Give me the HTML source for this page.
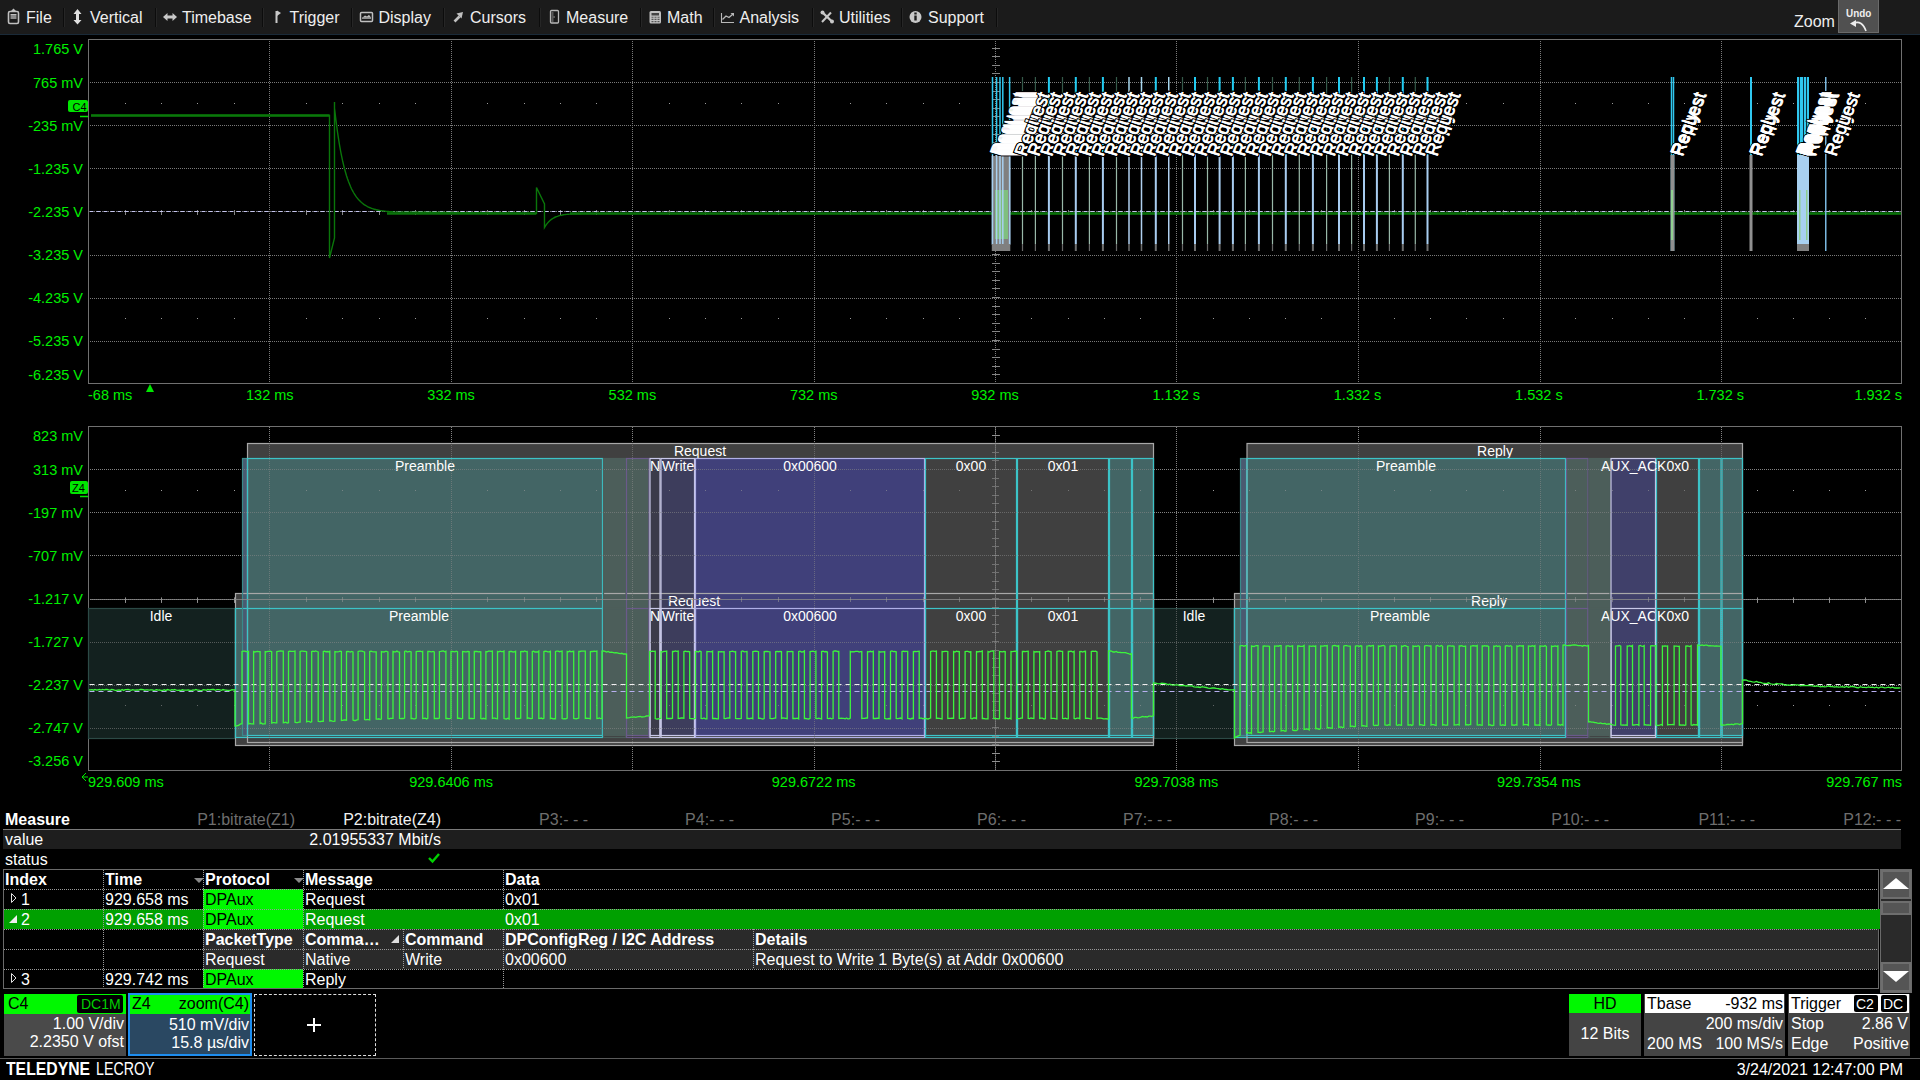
<!DOCTYPE html>
<html><head><meta charset="utf-8"><style>
*{margin:0;padding:0;box-sizing:border-box}
html,body{width:1920px;height:1080px;overflow:hidden;background:#000;font-family:"Liberation Sans", sans-serif;color:#fff}
.abs{position:absolute}
#menu{position:absolute;left:0;top:0;width:1920px;height:35px;background:#1b1b1b;border-bottom:1px solid #1a2a38}
.mi{position:absolute;top:8px;font-size:16px;line-height:19px;color:#eee;white-space:nowrap}
.sep{position:absolute;top:8px;width:2px;height:19px;background:#0c0c0c;border-right:1px solid #262626}
svg text{font-family:"Liberation Sans", sans-serif}
.t{position:absolute;white-space:nowrap;font-size:16px;line-height:20px}
</style></head><body>
<div id="menu"><div class="mi" style="left:26px">File</div><div class="mi" style="left:90px">Vertical</div><div class="mi" style="left:182px">Timebase</div><div class="mi" style="left:289.5px">Trigger</div><div class="mi" style="left:378.5px">Display</div><div class="mi" style="left:470px">Cursors</div><div class="mi" style="left:566px">Measure</div><div class="mi" style="left:667px">Math</div><div class="mi" style="left:739.5px">Analysis</div><div class="mi" style="left:839px">Utilities</div><div class="mi" style="left:928px">Support</div><div class="sep" style="left:63px"></div><div class="sep" style="left:155px"></div><div class="sep" style="left:262px"></div><div class="sep" style="left:351px"></div><div class="sep" style="left:443px"></div><div class="sep" style="left:539px"></div><div class="sep" style="left:640px"></div><div class="sep" style="left:713px"></div><div class="sep" style="left:812px"></div><div class="sep" style="left:901px"></div><div class="sep" style="left:996px"></div>
<svg style="position:absolute;left:0;top:0" width="1000" height="34">
 <rect x="8.5" y="11.5" width="10" height="12" rx="1.5" fill="none" stroke="#c0c0c0" stroke-width="1.6"/>
 <path d="M11,11 L13.5,8.5 L16,11 Z" fill="#c0c0c0"/><rect x="10.5" y="15" width="6" height="4" fill="#8a8a8a"/><rect x="10.5" y="14" width="6" height="1" fill="#c0c0c0"/>
 <path d="M77.5,9 L73.5,14 L76,14 L76,20 L73.5,20 L77.5,24.5 L81.5,20 L79,20 L79,14 L81.5,14 Z" fill="#e0e0e0"/>
 <path d="M163,17 L167.5,13 L167.5,15.5 L172.5,15.5 L172.5,13 L177,17 L172.5,21 L172.5,18.5 L167.5,18.5 L167.5,21 Z" fill="#c8c8c8"/>
 <path d="M276.5,11 L276.5,23" stroke="#c8c8c8" stroke-width="2"/><path d="M277,10.5 L281,13 L277,16 Z" fill="#c8c8c8"/>
 <rect x="360.5" y="12.5" width="12" height="9" rx="1" fill="none" stroke="#c0c0c0" stroke-width="1.5"/><path d="M362.5,17.5 L365,15.5 L367,16.5 L369,14.8 L371,17.5 Z" fill="#c0c0c0"/><rect x="362" y="17.5" width="9" height="1.2" fill="#c0c0c0"/>
 <path d="M454.5,21.5 L459.5,16.5" stroke="#c0c0c0" stroke-width="2.6"/><path d="M456.5,13.5 L463,12 L461.5,18.5 Z" fill="#c0c0c0"/>
 <rect x="550.5" y="10.5" width="8" height="12.5" rx="1" fill="none" stroke="#b8b8b8" stroke-width="1.3"/><path d="M551.5,13h2 M551.5,15h2 M551.5,17h3.5 M551.5,19h2 M551.5,21h2" stroke="#b8b8b8" stroke-width="0.8"/>
 <rect x="649.5" y="11" width="11.5" height="12.5" rx="1.5" fill="#c0c0c0"/><rect x="651.5" y="13" width="7.5" height="2.5" fill="#444"/>
 <path d="M651.5,17.2h2 M654.5,17.2h2 M657.5,17.2h2 M651.5,19.4h2 M654.5,19.4h2 M657.5,19.4h2 M651.5,21.6h2 M654.5,21.6h2 M657.5,21.6h2" stroke="#555" stroke-width="1.1"/>
 <path d="M721.5,13 L721.5,22.5 L734,22.5" fill="none" stroke="#b8b8b8" stroke-width="1.1"/><path d="M722.5,19.5 L726,16 L729,17.5 L733,14" fill="none" stroke="#b8b8b8" stroke-width="1.3"/><path d="M730.5,13 L734,13 L734,16.5 Z" fill="#b8b8b8"/>
 <path d="M822,22 L831,12.5" stroke="#c8c8c8" stroke-width="2"/><path d="M823,13 L832,21.5" stroke="#c8c8c8" stroke-width="2.4"/><circle cx="822.5" cy="12.5" r="2" fill="#c8c8c8"/><circle cx="832" cy="21.5" r="2" fill="#c8c8c8"/>
 <circle cx="915.5" cy="17" r="6" fill="#c8c8c8"/><rect x="914.3" y="15.5" width="2.4" height="5" fill="#1b1b1b"/><rect x="914.3" y="12.5" width="2.4" height="2" fill="#1b1b1b"/>
</svg>
<div class="t" style="left:1794px;top:12px;font-size:16px;color:#eee">Zoom</div>
<div class="abs" style="left:1838px;top:0;width:41px;height:33px;background:#505050;border:1px solid #6a6a6a;border-top:0"></div>
<div class="t" style="left:1846px;top:7px;font-size:11px;line-height:12px;font-weight:bold;color:#eee;transform:scaleX(0.9);transform-origin:0 0">Undo</div>
<svg class="abs" style="left:1849px;top:18px" width="20" height="14"><path d="M5,5 Q13,2 17,13" fill="none" stroke="#eee" stroke-width="1.6"/><path d="M1,5.5 L7,2 L7,9 Z" fill="#eee"/></svg>
</div>
<svg class="abs" style="left:0;top:0" width="1920" height="1080">
<line x1="269.5" y1="41" x2="269.5" y2="382.5" stroke="#7a7a7a" stroke-width="1" stroke-dasharray="1 1" shape-rendering="crispEdges"/>
<line x1="451.5" y1="41" x2="451.5" y2="382.5" stroke="#7a7a7a" stroke-width="1" stroke-dasharray="1 1" shape-rendering="crispEdges"/>
<line x1="632.5" y1="41" x2="632.5" y2="382.5" stroke="#7a7a7a" stroke-width="1" stroke-dasharray="1 1" shape-rendering="crispEdges"/>
<line x1="814.5" y1="41" x2="814.5" y2="382.5" stroke="#7a7a7a" stroke-width="1" stroke-dasharray="1 1" shape-rendering="crispEdges"/>
<line x1="995.5" y1="41" x2="995.5" y2="382.5" stroke="#7a7a7a" stroke-width="1" stroke-dasharray="1 1" shape-rendering="crispEdges"/>
<line x1="1176.5" y1="41" x2="1176.5" y2="382.5" stroke="#7a7a7a" stroke-width="1" stroke-dasharray="1 1" shape-rendering="crispEdges"/>
<line x1="1358.5" y1="41" x2="1358.5" y2="382.5" stroke="#7a7a7a" stroke-width="1" stroke-dasharray="1 1" shape-rendering="crispEdges"/>
<line x1="1540.5" y1="41" x2="1540.5" y2="382.5" stroke="#7a7a7a" stroke-width="1" stroke-dasharray="1 1" shape-rendering="crispEdges"/>
<line x1="1721.5" y1="41" x2="1721.5" y2="382.5" stroke="#7a7a7a" stroke-width="1" stroke-dasharray="1 1" shape-rendering="crispEdges"/>
<line x1="90" y1="82.5" x2="1901" y2="82.5" stroke="#7a7a7a" stroke-width="1" stroke-dasharray="1 1" shape-rendering="crispEdges"/>
<line x1="90" y1="125.5" x2="1901" y2="125.5" stroke="#7a7a7a" stroke-width="1" stroke-dasharray="1 1" shape-rendering="crispEdges"/>
<line x1="90" y1="168.5" x2="1901" y2="168.5" stroke="#7a7a7a" stroke-width="1" stroke-dasharray="1 1" shape-rendering="crispEdges"/>
<line x1="90" y1="211.5" x2="1901" y2="211.5" stroke="#7a7a7a" stroke-width="1" stroke-dasharray="1 1" shape-rendering="crispEdges"/>
<line x1="90" y1="255.5" x2="1901" y2="255.5" stroke="#7a7a7a" stroke-width="1" stroke-dasharray="1 1" shape-rendering="crispEdges"/>
<line x1="90" y1="298.5" x2="1901" y2="298.5" stroke="#7a7a7a" stroke-width="1" stroke-dasharray="1 1" shape-rendering="crispEdges"/>
<line x1="90" y1="341.5" x2="1901" y2="341.5" stroke="#7a7a7a" stroke-width="1" stroke-dasharray="1 1" shape-rendering="crispEdges"/>
<rect x="125" y="103" width="1" height="1" fill="#9a9a9a" stroke="none" stroke-width="1" />
<rect x="161" y="103" width="1" height="1" fill="#9a9a9a" stroke="none" stroke-width="1" />
<rect x="197" y="103" width="1" height="1" fill="#9a9a9a" stroke="none" stroke-width="1" />
<rect x="234" y="103" width="1" height="1" fill="#9a9a9a" stroke="none" stroke-width="1" />
<rect x="306" y="103" width="1" height="1" fill="#9a9a9a" stroke="none" stroke-width="1" />
<rect x="342" y="103" width="1" height="1" fill="#9a9a9a" stroke="none" stroke-width="1" />
<rect x="379" y="103" width="1" height="1" fill="#9a9a9a" stroke="none" stroke-width="1" />
<rect x="415" y="103" width="1" height="1" fill="#9a9a9a" stroke="none" stroke-width="1" />
<rect x="487" y="103" width="1" height="1" fill="#9a9a9a" stroke="none" stroke-width="1" />
<rect x="524" y="103" width="1" height="1" fill="#9a9a9a" stroke="none" stroke-width="1" />
<rect x="560" y="103" width="1" height="1" fill="#9a9a9a" stroke="none" stroke-width="1" />
<rect x="596" y="103" width="1" height="1" fill="#9a9a9a" stroke="none" stroke-width="1" />
<rect x="669" y="103" width="1" height="1" fill="#9a9a9a" stroke="none" stroke-width="1" />
<rect x="705" y="103" width="1" height="1" fill="#9a9a9a" stroke="none" stroke-width="1" />
<rect x="741" y="103" width="1" height="1" fill="#9a9a9a" stroke="none" stroke-width="1" />
<rect x="778" y="103" width="1" height="1" fill="#9a9a9a" stroke="none" stroke-width="1" />
<rect x="850" y="103" width="1" height="1" fill="#9a9a9a" stroke="none" stroke-width="1" />
<rect x="886" y="103" width="1" height="1" fill="#9a9a9a" stroke="none" stroke-width="1" />
<rect x="923" y="103" width="1" height="1" fill="#9a9a9a" stroke="none" stroke-width="1" />
<rect x="959" y="103" width="1" height="1" fill="#9a9a9a" stroke="none" stroke-width="1" />
<rect x="1031" y="103" width="1" height="1" fill="#9a9a9a" stroke="none" stroke-width="1" />
<rect x="1068" y="103" width="1" height="1" fill="#9a9a9a" stroke="none" stroke-width="1" />
<rect x="1104" y="103" width="1" height="1" fill="#9a9a9a" stroke="none" stroke-width="1" />
<rect x="1140" y="103" width="1" height="1" fill="#9a9a9a" stroke="none" stroke-width="1" />
<rect x="1213" y="103" width="1" height="1" fill="#9a9a9a" stroke="none" stroke-width="1" />
<rect x="1249" y="103" width="1" height="1" fill="#9a9a9a" stroke="none" stroke-width="1" />
<rect x="1285" y="103" width="1" height="1" fill="#9a9a9a" stroke="none" stroke-width="1" />
<rect x="1321" y="103" width="1" height="1" fill="#9a9a9a" stroke="none" stroke-width="1" />
<rect x="1394" y="103" width="1" height="1" fill="#9a9a9a" stroke="none" stroke-width="1" />
<rect x="1430" y="103" width="1" height="1" fill="#9a9a9a" stroke="none" stroke-width="1" />
<rect x="1466" y="103" width="1" height="1" fill="#9a9a9a" stroke="none" stroke-width="1" />
<rect x="1503" y="103" width="1" height="1" fill="#9a9a9a" stroke="none" stroke-width="1" />
<rect x="1575" y="103" width="1" height="1" fill="#9a9a9a" stroke="none" stroke-width="1" />
<rect x="1612" y="103" width="1" height="1" fill="#9a9a9a" stroke="none" stroke-width="1" />
<rect x="1648" y="103" width="1" height="1" fill="#9a9a9a" stroke="none" stroke-width="1" />
<rect x="1684" y="103" width="1" height="1" fill="#9a9a9a" stroke="none" stroke-width="1" />
<rect x="1757" y="103" width="1" height="1" fill="#9a9a9a" stroke="none" stroke-width="1" />
<rect x="1793" y="103" width="1" height="1" fill="#9a9a9a" stroke="none" stroke-width="1" />
<rect x="1829" y="103" width="1" height="1" fill="#9a9a9a" stroke="none" stroke-width="1" />
<rect x="1865" y="103" width="1" height="1" fill="#9a9a9a" stroke="none" stroke-width="1" />
<rect x="125" y="318" width="1" height="1" fill="#9a9a9a" stroke="none" stroke-width="1" />
<rect x="161" y="318" width="1" height="1" fill="#9a9a9a" stroke="none" stroke-width="1" />
<rect x="197" y="318" width="1" height="1" fill="#9a9a9a" stroke="none" stroke-width="1" />
<rect x="234" y="318" width="1" height="1" fill="#9a9a9a" stroke="none" stroke-width="1" />
<rect x="306" y="318" width="1" height="1" fill="#9a9a9a" stroke="none" stroke-width="1" />
<rect x="342" y="318" width="1" height="1" fill="#9a9a9a" stroke="none" stroke-width="1" />
<rect x="379" y="318" width="1" height="1" fill="#9a9a9a" stroke="none" stroke-width="1" />
<rect x="415" y="318" width="1" height="1" fill="#9a9a9a" stroke="none" stroke-width="1" />
<rect x="487" y="318" width="1" height="1" fill="#9a9a9a" stroke="none" stroke-width="1" />
<rect x="524" y="318" width="1" height="1" fill="#9a9a9a" stroke="none" stroke-width="1" />
<rect x="560" y="318" width="1" height="1" fill="#9a9a9a" stroke="none" stroke-width="1" />
<rect x="596" y="318" width="1" height="1" fill="#9a9a9a" stroke="none" stroke-width="1" />
<rect x="669" y="318" width="1" height="1" fill="#9a9a9a" stroke="none" stroke-width="1" />
<rect x="705" y="318" width="1" height="1" fill="#9a9a9a" stroke="none" stroke-width="1" />
<rect x="741" y="318" width="1" height="1" fill="#9a9a9a" stroke="none" stroke-width="1" />
<rect x="778" y="318" width="1" height="1" fill="#9a9a9a" stroke="none" stroke-width="1" />
<rect x="850" y="318" width="1" height="1" fill="#9a9a9a" stroke="none" stroke-width="1" />
<rect x="886" y="318" width="1" height="1" fill="#9a9a9a" stroke="none" stroke-width="1" />
<rect x="923" y="318" width="1" height="1" fill="#9a9a9a" stroke="none" stroke-width="1" />
<rect x="959" y="318" width="1" height="1" fill="#9a9a9a" stroke="none" stroke-width="1" />
<rect x="1031" y="318" width="1" height="1" fill="#9a9a9a" stroke="none" stroke-width="1" />
<rect x="1068" y="318" width="1" height="1" fill="#9a9a9a" stroke="none" stroke-width="1" />
<rect x="1104" y="318" width="1" height="1" fill="#9a9a9a" stroke="none" stroke-width="1" />
<rect x="1140" y="318" width="1" height="1" fill="#9a9a9a" stroke="none" stroke-width="1" />
<rect x="1213" y="318" width="1" height="1" fill="#9a9a9a" stroke="none" stroke-width="1" />
<rect x="1249" y="318" width="1" height="1" fill="#9a9a9a" stroke="none" stroke-width="1" />
<rect x="1285" y="318" width="1" height="1" fill="#9a9a9a" stroke="none" stroke-width="1" />
<rect x="1321" y="318" width="1" height="1" fill="#9a9a9a" stroke="none" stroke-width="1" />
<rect x="1394" y="318" width="1" height="1" fill="#9a9a9a" stroke="none" stroke-width="1" />
<rect x="1430" y="318" width="1" height="1" fill="#9a9a9a" stroke="none" stroke-width="1" />
<rect x="1466" y="318" width="1" height="1" fill="#9a9a9a" stroke="none" stroke-width="1" />
<rect x="1503" y="318" width="1" height="1" fill="#9a9a9a" stroke="none" stroke-width="1" />
<rect x="1575" y="318" width="1" height="1" fill="#9a9a9a" stroke="none" stroke-width="1" />
<rect x="1612" y="318" width="1" height="1" fill="#9a9a9a" stroke="none" stroke-width="1" />
<rect x="1648" y="318" width="1" height="1" fill="#9a9a9a" stroke="none" stroke-width="1" />
<rect x="1684" y="318" width="1" height="1" fill="#9a9a9a" stroke="none" stroke-width="1" />
<rect x="1757" y="318" width="1" height="1" fill="#9a9a9a" stroke="none" stroke-width="1" />
<rect x="1793" y="318" width="1" height="1" fill="#9a9a9a" stroke="none" stroke-width="1" />
<rect x="1829" y="318" width="1" height="1" fill="#9a9a9a" stroke="none" stroke-width="1" />
<rect x="1865" y="318" width="1" height="1" fill="#9a9a9a" stroke="none" stroke-width="1" />
<line x1="125.5" y1="209.5" x2="125.5" y2="214.5" stroke="#858585" stroke-width="1" shape-rendering="crispEdges"/>
<line x1="161.5" y1="209.5" x2="161.5" y2="214.5" stroke="#858585" stroke-width="1" shape-rendering="crispEdges"/>
<line x1="197.5" y1="209.5" x2="197.5" y2="214.5" stroke="#858585" stroke-width="1" shape-rendering="crispEdges"/>
<line x1="234.5" y1="209.5" x2="234.5" y2="214.5" stroke="#858585" stroke-width="1" shape-rendering="crispEdges"/>
<line x1="306.5" y1="209.5" x2="306.5" y2="214.5" stroke="#858585" stroke-width="1" shape-rendering="crispEdges"/>
<line x1="342.5" y1="209.5" x2="342.5" y2="214.5" stroke="#858585" stroke-width="1" shape-rendering="crispEdges"/>
<line x1="379.5" y1="209.5" x2="379.5" y2="214.5" stroke="#858585" stroke-width="1" shape-rendering="crispEdges"/>
<line x1="415.5" y1="209.5" x2="415.5" y2="214.5" stroke="#858585" stroke-width="1" shape-rendering="crispEdges"/>
<line x1="487.5" y1="209.5" x2="487.5" y2="214.5" stroke="#858585" stroke-width="1" shape-rendering="crispEdges"/>
<line x1="524.5" y1="209.5" x2="524.5" y2="214.5" stroke="#858585" stroke-width="1" shape-rendering="crispEdges"/>
<line x1="560.5" y1="209.5" x2="560.5" y2="214.5" stroke="#858585" stroke-width="1" shape-rendering="crispEdges"/>
<line x1="596.5" y1="209.5" x2="596.5" y2="214.5" stroke="#858585" stroke-width="1" shape-rendering="crispEdges"/>
<line x1="669.5" y1="209.5" x2="669.5" y2="214.5" stroke="#858585" stroke-width="1" shape-rendering="crispEdges"/>
<line x1="705.5" y1="209.5" x2="705.5" y2="214.5" stroke="#858585" stroke-width="1" shape-rendering="crispEdges"/>
<line x1="741.5" y1="209.5" x2="741.5" y2="214.5" stroke="#858585" stroke-width="1" shape-rendering="crispEdges"/>
<line x1="778.5" y1="209.5" x2="778.5" y2="214.5" stroke="#858585" stroke-width="1" shape-rendering="crispEdges"/>
<line x1="850.5" y1="209.5" x2="850.5" y2="214.5" stroke="#858585" stroke-width="1" shape-rendering="crispEdges"/>
<line x1="886.5" y1="209.5" x2="886.5" y2="214.5" stroke="#858585" stroke-width="1" shape-rendering="crispEdges"/>
<line x1="923.5" y1="209.5" x2="923.5" y2="214.5" stroke="#858585" stroke-width="1" shape-rendering="crispEdges"/>
<line x1="959.5" y1="209.5" x2="959.5" y2="214.5" stroke="#858585" stroke-width="1" shape-rendering="crispEdges"/>
<line x1="1031.5" y1="209.5" x2="1031.5" y2="214.5" stroke="#858585" stroke-width="1" shape-rendering="crispEdges"/>
<line x1="1068.5" y1="209.5" x2="1068.5" y2="214.5" stroke="#858585" stroke-width="1" shape-rendering="crispEdges"/>
<line x1="1104.5" y1="209.5" x2="1104.5" y2="214.5" stroke="#858585" stroke-width="1" shape-rendering="crispEdges"/>
<line x1="1140.5" y1="209.5" x2="1140.5" y2="214.5" stroke="#858585" stroke-width="1" shape-rendering="crispEdges"/>
<line x1="1213.5" y1="209.5" x2="1213.5" y2="214.5" stroke="#858585" stroke-width="1" shape-rendering="crispEdges"/>
<line x1="1249.5" y1="209.5" x2="1249.5" y2="214.5" stroke="#858585" stroke-width="1" shape-rendering="crispEdges"/>
<line x1="1285.5" y1="209.5" x2="1285.5" y2="214.5" stroke="#858585" stroke-width="1" shape-rendering="crispEdges"/>
<line x1="1321.5" y1="209.5" x2="1321.5" y2="214.5" stroke="#858585" stroke-width="1" shape-rendering="crispEdges"/>
<line x1="1394.5" y1="209.5" x2="1394.5" y2="214.5" stroke="#858585" stroke-width="1" shape-rendering="crispEdges"/>
<line x1="1430.5" y1="209.5" x2="1430.5" y2="214.5" stroke="#858585" stroke-width="1" shape-rendering="crispEdges"/>
<line x1="1466.5" y1="209.5" x2="1466.5" y2="214.5" stroke="#858585" stroke-width="1" shape-rendering="crispEdges"/>
<line x1="1503.5" y1="209.5" x2="1503.5" y2="214.5" stroke="#858585" stroke-width="1" shape-rendering="crispEdges"/>
<line x1="1575.5" y1="209.5" x2="1575.5" y2="214.5" stroke="#858585" stroke-width="1" shape-rendering="crispEdges"/>
<line x1="1612.5" y1="209.5" x2="1612.5" y2="214.5" stroke="#858585" stroke-width="1" shape-rendering="crispEdges"/>
<line x1="1648.5" y1="209.5" x2="1648.5" y2="214.5" stroke="#858585" stroke-width="1" shape-rendering="crispEdges"/>
<line x1="1684.5" y1="209.5" x2="1684.5" y2="214.5" stroke="#858585" stroke-width="1" shape-rendering="crispEdges"/>
<line x1="1757.5" y1="209.5" x2="1757.5" y2="214.5" stroke="#858585" stroke-width="1" shape-rendering="crispEdges"/>
<line x1="1793.5" y1="209.5" x2="1793.5" y2="214.5" stroke="#858585" stroke-width="1" shape-rendering="crispEdges"/>
<line x1="1829.5" y1="209.5" x2="1829.5" y2="214.5" stroke="#858585" stroke-width="1" shape-rendering="crispEdges"/>
<line x1="1865.5" y1="209.5" x2="1865.5" y2="214.5" stroke="#858585" stroke-width="1" shape-rendering="crispEdges"/>
<line x1="991.5" y1="48.5" x2="999.5" y2="48.5" stroke="#858585" stroke-width="1" shape-rendering="crispEdges"/>
<line x1="991.5" y1="56.5" x2="999.5" y2="56.5" stroke="#858585" stroke-width="1" shape-rendering="crispEdges"/>
<line x1="991.5" y1="65.5" x2="999.5" y2="65.5" stroke="#858585" stroke-width="1" shape-rendering="crispEdges"/>
<line x1="991.5" y1="73.5" x2="999.5" y2="73.5" stroke="#858585" stroke-width="1" shape-rendering="crispEdges"/>
<line x1="991.5" y1="82.5" x2="999.5" y2="82.5" stroke="#858585" stroke-width="1" shape-rendering="crispEdges"/>
<line x1="991.5" y1="91.5" x2="999.5" y2="91.5" stroke="#858585" stroke-width="1" shape-rendering="crispEdges"/>
<line x1="991.5" y1="99.5" x2="999.5" y2="99.5" stroke="#858585" stroke-width="1" shape-rendering="crispEdges"/>
<line x1="991.5" y1="108.5" x2="999.5" y2="108.5" stroke="#858585" stroke-width="1" shape-rendering="crispEdges"/>
<line x1="991.5" y1="116.5" x2="999.5" y2="116.5" stroke="#858585" stroke-width="1" shape-rendering="crispEdges"/>
<line x1="991.5" y1="125.5" x2="999.5" y2="125.5" stroke="#858585" stroke-width="1" shape-rendering="crispEdges"/>
<line x1="991.5" y1="134.5" x2="999.5" y2="134.5" stroke="#858585" stroke-width="1" shape-rendering="crispEdges"/>
<line x1="991.5" y1="142.5" x2="999.5" y2="142.5" stroke="#858585" stroke-width="1" shape-rendering="crispEdges"/>
<line x1="991.5" y1="151.5" x2="999.5" y2="151.5" stroke="#858585" stroke-width="1" shape-rendering="crispEdges"/>
<line x1="991.5" y1="159.5" x2="999.5" y2="159.5" stroke="#858585" stroke-width="1" shape-rendering="crispEdges"/>
<line x1="991.5" y1="168.5" x2="999.5" y2="168.5" stroke="#858585" stroke-width="1" shape-rendering="crispEdges"/>
<line x1="991.5" y1="177.5" x2="999.5" y2="177.5" stroke="#858585" stroke-width="1" shape-rendering="crispEdges"/>
<line x1="991.5" y1="185.5" x2="999.5" y2="185.5" stroke="#858585" stroke-width="1" shape-rendering="crispEdges"/>
<line x1="991.5" y1="194.5" x2="999.5" y2="194.5" stroke="#858585" stroke-width="1" shape-rendering="crispEdges"/>
<line x1="991.5" y1="202.5" x2="999.5" y2="202.5" stroke="#858585" stroke-width="1" shape-rendering="crispEdges"/>
<line x1="991.5" y1="211.5" x2="999.5" y2="211.5" stroke="#858585" stroke-width="1" shape-rendering="crispEdges"/>
<line x1="991.5" y1="220.5" x2="999.5" y2="220.5" stroke="#858585" stroke-width="1" shape-rendering="crispEdges"/>
<line x1="991.5" y1="228.5" x2="999.5" y2="228.5" stroke="#858585" stroke-width="1" shape-rendering="crispEdges"/>
<line x1="991.5" y1="237.5" x2="999.5" y2="237.5" stroke="#858585" stroke-width="1" shape-rendering="crispEdges"/>
<line x1="991.5" y1="245.5" x2="999.5" y2="245.5" stroke="#858585" stroke-width="1" shape-rendering="crispEdges"/>
<line x1="991.5" y1="254.5" x2="999.5" y2="254.5" stroke="#858585" stroke-width="1" shape-rendering="crispEdges"/>
<line x1="991.5" y1="263.5" x2="999.5" y2="263.5" stroke="#858585" stroke-width="1" shape-rendering="crispEdges"/>
<line x1="991.5" y1="271.5" x2="999.5" y2="271.5" stroke="#858585" stroke-width="1" shape-rendering="crispEdges"/>
<line x1="991.5" y1="280.5" x2="999.5" y2="280.5" stroke="#858585" stroke-width="1" shape-rendering="crispEdges"/>
<line x1="991.5" y1="288.5" x2="999.5" y2="288.5" stroke="#858585" stroke-width="1" shape-rendering="crispEdges"/>
<line x1="991.5" y1="297.5" x2="999.5" y2="297.5" stroke="#858585" stroke-width="1" shape-rendering="crispEdges"/>
<line x1="991.5" y1="306.5" x2="999.5" y2="306.5" stroke="#858585" stroke-width="1" shape-rendering="crispEdges"/>
<line x1="991.5" y1="314.5" x2="999.5" y2="314.5" stroke="#858585" stroke-width="1" shape-rendering="crispEdges"/>
<line x1="991.5" y1="323.5" x2="999.5" y2="323.5" stroke="#858585" stroke-width="1" shape-rendering="crispEdges"/>
<line x1="991.5" y1="331.5" x2="999.5" y2="331.5" stroke="#858585" stroke-width="1" shape-rendering="crispEdges"/>
<line x1="991.5" y1="340.5" x2="999.5" y2="340.5" stroke="#858585" stroke-width="1" shape-rendering="crispEdges"/>
<line x1="991.5" y1="349.5" x2="999.5" y2="349.5" stroke="#858585" stroke-width="1" shape-rendering="crispEdges"/>
<line x1="991.5" y1="357.5" x2="999.5" y2="357.5" stroke="#858585" stroke-width="1" shape-rendering="crispEdges"/>
<line x1="991.5" y1="366.5" x2="999.5" y2="366.5" stroke="#858585" stroke-width="1" shape-rendering="crispEdges"/>
<line x1="991.5" y1="374.5" x2="999.5" y2="374.5" stroke="#858585" stroke-width="1" shape-rendering="crispEdges"/>
<rect x="88.5" y="39.5" width="1813" height="344.0" fill="none" stroke="#707070" stroke-width="1" shape-rendering="crispEdges"/>
<line x1="269.5" y1="427" x2="269.5" y2="769.5" stroke="#7a7a7a" stroke-width="1" stroke-dasharray="1 1" shape-rendering="crispEdges"/>
<line x1="451.5" y1="427" x2="451.5" y2="769.5" stroke="#7a7a7a" stroke-width="1" stroke-dasharray="1 1" shape-rendering="crispEdges"/>
<line x1="632.5" y1="427" x2="632.5" y2="769.5" stroke="#7a7a7a" stroke-width="1" stroke-dasharray="1 1" shape-rendering="crispEdges"/>
<line x1="814.5" y1="427" x2="814.5" y2="769.5" stroke="#7a7a7a" stroke-width="1" stroke-dasharray="1 1" shape-rendering="crispEdges"/>
<line x1="995.5" y1="427" x2="995.5" y2="769.5" stroke="#7a7a7a" stroke-width="1" stroke-dasharray="1 1" shape-rendering="crispEdges"/>
<line x1="1176.5" y1="427" x2="1176.5" y2="769.5" stroke="#7a7a7a" stroke-width="1" stroke-dasharray="1 1" shape-rendering="crispEdges"/>
<line x1="1358.5" y1="427" x2="1358.5" y2="769.5" stroke="#7a7a7a" stroke-width="1" stroke-dasharray="1 1" shape-rendering="crispEdges"/>
<line x1="1540.5" y1="427" x2="1540.5" y2="769.5" stroke="#7a7a7a" stroke-width="1" stroke-dasharray="1 1" shape-rendering="crispEdges"/>
<line x1="1721.5" y1="427" x2="1721.5" y2="769.5" stroke="#7a7a7a" stroke-width="1" stroke-dasharray="1 1" shape-rendering="crispEdges"/>
<line x1="90" y1="469.5" x2="1901" y2="469.5" stroke="#7a7a7a" stroke-width="1" stroke-dasharray="1 1" shape-rendering="crispEdges"/>
<line x1="90" y1="512.5" x2="1901" y2="512.5" stroke="#7a7a7a" stroke-width="1" stroke-dasharray="1 1" shape-rendering="crispEdges"/>
<line x1="90" y1="555.5" x2="1901" y2="555.5" stroke="#7a7a7a" stroke-width="1" stroke-dasharray="1 1" shape-rendering="crispEdges"/>
<line x1="90" y1="599.5" x2="1901" y2="599.5" stroke="#7a7a7a" stroke-width="1" stroke-dasharray="1 1" shape-rendering="crispEdges"/>
<line x1="90" y1="642.5" x2="1901" y2="642.5" stroke="#7a7a7a" stroke-width="1" stroke-dasharray="1 1" shape-rendering="crispEdges"/>
<line x1="90" y1="685.5" x2="1901" y2="685.5" stroke="#7a7a7a" stroke-width="1" stroke-dasharray="1 1" shape-rendering="crispEdges"/>
<line x1="90" y1="728.5" x2="1901" y2="728.5" stroke="#7a7a7a" stroke-width="1" stroke-dasharray="1 1" shape-rendering="crispEdges"/>
<rect x="125" y="490" width="1" height="1" fill="#9a9a9a" stroke="none" stroke-width="1" />
<rect x="161" y="490" width="1" height="1" fill="#9a9a9a" stroke="none" stroke-width="1" />
<rect x="197" y="490" width="1" height="1" fill="#9a9a9a" stroke="none" stroke-width="1" />
<rect x="234" y="490" width="1" height="1" fill="#9a9a9a" stroke="none" stroke-width="1" />
<rect x="306" y="490" width="1" height="1" fill="#9a9a9a" stroke="none" stroke-width="1" />
<rect x="342" y="490" width="1" height="1" fill="#9a9a9a" stroke="none" stroke-width="1" />
<rect x="379" y="490" width="1" height="1" fill="#9a9a9a" stroke="none" stroke-width="1" />
<rect x="415" y="490" width="1" height="1" fill="#9a9a9a" stroke="none" stroke-width="1" />
<rect x="487" y="490" width="1" height="1" fill="#9a9a9a" stroke="none" stroke-width="1" />
<rect x="524" y="490" width="1" height="1" fill="#9a9a9a" stroke="none" stroke-width="1" />
<rect x="560" y="490" width="1" height="1" fill="#9a9a9a" stroke="none" stroke-width="1" />
<rect x="596" y="490" width="1" height="1" fill="#9a9a9a" stroke="none" stroke-width="1" />
<rect x="669" y="490" width="1" height="1" fill="#9a9a9a" stroke="none" stroke-width="1" />
<rect x="705" y="490" width="1" height="1" fill="#9a9a9a" stroke="none" stroke-width="1" />
<rect x="741" y="490" width="1" height="1" fill="#9a9a9a" stroke="none" stroke-width="1" />
<rect x="778" y="490" width="1" height="1" fill="#9a9a9a" stroke="none" stroke-width="1" />
<rect x="850" y="490" width="1" height="1" fill="#9a9a9a" stroke="none" stroke-width="1" />
<rect x="886" y="490" width="1" height="1" fill="#9a9a9a" stroke="none" stroke-width="1" />
<rect x="923" y="490" width="1" height="1" fill="#9a9a9a" stroke="none" stroke-width="1" />
<rect x="959" y="490" width="1" height="1" fill="#9a9a9a" stroke="none" stroke-width="1" />
<rect x="1031" y="490" width="1" height="1" fill="#9a9a9a" stroke="none" stroke-width="1" />
<rect x="1068" y="490" width="1" height="1" fill="#9a9a9a" stroke="none" stroke-width="1" />
<rect x="1104" y="490" width="1" height="1" fill="#9a9a9a" stroke="none" stroke-width="1" />
<rect x="1140" y="490" width="1" height="1" fill="#9a9a9a" stroke="none" stroke-width="1" />
<rect x="1213" y="490" width="1" height="1" fill="#9a9a9a" stroke="none" stroke-width="1" />
<rect x="1249" y="490" width="1" height="1" fill="#9a9a9a" stroke="none" stroke-width="1" />
<rect x="1285" y="490" width="1" height="1" fill="#9a9a9a" stroke="none" stroke-width="1" />
<rect x="1321" y="490" width="1" height="1" fill="#9a9a9a" stroke="none" stroke-width="1" />
<rect x="1394" y="490" width="1" height="1" fill="#9a9a9a" stroke="none" stroke-width="1" />
<rect x="1430" y="490" width="1" height="1" fill="#9a9a9a" stroke="none" stroke-width="1" />
<rect x="1466" y="490" width="1" height="1" fill="#9a9a9a" stroke="none" stroke-width="1" />
<rect x="1503" y="490" width="1" height="1" fill="#9a9a9a" stroke="none" stroke-width="1" />
<rect x="1575" y="490" width="1" height="1" fill="#9a9a9a" stroke="none" stroke-width="1" />
<rect x="1612" y="490" width="1" height="1" fill="#9a9a9a" stroke="none" stroke-width="1" />
<rect x="1648" y="490" width="1" height="1" fill="#9a9a9a" stroke="none" stroke-width="1" />
<rect x="1684" y="490" width="1" height="1" fill="#9a9a9a" stroke="none" stroke-width="1" />
<rect x="1757" y="490" width="1" height="1" fill="#9a9a9a" stroke="none" stroke-width="1" />
<rect x="1793" y="490" width="1" height="1" fill="#9a9a9a" stroke="none" stroke-width="1" />
<rect x="1829" y="490" width="1" height="1" fill="#9a9a9a" stroke="none" stroke-width="1" />
<rect x="1865" y="490" width="1" height="1" fill="#9a9a9a" stroke="none" stroke-width="1" />
<rect x="125" y="705" width="1" height="1" fill="#9a9a9a" stroke="none" stroke-width="1" />
<rect x="161" y="705" width="1" height="1" fill="#9a9a9a" stroke="none" stroke-width="1" />
<rect x="197" y="705" width="1" height="1" fill="#9a9a9a" stroke="none" stroke-width="1" />
<rect x="234" y="705" width="1" height="1" fill="#9a9a9a" stroke="none" stroke-width="1" />
<rect x="306" y="705" width="1" height="1" fill="#9a9a9a" stroke="none" stroke-width="1" />
<rect x="342" y="705" width="1" height="1" fill="#9a9a9a" stroke="none" stroke-width="1" />
<rect x="379" y="705" width="1" height="1" fill="#9a9a9a" stroke="none" stroke-width="1" />
<rect x="415" y="705" width="1" height="1" fill="#9a9a9a" stroke="none" stroke-width="1" />
<rect x="487" y="705" width="1" height="1" fill="#9a9a9a" stroke="none" stroke-width="1" />
<rect x="524" y="705" width="1" height="1" fill="#9a9a9a" stroke="none" stroke-width="1" />
<rect x="560" y="705" width="1" height="1" fill="#9a9a9a" stroke="none" stroke-width="1" />
<rect x="596" y="705" width="1" height="1" fill="#9a9a9a" stroke="none" stroke-width="1" />
<rect x="669" y="705" width="1" height="1" fill="#9a9a9a" stroke="none" stroke-width="1" />
<rect x="705" y="705" width="1" height="1" fill="#9a9a9a" stroke="none" stroke-width="1" />
<rect x="741" y="705" width="1" height="1" fill="#9a9a9a" stroke="none" stroke-width="1" />
<rect x="778" y="705" width="1" height="1" fill="#9a9a9a" stroke="none" stroke-width="1" />
<rect x="850" y="705" width="1" height="1" fill="#9a9a9a" stroke="none" stroke-width="1" />
<rect x="886" y="705" width="1" height="1" fill="#9a9a9a" stroke="none" stroke-width="1" />
<rect x="923" y="705" width="1" height="1" fill="#9a9a9a" stroke="none" stroke-width="1" />
<rect x="959" y="705" width="1" height="1" fill="#9a9a9a" stroke="none" stroke-width="1" />
<rect x="1031" y="705" width="1" height="1" fill="#9a9a9a" stroke="none" stroke-width="1" />
<rect x="1068" y="705" width="1" height="1" fill="#9a9a9a" stroke="none" stroke-width="1" />
<rect x="1104" y="705" width="1" height="1" fill="#9a9a9a" stroke="none" stroke-width="1" />
<rect x="1140" y="705" width="1" height="1" fill="#9a9a9a" stroke="none" stroke-width="1" />
<rect x="1213" y="705" width="1" height="1" fill="#9a9a9a" stroke="none" stroke-width="1" />
<rect x="1249" y="705" width="1" height="1" fill="#9a9a9a" stroke="none" stroke-width="1" />
<rect x="1285" y="705" width="1" height="1" fill="#9a9a9a" stroke="none" stroke-width="1" />
<rect x="1321" y="705" width="1" height="1" fill="#9a9a9a" stroke="none" stroke-width="1" />
<rect x="1394" y="705" width="1" height="1" fill="#9a9a9a" stroke="none" stroke-width="1" />
<rect x="1430" y="705" width="1" height="1" fill="#9a9a9a" stroke="none" stroke-width="1" />
<rect x="1466" y="705" width="1" height="1" fill="#9a9a9a" stroke="none" stroke-width="1" />
<rect x="1503" y="705" width="1" height="1" fill="#9a9a9a" stroke="none" stroke-width="1" />
<rect x="1575" y="705" width="1" height="1" fill="#9a9a9a" stroke="none" stroke-width="1" />
<rect x="1612" y="705" width="1" height="1" fill="#9a9a9a" stroke="none" stroke-width="1" />
<rect x="1648" y="705" width="1" height="1" fill="#9a9a9a" stroke="none" stroke-width="1" />
<rect x="1684" y="705" width="1" height="1" fill="#9a9a9a" stroke="none" stroke-width="1" />
<rect x="1757" y="705" width="1" height="1" fill="#9a9a9a" stroke="none" stroke-width="1" />
<rect x="1793" y="705" width="1" height="1" fill="#9a9a9a" stroke="none" stroke-width="1" />
<rect x="1829" y="705" width="1" height="1" fill="#9a9a9a" stroke="none" stroke-width="1" />
<rect x="1865" y="705" width="1" height="1" fill="#9a9a9a" stroke="none" stroke-width="1" />
<line x1="125.5" y1="597.5" x2="125.5" y2="602.5" stroke="#858585" stroke-width="1" shape-rendering="crispEdges"/>
<line x1="161.5" y1="597.5" x2="161.5" y2="602.5" stroke="#858585" stroke-width="1" shape-rendering="crispEdges"/>
<line x1="197.5" y1="597.5" x2="197.5" y2="602.5" stroke="#858585" stroke-width="1" shape-rendering="crispEdges"/>
<line x1="234.5" y1="597.5" x2="234.5" y2="602.5" stroke="#858585" stroke-width="1" shape-rendering="crispEdges"/>
<line x1="306.5" y1="597.5" x2="306.5" y2="602.5" stroke="#858585" stroke-width="1" shape-rendering="crispEdges"/>
<line x1="342.5" y1="597.5" x2="342.5" y2="602.5" stroke="#858585" stroke-width="1" shape-rendering="crispEdges"/>
<line x1="379.5" y1="597.5" x2="379.5" y2="602.5" stroke="#858585" stroke-width="1" shape-rendering="crispEdges"/>
<line x1="415.5" y1="597.5" x2="415.5" y2="602.5" stroke="#858585" stroke-width="1" shape-rendering="crispEdges"/>
<line x1="487.5" y1="597.5" x2="487.5" y2="602.5" stroke="#858585" stroke-width="1" shape-rendering="crispEdges"/>
<line x1="524.5" y1="597.5" x2="524.5" y2="602.5" stroke="#858585" stroke-width="1" shape-rendering="crispEdges"/>
<line x1="560.5" y1="597.5" x2="560.5" y2="602.5" stroke="#858585" stroke-width="1" shape-rendering="crispEdges"/>
<line x1="596.5" y1="597.5" x2="596.5" y2="602.5" stroke="#858585" stroke-width="1" shape-rendering="crispEdges"/>
<line x1="669.5" y1="597.5" x2="669.5" y2="602.5" stroke="#858585" stroke-width="1" shape-rendering="crispEdges"/>
<line x1="705.5" y1="597.5" x2="705.5" y2="602.5" stroke="#858585" stroke-width="1" shape-rendering="crispEdges"/>
<line x1="741.5" y1="597.5" x2="741.5" y2="602.5" stroke="#858585" stroke-width="1" shape-rendering="crispEdges"/>
<line x1="778.5" y1="597.5" x2="778.5" y2="602.5" stroke="#858585" stroke-width="1" shape-rendering="crispEdges"/>
<line x1="850.5" y1="597.5" x2="850.5" y2="602.5" stroke="#858585" stroke-width="1" shape-rendering="crispEdges"/>
<line x1="886.5" y1="597.5" x2="886.5" y2="602.5" stroke="#858585" stroke-width="1" shape-rendering="crispEdges"/>
<line x1="923.5" y1="597.5" x2="923.5" y2="602.5" stroke="#858585" stroke-width="1" shape-rendering="crispEdges"/>
<line x1="959.5" y1="597.5" x2="959.5" y2="602.5" stroke="#858585" stroke-width="1" shape-rendering="crispEdges"/>
<line x1="1031.5" y1="597.5" x2="1031.5" y2="602.5" stroke="#858585" stroke-width="1" shape-rendering="crispEdges"/>
<line x1="1068.5" y1="597.5" x2="1068.5" y2="602.5" stroke="#858585" stroke-width="1" shape-rendering="crispEdges"/>
<line x1="1104.5" y1="597.5" x2="1104.5" y2="602.5" stroke="#858585" stroke-width="1" shape-rendering="crispEdges"/>
<line x1="1140.5" y1="597.5" x2="1140.5" y2="602.5" stroke="#858585" stroke-width="1" shape-rendering="crispEdges"/>
<line x1="1213.5" y1="597.5" x2="1213.5" y2="602.5" stroke="#858585" stroke-width="1" shape-rendering="crispEdges"/>
<line x1="1249.5" y1="597.5" x2="1249.5" y2="602.5" stroke="#858585" stroke-width="1" shape-rendering="crispEdges"/>
<line x1="1285.5" y1="597.5" x2="1285.5" y2="602.5" stroke="#858585" stroke-width="1" shape-rendering="crispEdges"/>
<line x1="1321.5" y1="597.5" x2="1321.5" y2="602.5" stroke="#858585" stroke-width="1" shape-rendering="crispEdges"/>
<line x1="1394.5" y1="597.5" x2="1394.5" y2="602.5" stroke="#858585" stroke-width="1" shape-rendering="crispEdges"/>
<line x1="1430.5" y1="597.5" x2="1430.5" y2="602.5" stroke="#858585" stroke-width="1" shape-rendering="crispEdges"/>
<line x1="1466.5" y1="597.5" x2="1466.5" y2="602.5" stroke="#858585" stroke-width="1" shape-rendering="crispEdges"/>
<line x1="1503.5" y1="597.5" x2="1503.5" y2="602.5" stroke="#858585" stroke-width="1" shape-rendering="crispEdges"/>
<line x1="1575.5" y1="597.5" x2="1575.5" y2="602.5" stroke="#858585" stroke-width="1" shape-rendering="crispEdges"/>
<line x1="1612.5" y1="597.5" x2="1612.5" y2="602.5" stroke="#858585" stroke-width="1" shape-rendering="crispEdges"/>
<line x1="1648.5" y1="597.5" x2="1648.5" y2="602.5" stroke="#858585" stroke-width="1" shape-rendering="crispEdges"/>
<line x1="1684.5" y1="597.5" x2="1684.5" y2="602.5" stroke="#858585" stroke-width="1" shape-rendering="crispEdges"/>
<line x1="1757.5" y1="597.5" x2="1757.5" y2="602.5" stroke="#858585" stroke-width="1" shape-rendering="crispEdges"/>
<line x1="1793.5" y1="597.5" x2="1793.5" y2="602.5" stroke="#858585" stroke-width="1" shape-rendering="crispEdges"/>
<line x1="1829.5" y1="597.5" x2="1829.5" y2="602.5" stroke="#858585" stroke-width="1" shape-rendering="crispEdges"/>
<line x1="1865.5" y1="597.5" x2="1865.5" y2="602.5" stroke="#858585" stroke-width="1" shape-rendering="crispEdges"/>
<line x1="991.5" y1="435.5" x2="999.5" y2="435.5" stroke="#858585" stroke-width="1" shape-rendering="crispEdges"/>
<line x1="991.5" y1="443.5" x2="999.5" y2="443.5" stroke="#858585" stroke-width="1" shape-rendering="crispEdges"/>
<line x1="991.5" y1="452.5" x2="999.5" y2="452.5" stroke="#858585" stroke-width="1" shape-rendering="crispEdges"/>
<line x1="991.5" y1="460.5" x2="999.5" y2="460.5" stroke="#858585" stroke-width="1" shape-rendering="crispEdges"/>
<line x1="991.5" y1="469.5" x2="999.5" y2="469.5" stroke="#858585" stroke-width="1" shape-rendering="crispEdges"/>
<line x1="991.5" y1="478.5" x2="999.5" y2="478.5" stroke="#858585" stroke-width="1" shape-rendering="crispEdges"/>
<line x1="991.5" y1="486.5" x2="999.5" y2="486.5" stroke="#858585" stroke-width="1" shape-rendering="crispEdges"/>
<line x1="991.5" y1="495.5" x2="999.5" y2="495.5" stroke="#858585" stroke-width="1" shape-rendering="crispEdges"/>
<line x1="991.5" y1="503.5" x2="999.5" y2="503.5" stroke="#858585" stroke-width="1" shape-rendering="crispEdges"/>
<line x1="991.5" y1="512.5" x2="999.5" y2="512.5" stroke="#858585" stroke-width="1" shape-rendering="crispEdges"/>
<line x1="991.5" y1="521.5" x2="999.5" y2="521.5" stroke="#858585" stroke-width="1" shape-rendering="crispEdges"/>
<line x1="991.5" y1="529.5" x2="999.5" y2="529.5" stroke="#858585" stroke-width="1" shape-rendering="crispEdges"/>
<line x1="991.5" y1="538.5" x2="999.5" y2="538.5" stroke="#858585" stroke-width="1" shape-rendering="crispEdges"/>
<line x1="991.5" y1="546.5" x2="999.5" y2="546.5" stroke="#858585" stroke-width="1" shape-rendering="crispEdges"/>
<line x1="991.5" y1="555.5" x2="999.5" y2="555.5" stroke="#858585" stroke-width="1" shape-rendering="crispEdges"/>
<line x1="991.5" y1="564.5" x2="999.5" y2="564.5" stroke="#858585" stroke-width="1" shape-rendering="crispEdges"/>
<line x1="991.5" y1="572.5" x2="999.5" y2="572.5" stroke="#858585" stroke-width="1" shape-rendering="crispEdges"/>
<line x1="991.5" y1="581.5" x2="999.5" y2="581.5" stroke="#858585" stroke-width="1" shape-rendering="crispEdges"/>
<line x1="991.5" y1="589.5" x2="999.5" y2="589.5" stroke="#858585" stroke-width="1" shape-rendering="crispEdges"/>
<line x1="991.5" y1="598.5" x2="999.5" y2="598.5" stroke="#858585" stroke-width="1" shape-rendering="crispEdges"/>
<line x1="991.5" y1="607.5" x2="999.5" y2="607.5" stroke="#858585" stroke-width="1" shape-rendering="crispEdges"/>
<line x1="991.5" y1="615.5" x2="999.5" y2="615.5" stroke="#858585" stroke-width="1" shape-rendering="crispEdges"/>
<line x1="991.5" y1="624.5" x2="999.5" y2="624.5" stroke="#858585" stroke-width="1" shape-rendering="crispEdges"/>
<line x1="991.5" y1="632.5" x2="999.5" y2="632.5" stroke="#858585" stroke-width="1" shape-rendering="crispEdges"/>
<line x1="991.5" y1="641.5" x2="999.5" y2="641.5" stroke="#858585" stroke-width="1" shape-rendering="crispEdges"/>
<line x1="991.5" y1="650.5" x2="999.5" y2="650.5" stroke="#858585" stroke-width="1" shape-rendering="crispEdges"/>
<line x1="991.5" y1="658.5" x2="999.5" y2="658.5" stroke="#858585" stroke-width="1" shape-rendering="crispEdges"/>
<line x1="991.5" y1="667.5" x2="999.5" y2="667.5" stroke="#858585" stroke-width="1" shape-rendering="crispEdges"/>
<line x1="991.5" y1="675.5" x2="999.5" y2="675.5" stroke="#858585" stroke-width="1" shape-rendering="crispEdges"/>
<line x1="991.5" y1="684.5" x2="999.5" y2="684.5" stroke="#858585" stroke-width="1" shape-rendering="crispEdges"/>
<line x1="991.5" y1="693.5" x2="999.5" y2="693.5" stroke="#858585" stroke-width="1" shape-rendering="crispEdges"/>
<line x1="991.5" y1="701.5" x2="999.5" y2="701.5" stroke="#858585" stroke-width="1" shape-rendering="crispEdges"/>
<line x1="991.5" y1="710.5" x2="999.5" y2="710.5" stroke="#858585" stroke-width="1" shape-rendering="crispEdges"/>
<line x1="991.5" y1="718.5" x2="999.5" y2="718.5" stroke="#858585" stroke-width="1" shape-rendering="crispEdges"/>
<line x1="991.5" y1="727.5" x2="999.5" y2="727.5" stroke="#858585" stroke-width="1" shape-rendering="crispEdges"/>
<line x1="991.5" y1="736.5" x2="999.5" y2="736.5" stroke="#858585" stroke-width="1" shape-rendering="crispEdges"/>
<line x1="991.5" y1="744.5" x2="999.5" y2="744.5" stroke="#858585" stroke-width="1" shape-rendering="crispEdges"/>
<line x1="991.5" y1="753.5" x2="999.5" y2="753.5" stroke="#858585" stroke-width="1" shape-rendering="crispEdges"/>
<line x1="991.5" y1="761.5" x2="999.5" y2="761.5" stroke="#858585" stroke-width="1" shape-rendering="crispEdges"/>
<rect x="88.5" y="426.5" width="1813" height="344.0" fill="none" stroke="#707070" stroke-width="1" shape-rendering="crispEdges"/>
<line x1="89.5" y1="211.5" x2="1900.5" y2="211.5" stroke="#c4c4ee" stroke-width="1.2" stroke-dasharray="4 3"/>
<path d="M91,115.5 L329.5,115.5 L329.5,258 L334.5,238 L334.5,102 L334.5,108.0 L335.5,116.7 L336.5,124.7 L337.5,132.0 L338.5,138.7 L339.5,144.8 L340.5,150.5 L341.5,155.6 L342.5,160.4 L343.5,164.7 L344.5,168.7 L345.5,172.3 L346.5,175.7 L347.5,178.8 L348.5,181.6 L349.5,184.1 L350.5,186.5 L351.5,188.7 L352.5,190.7 L353.5,192.5 L354.5,194.1 L355.5,195.7 L356.5,197.1 L357.5,198.4 L358.5,199.5 L359.5,200.6 L360.5,201.6 L361.5,202.5 L362.5,203.3 L363.5,204.1 L364.5,204.8 L365.5,205.4 L366.5,206.0 L367.5,206.6 L368.5,207.1 L369.5,207.5 L370.5,207.9 L371.5,208.3 L372.5,208.7 L373.5,209.0 L374.5,209.3 L375.5,209.5 L376.5,209.8 L377.5,210.0 L378.5,210.2 L379.5,210.4 L380.5,210.6 L381.5,210.7 L382.5,210.9 L383.5,211.0 L384.5,211.1 L385.5,211.3 L386.5,211.4 L387.5,211.5 L388.5,211.5 L389.5,211.6 L390.5,211.7 L391.5,211.8 L392.5,211.8 L393.5,211.9 L536.5,213.5 L536.5,187.5 L544.5,204 L544.5,227.5 L544.5,227.5 L545.5,225.9 L546.5,224.4 L547.5,223.1 L548.5,222.0 L549.5,221.0 L550.5,220.1 L551.5,219.3 L552.5,218.7 L553.5,218.0 L554.5,217.5 L555.5,217.0 L556.5,216.6 L557.5,216.3 L558.5,215.9 L559.5,215.6 L560.5,215.4 L561.5,215.2 L562.5,215.0 L563.5,214.8 L564.5,214.6 L565.5,214.5 L566.5,214.4 L567.5,214.3 L568.5,214.2 L569.5,214.1 L570.5,214.0 L571.5,214.0 L572.5,213.9 L573.5,213.9 L574.5,213.8 L575.5,213.8 L576.5,213.8 L577.5,213.7 L578.5,213.7 L579.5,213.7 L580.5,213.7 L581.5,213.6 L582.5,213.6 L583.5,213.6 L1901,213.5" fill="none" stroke="#0a760a" stroke-width="1.4"/>
<line x1="91" y1="115.5" x2="329.5" y2="115.5" stroke="#0a780a" stroke-width="2.6" />
<line x1="387" y1="213.5" x2="536" y2="213.5" stroke="#0a720a" stroke-width="2.4" />
<line x1="570" y1="213.5" x2="1901" y2="213.5" stroke="#0a720a" stroke-width="2.4" />
<rect x="991.75" y="77" width="1.5" height="78" fill="#30c8f0" stroke="none" stroke-width="1" />
<rect x="991.75" y="155" width="1.5" height="90" fill="#a8d0f0" stroke="none" stroke-width="1" />
<rect x="991.75" y="244" width="1.5" height="7" fill="#707070" stroke="none" stroke-width="1" />
<rect x="995.85" y="77" width="1.5" height="78" fill="#30c8f0" stroke="none" stroke-width="1" />
<rect x="995.85" y="155" width="1.5" height="90" fill="#a8d0f0" stroke="none" stroke-width="1" />
<rect x="995.85" y="244" width="1.5" height="7" fill="#707070" stroke="none" stroke-width="1" />
<rect x="999.25" y="77" width="1.5" height="78" fill="#30c8f0" stroke="none" stroke-width="1" />
<rect x="999.25" y="155" width="1.5" height="90" fill="#a8d0f0" stroke="none" stroke-width="1" />
<rect x="999.25" y="244" width="1.5" height="7" fill="#707070" stroke="none" stroke-width="1" />
<rect x="1002.05" y="77" width="1.5" height="78" fill="#30c8f0" stroke="none" stroke-width="1" />
<rect x="1002.05" y="155" width="1.5" height="90" fill="#a8d0f0" stroke="none" stroke-width="1" />
<rect x="1002.05" y="244" width="1.5" height="7" fill="#707070" stroke="none" stroke-width="1" />
<rect x="1008.85" y="77" width="1.5" height="78" fill="#30c8f0" stroke="none" stroke-width="1" />
<rect x="1008.85" y="155" width="1.5" height="90" fill="#a8d0f0" stroke="none" stroke-width="1" />
<rect x="1008.85" y="244" width="1.5" height="7" fill="#707070" stroke="none" stroke-width="1" />
<rect x="992" y="156" width="18" height="95" fill="#808080" stroke="none" stroke-width="1" />
<rect x="995" y="190" width="13" height="49" fill="#7fbf7f" stroke="none" stroke-width="1" />
<rect x="991.75" y="156" width="1.5" height="88" fill="#a8d0f0" stroke="none" stroke-width="1" />
<rect x="995.85" y="156" width="1.5" height="88" fill="#a8d0f0" stroke="none" stroke-width="1" />
<rect x="999.25" y="156" width="1.5" height="88" fill="#a8d0f0" stroke="none" stroke-width="1" />
<rect x="1002.05" y="156" width="1.5" height="88" fill="#a8d0f0" stroke="none" stroke-width="1" />
<rect x="1008.85" y="156" width="1.5" height="88" fill="#a8d0f0" stroke="none" stroke-width="1" />
<rect x="1021.9" y="77" width="1.2" height="78" fill="#355a4a" stroke="none" stroke-width="1" />
<rect x="1021.9" y="155" width="1.2" height="89" fill="#98b8a8" stroke="none" stroke-width="1" />
<rect x="1021.9" y="244" width="1.2" height="7" fill="#6a6a6a" stroke="none" stroke-width="1" />
<rect x="1034.8000000000002" y="77" width="1.2" height="78" fill="#355a4a" stroke="none" stroke-width="1" />
<rect x="1034.8000000000002" y="155" width="1.2" height="89" fill="#98b8a8" stroke="none" stroke-width="1" />
<rect x="1034.8000000000002" y="244" width="1.2" height="7" fill="#6a6a6a" stroke="none" stroke-width="1" />
<rect x="1047.9" y="77" width="2" height="78" fill="#22ccf2" stroke="none" stroke-width="1" />
<rect x="1047.9" y="155" width="2" height="89" fill="#a8cdf0" stroke="none" stroke-width="1" />
<rect x="1047.9" y="244" width="2" height="7" fill="#707070" stroke="none" stroke-width="1" />
<rect x="1061.9" y="77" width="1.2" height="78" fill="#355a4a" stroke="none" stroke-width="1" />
<rect x="1061.9" y="155" width="1.2" height="89" fill="#98b8a8" stroke="none" stroke-width="1" />
<rect x="1061.9" y="244" width="1.2" height="7" fill="#6a6a6a" stroke="none" stroke-width="1" />
<rect x="1074.8" y="77" width="2" height="78" fill="#22ccf2" stroke="none" stroke-width="1" />
<rect x="1074.8" y="155" width="2" height="89" fill="#a8cdf0" stroke="none" stroke-width="1" />
<rect x="1074.8" y="244" width="2" height="7" fill="#707070" stroke="none" stroke-width="1" />
<rect x="1088.8000000000002" y="77" width="1.2" height="78" fill="#355a4a" stroke="none" stroke-width="1" />
<rect x="1088.8000000000002" y="155" width="1.2" height="89" fill="#98b8a8" stroke="none" stroke-width="1" />
<rect x="1088.8000000000002" y="244" width="1.2" height="7" fill="#6a6a6a" stroke="none" stroke-width="1" />
<rect x="1101.9" y="77" width="2" height="78" fill="#22ccf2" stroke="none" stroke-width="1" />
<rect x="1101.9" y="155" width="2" height="89" fill="#a8cdf0" stroke="none" stroke-width="1" />
<rect x="1101.9" y="244" width="2" height="7" fill="#707070" stroke="none" stroke-width="1" />
<rect x="1115.9" y="77" width="1.2" height="78" fill="#355a4a" stroke="none" stroke-width="1" />
<rect x="1115.9" y="155" width="1.2" height="89" fill="#98b8a8" stroke="none" stroke-width="1" />
<rect x="1115.9" y="244" width="1.2" height="7" fill="#6a6a6a" stroke="none" stroke-width="1" />
<rect x="1128.25" y="77" width="1.5" height="78" fill="#a8d8f0" stroke="none" stroke-width="1" />
<rect x="1128.25" y="155" width="1.5" height="89" fill="#b0d0f0" stroke="none" stroke-width="1" />
<rect x="1128.25" y="244" width="1.5" height="7" fill="#707070" stroke="none" stroke-width="1" />
<rect x="1140.75" y="77" width="1.5" height="78" fill="#a8d8f0" stroke="none" stroke-width="1" />
<rect x="1140.75" y="155" width="1.5" height="89" fill="#b0d0f0" stroke="none" stroke-width="1" />
<rect x="1140.75" y="244" width="1.5" height="7" fill="#707070" stroke="none" stroke-width="1" />
<rect x="1154.8" y="77" width="2" height="78" fill="#22ccf2" stroke="none" stroke-width="1" />
<rect x="1154.8" y="155" width="2" height="89" fill="#a8cdf0" stroke="none" stroke-width="1" />
<rect x="1154.8" y="244" width="2" height="7" fill="#707070" stroke="none" stroke-width="1" />
<rect x="1168.0" y="77" width="1.5" height="78" fill="#a8d8f0" stroke="none" stroke-width="1" />
<rect x="1168.0" y="155" width="1.5" height="89" fill="#b0d0f0" stroke="none" stroke-width="1" />
<rect x="1168.0" y="244" width="1.5" height="7" fill="#707070" stroke="none" stroke-width="1" />
<rect x="1181.9" y="77" width="1.2" height="78" fill="#355a4a" stroke="none" stroke-width="1" />
<rect x="1181.9" y="155" width="1.2" height="89" fill="#98b8a8" stroke="none" stroke-width="1" />
<rect x="1181.9" y="244" width="1.2" height="7" fill="#6a6a6a" stroke="none" stroke-width="1" />
<rect x="1194" y="77" width="2" height="78" fill="#22ccf2" stroke="none" stroke-width="1" />
<rect x="1194" y="155" width="2" height="89" fill="#a8cdf0" stroke="none" stroke-width="1" />
<rect x="1194" y="244" width="2" height="7" fill="#707070" stroke="none" stroke-width="1" />
<rect x="1206.9" y="77" width="1.2" height="78" fill="#355a4a" stroke="none" stroke-width="1" />
<rect x="1206.9" y="155" width="1.2" height="89" fill="#98b8a8" stroke="none" stroke-width="1" />
<rect x="1206.9" y="244" width="1.2" height="7" fill="#6a6a6a" stroke="none" stroke-width="1" />
<rect x="1218.6" y="77" width="2" height="78" fill="#22ccf2" stroke="none" stroke-width="1" />
<rect x="1218.6" y="155" width="2" height="89" fill="#a8cdf0" stroke="none" stroke-width="1" />
<rect x="1218.6" y="244" width="2" height="7" fill="#707070" stroke="none" stroke-width="1" />
<rect x="1231.9" y="77" width="2" height="78" fill="#22ccf2" stroke="none" stroke-width="1" />
<rect x="1231.9" y="155" width="2" height="89" fill="#a8cdf0" stroke="none" stroke-width="1" />
<rect x="1231.9" y="244" width="2" height="7" fill="#707070" stroke="none" stroke-width="1" />
<rect x="1244.8000000000002" y="77" width="1.2" height="78" fill="#355a4a" stroke="none" stroke-width="1" />
<rect x="1244.8000000000002" y="155" width="1.2" height="89" fill="#98b8a8" stroke="none" stroke-width="1" />
<rect x="1244.8000000000002" y="244" width="1.2" height="7" fill="#6a6a6a" stroke="none" stroke-width="1" />
<rect x="1257.9" y="77" width="2" height="78" fill="#22ccf2" stroke="none" stroke-width="1" />
<rect x="1257.9" y="155" width="2" height="89" fill="#a8cdf0" stroke="none" stroke-width="1" />
<rect x="1257.9" y="244" width="2" height="7" fill="#707070" stroke="none" stroke-width="1" />
<rect x="1271.9" y="77" width="1.2" height="78" fill="#355a4a" stroke="none" stroke-width="1" />
<rect x="1271.9" y="155" width="1.2" height="89" fill="#98b8a8" stroke="none" stroke-width="1" />
<rect x="1271.9" y="244" width="1.2" height="7" fill="#6a6a6a" stroke="none" stroke-width="1" />
<rect x="1284.8" y="77" width="2" height="78" fill="#22ccf2" stroke="none" stroke-width="1" />
<rect x="1284.8" y="155" width="2" height="89" fill="#a8cdf0" stroke="none" stroke-width="1" />
<rect x="1284.8" y="244" width="2" height="7" fill="#707070" stroke="none" stroke-width="1" />
<rect x="1298.7" y="77" width="1.2" height="78" fill="#355a4a" stroke="none" stroke-width="1" />
<rect x="1298.7" y="155" width="1.2" height="89" fill="#98b8a8" stroke="none" stroke-width="1" />
<rect x="1298.7" y="244" width="1.2" height="7" fill="#6a6a6a" stroke="none" stroke-width="1" />
<rect x="1311.9" y="77" width="2" height="78" fill="#22ccf2" stroke="none" stroke-width="1" />
<rect x="1311.9" y="155" width="2" height="89" fill="#a8cdf0" stroke="none" stroke-width="1" />
<rect x="1311.9" y="244" width="2" height="7" fill="#707070" stroke="none" stroke-width="1" />
<rect x="1326.0" y="77" width="1.2" height="78" fill="#355a4a" stroke="none" stroke-width="1" />
<rect x="1326.0" y="155" width="1.2" height="89" fill="#98b8a8" stroke="none" stroke-width="1" />
<rect x="1326.0" y="244" width="1.2" height="7" fill="#6a6a6a" stroke="none" stroke-width="1" />
<rect x="1338" y="77" width="2" height="78" fill="#22ccf2" stroke="none" stroke-width="1" />
<rect x="1338" y="155" width="2" height="89" fill="#a8cdf0" stroke="none" stroke-width="1" />
<rect x="1338" y="244" width="2" height="7" fill="#707070" stroke="none" stroke-width="1" />
<rect x="1351.0" y="77" width="1.2" height="78" fill="#355a4a" stroke="none" stroke-width="1" />
<rect x="1351.0" y="155" width="1.2" height="89" fill="#98b8a8" stroke="none" stroke-width="1" />
<rect x="1351.0" y="244" width="1.2" height="7" fill="#6a6a6a" stroke="none" stroke-width="1" />
<rect x="1363" y="77" width="2" height="78" fill="#22ccf2" stroke="none" stroke-width="1" />
<rect x="1363" y="155" width="2" height="89" fill="#a8cdf0" stroke="none" stroke-width="1" />
<rect x="1363" y="244" width="2" height="7" fill="#707070" stroke="none" stroke-width="1" />
<rect x="1375.9" y="77" width="2" height="78" fill="#22ccf2" stroke="none" stroke-width="1" />
<rect x="1375.9" y="155" width="2" height="89" fill="#a8cdf0" stroke="none" stroke-width="1" />
<rect x="1375.9" y="244" width="2" height="7" fill="#707070" stroke="none" stroke-width="1" />
<rect x="1388.8000000000002" y="77" width="1.2" height="78" fill="#355a4a" stroke="none" stroke-width="1" />
<rect x="1388.8000000000002" y="155" width="1.2" height="89" fill="#98b8a8" stroke="none" stroke-width="1" />
<rect x="1388.8000000000002" y="244" width="1.2" height="7" fill="#6a6a6a" stroke="none" stroke-width="1" />
<rect x="1401.8" y="77" width="2" height="78" fill="#22ccf2" stroke="none" stroke-width="1" />
<rect x="1401.8" y="155" width="2" height="89" fill="#a8cdf0" stroke="none" stroke-width="1" />
<rect x="1401.8" y="244" width="2" height="7" fill="#707070" stroke="none" stroke-width="1" />
<rect x="1414.7" y="77" width="1.2" height="78" fill="#355a4a" stroke="none" stroke-width="1" />
<rect x="1414.7" y="155" width="1.2" height="89" fill="#98b8a8" stroke="none" stroke-width="1" />
<rect x="1414.7" y="244" width="1.2" height="7" fill="#6a6a6a" stroke="none" stroke-width="1" />
<rect x="1426.5" y="77" width="2" height="78" fill="#22ccf2" stroke="none" stroke-width="1" />
<rect x="1426.5" y="155" width="2" height="89" fill="#a8cdf0" stroke="none" stroke-width="1" />
<rect x="1426.5" y="244" width="2" height="7" fill="#707070" stroke="none" stroke-width="1" />
<rect x="1670.75" y="77" width="1.5" height="174" fill="#30c8f0" stroke="none" stroke-width="1" />
<rect x="1672.75" y="77" width="1.5" height="174" fill="#30c8f0" stroke="none" stroke-width="1" />
<rect x="1670.5" y="155" width="4" height="96" fill="#909090" stroke="none" stroke-width="1" />
<rect x="1671" y="190" width="2" height="50" fill="#8fcf8f" stroke="none" stroke-width="1" />
<rect x="1750" y="77" width="2" height="174" fill="#30c8f0" stroke="none" stroke-width="1" />
<rect x="1749.5" y="155" width="3" height="96" fill="#909090" stroke="none" stroke-width="1" />
<rect x="1797" y="155" width="12" height="96" fill="#a8d0f0" stroke="none" stroke-width="1" />
<rect x="1797" y="244" width="12" height="7" fill="#808080" stroke="none" stroke-width="1" />
<rect x="1797" y="77" width="12" height="78" fill="#30c8f0" stroke="none" stroke-width="1" />
<rect x="1799" y="77" width="1" height="78" fill="#0a3040" stroke="none" stroke-width="1" />
<rect x="1803" y="77" width="1" height="78" fill="#0a3040" stroke="none" stroke-width="1" />
<rect x="1806" y="77" width="1" height="78" fill="#0a3040" stroke="none" stroke-width="1" />
<rect x="1799" y="190" width="1.5" height="50" fill="#8fcf8f" stroke="none" stroke-width="1" />
<rect x="1806" y="190" width="1.5" height="50" fill="#8fcf8f" stroke="none" stroke-width="1" />
<rect x="1825" y="77" width="1.5" height="174" fill="#7ab8e0" stroke="none" stroke-width="1" />
<text transform="matrix(0.43,-1.12,1.15,0.36,1001,157)" font-size="15" fill="none" stroke="#000" stroke-width="1.3">Request</text>
<text transform="matrix(0.43,-1.12,1.15,0.36,1002,157)" font-size="15" fill="none" stroke="#000" stroke-width="1.3">Request</text>
<text transform="matrix(0.43,-1.12,1.15,0.36,1003,157)" font-size="15" fill="none" stroke="#000" stroke-width="1.3">Request</text>
<text transform="matrix(0.43,-1.12,1.15,0.36,1004,157)" font-size="15" fill="none" stroke="#000" stroke-width="1.3">Request</text>
<text transform="matrix(0.43,-1.12,1.15,0.36,1005,157)" font-size="15" fill="none" stroke="#000" stroke-width="1.3">Request</text>
<text transform="matrix(0.43,-1.12,1.15,0.36,1006,157)" font-size="15" fill="none" stroke="#000" stroke-width="1.3">Request</text>
<text transform="matrix(0.43,-1.12,1.15,0.36,1007,157)" font-size="15" fill="none" stroke="#000" stroke-width="1.3">Request</text>
<text transform="matrix(0.43,-1.12,1.15,0.36,1008,157)" font-size="15" fill="none" stroke="#000" stroke-width="1.3">Request</text>
<text transform="matrix(0.43,-1.12,1.15,0.36,1009,157)" font-size="15" fill="none" stroke="#000" stroke-width="1.3">Request</text>
<text transform="matrix(0.43,-1.12,1.15,0.36,1010,157)" font-size="15" fill="none" stroke="#000" stroke-width="1.3">Request</text>
<text transform="matrix(0.43,-1.12,1.15,0.36,1011,157)" font-size="15" fill="none" stroke="#000" stroke-width="1.3">Request</text>
<text transform="matrix(0.43,-1.12,1.15,0.36,1012,157)" font-size="15" fill="none" stroke="#000" stroke-width="1.3">Request</text>
<text transform="matrix(0.43,-1.12,1.15,0.36,1013,157)" font-size="15" fill="none" stroke="#000" stroke-width="1.3">Request</text>
<text transform="matrix(0.43,-1.12,1.15,0.36,1014,157)" font-size="15" fill="none" stroke="#000" stroke-width="1.3">Request</text>
<text transform="matrix(0.43,-1.12,1.15,0.36,1015,157)" font-size="15" fill="none" stroke="#000" stroke-width="1.3">Request</text>
<text transform="matrix(0.43,-1.12,1.15,0.36,1016,157)" font-size="15" fill="none" stroke="#000" stroke-width="1.3">Request</text>
<text transform="matrix(0.43,-1.12,1.15,0.36,1017,157)" font-size="15" fill="none" stroke="#000" stroke-width="1.3">Request</text>
<text transform="matrix(0.43,-1.12,1.15,0.36,1018,157)" font-size="15" fill="none" stroke="#000" stroke-width="1.3">Request</text>
<text transform="matrix(0.43,-1.12,1.15,0.36,1019,157)" font-size="15" fill="none" stroke="#000" stroke-width="1.3">Request</text>
<text transform="matrix(0.43,-1.12,1.15,0.36,1020,157)" font-size="15" fill="none" stroke="#000" stroke-width="1.3">Request</text>
<text transform="matrix(0.43,-1.12,1.15,0.36,1021,157)" font-size="15" fill="none" stroke="#000" stroke-width="1.3">Request</text>
<text transform="matrix(0.43,-1.12,1.15,0.36,1022,157)" font-size="15" fill="none" stroke="#000" stroke-width="1.3">Request</text>
<text transform="matrix(0.43,-1.12,1.15,0.36,1023,157)" font-size="15" fill="none" stroke="#000" stroke-width="1.3">Request</text>
<text transform="matrix(0.43,-1.12,1.15,0.36,1024,157)" font-size="15" fill="none" stroke="#000" stroke-width="1.3">Request</text>
<text transform="matrix(0.43,-1.12,1.15,0.36,1025,157)" font-size="15" fill="none" stroke="#000" stroke-width="1.3">Request</text>
<text transform="matrix(0.43,-1.12,1.15,0.36,1026,157)" font-size="15" fill="none" stroke="#000" stroke-width="1.3">Request</text>
<text transform="matrix(0.43,-1.12,1.15,0.36,1001,157)" font-size="15" fill="#fff">Request</text>
<text transform="matrix(0.43,-1.12,1.15,0.36,1002,157)" font-size="15" fill="#fff">Request</text>
<text transform="matrix(0.43,-1.12,1.15,0.36,1003,157)" font-size="15" fill="#fff">Request</text>
<text transform="matrix(0.43,-1.12,1.15,0.36,1004,157)" font-size="15" fill="#fff">Request</text>
<text transform="matrix(0.43,-1.12,1.15,0.36,1005,157)" font-size="15" fill="#fff">Request</text>
<text transform="matrix(0.43,-1.12,1.15,0.36,1006,157)" font-size="15" fill="#fff">Request</text>
<text transform="matrix(0.43,-1.12,1.15,0.36,1007,157)" font-size="15" fill="#fff">Request</text>
<text transform="matrix(0.43,-1.12,1.15,0.36,1008,157)" font-size="15" fill="#fff">Request</text>
<text transform="matrix(0.43,-1.12,1.15,0.36,1009,157)" font-size="15" fill="#fff">Request</text>
<text transform="matrix(0.43,-1.12,1.15,0.36,1010,157)" font-size="15" fill="#fff">Request</text>
<text transform="matrix(0.43,-1.12,1.15,0.36,1011,157)" font-size="15" fill="#fff">Request</text>
<text transform="matrix(0.43,-1.12,1.15,0.36,1012,157)" font-size="15" fill="#fff">Request</text>
<text transform="matrix(0.43,-1.12,1.15,0.36,1013,157)" font-size="15" fill="#fff">Request</text>
<text transform="matrix(0.43,-1.12,1.15,0.36,1014,157)" font-size="15" fill="#fff">Request</text>
<text transform="matrix(0.43,-1.12,1.15,0.36,1015,157)" font-size="15" fill="#fff">Request</text>
<text transform="matrix(0.43,-1.12,1.15,0.36,1016,157)" font-size="15" fill="#fff">Request</text>
<text transform="matrix(0.43,-1.12,1.15,0.36,1017,157)" font-size="15" fill="#fff">Request</text>
<text transform="matrix(0.43,-1.12,1.15,0.36,1018,157)" font-size="15" fill="#fff">Request</text>
<text transform="matrix(0.43,-1.12,1.15,0.36,1019,157)" font-size="15" fill="#fff">Request</text>
<text transform="matrix(0.43,-1.12,1.15,0.36,1020,157)" font-size="15" fill="#fff">Request</text>
<text transform="matrix(0.43,-1.12,1.15,0.36,1021,157)" font-size="15" fill="#fff">Request</text>
<text transform="matrix(0.43,-1.12,1.15,0.36,1022,157)" font-size="15" fill="#fff">Request</text>
<text transform="matrix(0.43,-1.12,1.15,0.36,1023,157)" font-size="15" fill="#fff">Request</text>
<text transform="matrix(0.43,-1.12,1.15,0.36,1024,157)" font-size="15" fill="#fff">Request</text>
<text transform="matrix(0.43,-1.12,1.15,0.36,1025,157)" font-size="15" fill="#fff">Request</text>
<text transform="matrix(0.43,-1.12,1.15,0.36,1026,157)" font-size="15" fill="#fff">Request</text>
<text transform="matrix(0.43,-1.12,1.15,0.36,1026.0,157)" font-size="15" fill="#fff" stroke="#000" stroke-width="2.2" paint-order="stroke">Reply</text>
<text transform="matrix(0.43,-1.12,1.15,0.36,1026.0,157)" font-size="15" fill="#fff" stroke="#fff" stroke-width="0.5">Reply</text>
<text transform="matrix(0.43,-1.12,1.15,0.36,1026.0,157)" font-size="15" fill="#fff" stroke="#000" stroke-width="2.2" paint-order="stroke">Request</text>
<text transform="matrix(0.43,-1.12,1.15,0.36,1026.0,157)" font-size="15" fill="#fff" stroke="#fff" stroke-width="0.5">Request</text>
<text transform="matrix(0.43,-1.12,1.15,0.36,1038.84,157)" font-size="15" fill="#fff" stroke="#000" stroke-width="2.2" paint-order="stroke">Reply</text>
<text transform="matrix(0.43,-1.12,1.15,0.36,1038.84,157)" font-size="15" fill="#fff" stroke="#fff" stroke-width="0.5">Reply</text>
<text transform="matrix(0.43,-1.12,1.15,0.36,1038.84,157)" font-size="15" fill="#fff" stroke="#000" stroke-width="2.2" paint-order="stroke">Request</text>
<text transform="matrix(0.43,-1.12,1.15,0.36,1038.84,157)" font-size="15" fill="#fff" stroke="#fff" stroke-width="0.5">Request</text>
<text transform="matrix(0.43,-1.12,1.15,0.36,1051.68,157)" font-size="15" fill="#fff" stroke="#000" stroke-width="2.2" paint-order="stroke">Reply</text>
<text transform="matrix(0.43,-1.12,1.15,0.36,1051.68,157)" font-size="15" fill="#fff" stroke="#fff" stroke-width="0.5">Reply</text>
<text transform="matrix(0.43,-1.12,1.15,0.36,1051.68,157)" font-size="15" fill="#fff" stroke="#000" stroke-width="2.2" paint-order="stroke">Request</text>
<text transform="matrix(0.43,-1.12,1.15,0.36,1051.68,157)" font-size="15" fill="#fff" stroke="#fff" stroke-width="0.5">Request</text>
<text transform="matrix(0.43,-1.12,1.15,0.36,1064.52,157)" font-size="15" fill="#fff" stroke="#000" stroke-width="2.2" paint-order="stroke">Reply</text>
<text transform="matrix(0.43,-1.12,1.15,0.36,1064.52,157)" font-size="15" fill="#fff" stroke="#fff" stroke-width="0.5">Reply</text>
<text transform="matrix(0.43,-1.12,1.15,0.36,1064.52,157)" font-size="15" fill="#fff" stroke="#000" stroke-width="2.2" paint-order="stroke">Request</text>
<text transform="matrix(0.43,-1.12,1.15,0.36,1064.52,157)" font-size="15" fill="#fff" stroke="#fff" stroke-width="0.5">Request</text>
<text transform="matrix(0.43,-1.12,1.15,0.36,1077.36,157)" font-size="15" fill="#fff" stroke="#000" stroke-width="2.2" paint-order="stroke">Reply</text>
<text transform="matrix(0.43,-1.12,1.15,0.36,1077.36,157)" font-size="15" fill="#fff" stroke="#fff" stroke-width="0.5">Reply</text>
<text transform="matrix(0.43,-1.12,1.15,0.36,1077.36,157)" font-size="15" fill="#fff" stroke="#000" stroke-width="2.2" paint-order="stroke">Request</text>
<text transform="matrix(0.43,-1.12,1.15,0.36,1077.36,157)" font-size="15" fill="#fff" stroke="#fff" stroke-width="0.5">Request</text>
<text transform="matrix(0.43,-1.12,1.15,0.36,1090.2,157)" font-size="15" fill="#fff" stroke="#000" stroke-width="2.2" paint-order="stroke">Reply</text>
<text transform="matrix(0.43,-1.12,1.15,0.36,1090.2,157)" font-size="15" fill="#fff" stroke="#fff" stroke-width="0.5">Reply</text>
<text transform="matrix(0.43,-1.12,1.15,0.36,1090.2,157)" font-size="15" fill="#fff" stroke="#000" stroke-width="2.2" paint-order="stroke">Request</text>
<text transform="matrix(0.43,-1.12,1.15,0.36,1090.2,157)" font-size="15" fill="#fff" stroke="#fff" stroke-width="0.5">Request</text>
<text transform="matrix(0.43,-1.12,1.15,0.36,1103.04,157)" font-size="15" fill="#fff" stroke="#000" stroke-width="2.2" paint-order="stroke">Reply</text>
<text transform="matrix(0.43,-1.12,1.15,0.36,1103.04,157)" font-size="15" fill="#fff" stroke="#fff" stroke-width="0.5">Reply</text>
<text transform="matrix(0.43,-1.12,1.15,0.36,1103.04,157)" font-size="15" fill="#fff" stroke="#000" stroke-width="2.2" paint-order="stroke">Request</text>
<text transform="matrix(0.43,-1.12,1.15,0.36,1103.04,157)" font-size="15" fill="#fff" stroke="#fff" stroke-width="0.5">Request</text>
<text transform="matrix(0.43,-1.12,1.15,0.36,1115.88,157)" font-size="15" fill="#fff" stroke="#000" stroke-width="2.2" paint-order="stroke">Reply</text>
<text transform="matrix(0.43,-1.12,1.15,0.36,1115.88,157)" font-size="15" fill="#fff" stroke="#fff" stroke-width="0.5">Reply</text>
<text transform="matrix(0.43,-1.12,1.15,0.36,1115.88,157)" font-size="15" fill="#fff" stroke="#000" stroke-width="2.2" paint-order="stroke">Request</text>
<text transform="matrix(0.43,-1.12,1.15,0.36,1115.88,157)" font-size="15" fill="#fff" stroke="#fff" stroke-width="0.5">Request</text>
<text transform="matrix(0.43,-1.12,1.15,0.36,1128.72,157)" font-size="15" fill="#fff" stroke="#000" stroke-width="2.2" paint-order="stroke">Reply</text>
<text transform="matrix(0.43,-1.12,1.15,0.36,1128.72,157)" font-size="15" fill="#fff" stroke="#fff" stroke-width="0.5">Reply</text>
<text transform="matrix(0.43,-1.12,1.15,0.36,1128.72,157)" font-size="15" fill="#fff" stroke="#000" stroke-width="2.2" paint-order="stroke">Request</text>
<text transform="matrix(0.43,-1.12,1.15,0.36,1128.72,157)" font-size="15" fill="#fff" stroke="#fff" stroke-width="0.5">Request</text>
<text transform="matrix(0.43,-1.12,1.15,0.36,1141.56,157)" font-size="15" fill="#fff" stroke="#000" stroke-width="2.2" paint-order="stroke">Reply</text>
<text transform="matrix(0.43,-1.12,1.15,0.36,1141.56,157)" font-size="15" fill="#fff" stroke="#fff" stroke-width="0.5">Reply</text>
<text transform="matrix(0.43,-1.12,1.15,0.36,1141.56,157)" font-size="15" fill="#fff" stroke="#000" stroke-width="2.2" paint-order="stroke">Request</text>
<text transform="matrix(0.43,-1.12,1.15,0.36,1141.56,157)" font-size="15" fill="#fff" stroke="#fff" stroke-width="0.5">Request</text>
<text transform="matrix(0.43,-1.12,1.15,0.36,1154.4,157)" font-size="15" fill="#fff" stroke="#000" stroke-width="2.2" paint-order="stroke">Reply</text>
<text transform="matrix(0.43,-1.12,1.15,0.36,1154.4,157)" font-size="15" fill="#fff" stroke="#fff" stroke-width="0.5">Reply</text>
<text transform="matrix(0.43,-1.12,1.15,0.36,1154.4,157)" font-size="15" fill="#fff" stroke="#000" stroke-width="2.2" paint-order="stroke">Request</text>
<text transform="matrix(0.43,-1.12,1.15,0.36,1154.4,157)" font-size="15" fill="#fff" stroke="#fff" stroke-width="0.5">Request</text>
<text transform="matrix(0.43,-1.12,1.15,0.36,1167.24,157)" font-size="15" fill="#fff" stroke="#000" stroke-width="2.2" paint-order="stroke">Reply</text>
<text transform="matrix(0.43,-1.12,1.15,0.36,1167.24,157)" font-size="15" fill="#fff" stroke="#fff" stroke-width="0.5">Reply</text>
<text transform="matrix(0.43,-1.12,1.15,0.36,1167.24,157)" font-size="15" fill="#fff" stroke="#000" stroke-width="2.2" paint-order="stroke">Request</text>
<text transform="matrix(0.43,-1.12,1.15,0.36,1167.24,157)" font-size="15" fill="#fff" stroke="#fff" stroke-width="0.5">Request</text>
<text transform="matrix(0.43,-1.12,1.15,0.36,1180.08,157)" font-size="15" fill="#fff" stroke="#000" stroke-width="2.2" paint-order="stroke">Reply</text>
<text transform="matrix(0.43,-1.12,1.15,0.36,1180.08,157)" font-size="15" fill="#fff" stroke="#fff" stroke-width="0.5">Reply</text>
<text transform="matrix(0.43,-1.12,1.15,0.36,1180.08,157)" font-size="15" fill="#fff" stroke="#000" stroke-width="2.2" paint-order="stroke">Request</text>
<text transform="matrix(0.43,-1.12,1.15,0.36,1180.08,157)" font-size="15" fill="#fff" stroke="#fff" stroke-width="0.5">Request</text>
<text transform="matrix(0.43,-1.12,1.15,0.36,1192.92,157)" font-size="15" fill="#fff" stroke="#000" stroke-width="2.2" paint-order="stroke">Reply</text>
<text transform="matrix(0.43,-1.12,1.15,0.36,1192.92,157)" font-size="15" fill="#fff" stroke="#fff" stroke-width="0.5">Reply</text>
<text transform="matrix(0.43,-1.12,1.15,0.36,1192.92,157)" font-size="15" fill="#fff" stroke="#000" stroke-width="2.2" paint-order="stroke">Request</text>
<text transform="matrix(0.43,-1.12,1.15,0.36,1192.92,157)" font-size="15" fill="#fff" stroke="#fff" stroke-width="0.5">Request</text>
<text transform="matrix(0.43,-1.12,1.15,0.36,1205.76,157)" font-size="15" fill="#fff" stroke="#000" stroke-width="2.2" paint-order="stroke">Reply</text>
<text transform="matrix(0.43,-1.12,1.15,0.36,1205.76,157)" font-size="15" fill="#fff" stroke="#fff" stroke-width="0.5">Reply</text>
<text transform="matrix(0.43,-1.12,1.15,0.36,1205.76,157)" font-size="15" fill="#fff" stroke="#000" stroke-width="2.2" paint-order="stroke">Request</text>
<text transform="matrix(0.43,-1.12,1.15,0.36,1205.76,157)" font-size="15" fill="#fff" stroke="#fff" stroke-width="0.5">Request</text>
<text transform="matrix(0.43,-1.12,1.15,0.36,1218.6,157)" font-size="15" fill="#fff" stroke="#000" stroke-width="2.2" paint-order="stroke">Reply</text>
<text transform="matrix(0.43,-1.12,1.15,0.36,1218.6,157)" font-size="15" fill="#fff" stroke="#fff" stroke-width="0.5">Reply</text>
<text transform="matrix(0.43,-1.12,1.15,0.36,1218.6,157)" font-size="15" fill="#fff" stroke="#000" stroke-width="2.2" paint-order="stroke">Request</text>
<text transform="matrix(0.43,-1.12,1.15,0.36,1218.6,157)" font-size="15" fill="#fff" stroke="#fff" stroke-width="0.5">Request</text>
<text transform="matrix(0.43,-1.12,1.15,0.36,1231.44,157)" font-size="15" fill="#fff" stroke="#000" stroke-width="2.2" paint-order="stroke">Reply</text>
<text transform="matrix(0.43,-1.12,1.15,0.36,1231.44,157)" font-size="15" fill="#fff" stroke="#fff" stroke-width="0.5">Reply</text>
<text transform="matrix(0.43,-1.12,1.15,0.36,1231.44,157)" font-size="15" fill="#fff" stroke="#000" stroke-width="2.2" paint-order="stroke">Request</text>
<text transform="matrix(0.43,-1.12,1.15,0.36,1231.44,157)" font-size="15" fill="#fff" stroke="#fff" stroke-width="0.5">Request</text>
<text transform="matrix(0.43,-1.12,1.15,0.36,1244.28,157)" font-size="15" fill="#fff" stroke="#000" stroke-width="2.2" paint-order="stroke">Reply</text>
<text transform="matrix(0.43,-1.12,1.15,0.36,1244.28,157)" font-size="15" fill="#fff" stroke="#fff" stroke-width="0.5">Reply</text>
<text transform="matrix(0.43,-1.12,1.15,0.36,1244.28,157)" font-size="15" fill="#fff" stroke="#000" stroke-width="2.2" paint-order="stroke">Request</text>
<text transform="matrix(0.43,-1.12,1.15,0.36,1244.28,157)" font-size="15" fill="#fff" stroke="#fff" stroke-width="0.5">Request</text>
<text transform="matrix(0.43,-1.12,1.15,0.36,1257.12,157)" font-size="15" fill="#fff" stroke="#000" stroke-width="2.2" paint-order="stroke">Reply</text>
<text transform="matrix(0.43,-1.12,1.15,0.36,1257.12,157)" font-size="15" fill="#fff" stroke="#fff" stroke-width="0.5">Reply</text>
<text transform="matrix(0.43,-1.12,1.15,0.36,1257.12,157)" font-size="15" fill="#fff" stroke="#000" stroke-width="2.2" paint-order="stroke">Request</text>
<text transform="matrix(0.43,-1.12,1.15,0.36,1257.12,157)" font-size="15" fill="#fff" stroke="#fff" stroke-width="0.5">Request</text>
<text transform="matrix(0.43,-1.12,1.15,0.36,1269.96,157)" font-size="15" fill="#fff" stroke="#000" stroke-width="2.2" paint-order="stroke">Reply</text>
<text transform="matrix(0.43,-1.12,1.15,0.36,1269.96,157)" font-size="15" fill="#fff" stroke="#fff" stroke-width="0.5">Reply</text>
<text transform="matrix(0.43,-1.12,1.15,0.36,1269.96,157)" font-size="15" fill="#fff" stroke="#000" stroke-width="2.2" paint-order="stroke">Request</text>
<text transform="matrix(0.43,-1.12,1.15,0.36,1269.96,157)" font-size="15" fill="#fff" stroke="#fff" stroke-width="0.5">Request</text>
<text transform="matrix(0.43,-1.12,1.15,0.36,1282.8,157)" font-size="15" fill="#fff" stroke="#000" stroke-width="2.2" paint-order="stroke">Reply</text>
<text transform="matrix(0.43,-1.12,1.15,0.36,1282.8,157)" font-size="15" fill="#fff" stroke="#fff" stroke-width="0.5">Reply</text>
<text transform="matrix(0.43,-1.12,1.15,0.36,1282.8,157)" font-size="15" fill="#fff" stroke="#000" stroke-width="2.2" paint-order="stroke">Request</text>
<text transform="matrix(0.43,-1.12,1.15,0.36,1282.8,157)" font-size="15" fill="#fff" stroke="#fff" stroke-width="0.5">Request</text>
<text transform="matrix(0.43,-1.12,1.15,0.36,1295.6399999999999,157)" font-size="15" fill="#fff" stroke="#000" stroke-width="2.2" paint-order="stroke">Reply</text>
<text transform="matrix(0.43,-1.12,1.15,0.36,1295.6399999999999,157)" font-size="15" fill="#fff" stroke="#fff" stroke-width="0.5">Reply</text>
<text transform="matrix(0.43,-1.12,1.15,0.36,1295.6399999999999,157)" font-size="15" fill="#fff" stroke="#000" stroke-width="2.2" paint-order="stroke">Request</text>
<text transform="matrix(0.43,-1.12,1.15,0.36,1295.6399999999999,157)" font-size="15" fill="#fff" stroke="#fff" stroke-width="0.5">Request</text>
<text transform="matrix(0.43,-1.12,1.15,0.36,1308.48,157)" font-size="15" fill="#fff" stroke="#000" stroke-width="2.2" paint-order="stroke">Reply</text>
<text transform="matrix(0.43,-1.12,1.15,0.36,1308.48,157)" font-size="15" fill="#fff" stroke="#fff" stroke-width="0.5">Reply</text>
<text transform="matrix(0.43,-1.12,1.15,0.36,1308.48,157)" font-size="15" fill="#fff" stroke="#000" stroke-width="2.2" paint-order="stroke">Request</text>
<text transform="matrix(0.43,-1.12,1.15,0.36,1308.48,157)" font-size="15" fill="#fff" stroke="#fff" stroke-width="0.5">Request</text>
<text transform="matrix(0.43,-1.12,1.15,0.36,1321.32,157)" font-size="15" fill="#fff" stroke="#000" stroke-width="2.2" paint-order="stroke">Reply</text>
<text transform="matrix(0.43,-1.12,1.15,0.36,1321.32,157)" font-size="15" fill="#fff" stroke="#fff" stroke-width="0.5">Reply</text>
<text transform="matrix(0.43,-1.12,1.15,0.36,1321.32,157)" font-size="15" fill="#fff" stroke="#000" stroke-width="2.2" paint-order="stroke">Request</text>
<text transform="matrix(0.43,-1.12,1.15,0.36,1321.32,157)" font-size="15" fill="#fff" stroke="#fff" stroke-width="0.5">Request</text>
<text transform="matrix(0.43,-1.12,1.15,0.36,1334.1599999999999,157)" font-size="15" fill="#fff" stroke="#000" stroke-width="2.2" paint-order="stroke">Reply</text>
<text transform="matrix(0.43,-1.12,1.15,0.36,1334.1599999999999,157)" font-size="15" fill="#fff" stroke="#fff" stroke-width="0.5">Reply</text>
<text transform="matrix(0.43,-1.12,1.15,0.36,1334.1599999999999,157)" font-size="15" fill="#fff" stroke="#000" stroke-width="2.2" paint-order="stroke">Request</text>
<text transform="matrix(0.43,-1.12,1.15,0.36,1334.1599999999999,157)" font-size="15" fill="#fff" stroke="#fff" stroke-width="0.5">Request</text>
<text transform="matrix(0.43,-1.12,1.15,0.36,1347.0,157)" font-size="15" fill="#fff" stroke="#000" stroke-width="2.2" paint-order="stroke">Reply</text>
<text transform="matrix(0.43,-1.12,1.15,0.36,1347.0,157)" font-size="15" fill="#fff" stroke="#fff" stroke-width="0.5">Reply</text>
<text transform="matrix(0.43,-1.12,1.15,0.36,1347.0,157)" font-size="15" fill="#fff" stroke="#000" stroke-width="2.2" paint-order="stroke">Request</text>
<text transform="matrix(0.43,-1.12,1.15,0.36,1347.0,157)" font-size="15" fill="#fff" stroke="#fff" stroke-width="0.5">Request</text>
<text transform="matrix(0.43,-1.12,1.15,0.36,1359.84,157)" font-size="15" fill="#fff" stroke="#000" stroke-width="2.2" paint-order="stroke">Reply</text>
<text transform="matrix(0.43,-1.12,1.15,0.36,1359.84,157)" font-size="15" fill="#fff" stroke="#fff" stroke-width="0.5">Reply</text>
<text transform="matrix(0.43,-1.12,1.15,0.36,1359.84,157)" font-size="15" fill="#fff" stroke="#000" stroke-width="2.2" paint-order="stroke">Request</text>
<text transform="matrix(0.43,-1.12,1.15,0.36,1359.84,157)" font-size="15" fill="#fff" stroke="#fff" stroke-width="0.5">Request</text>
<text transform="matrix(0.43,-1.12,1.15,0.36,1372.68,157)" font-size="15" fill="#fff" stroke="#000" stroke-width="2.2" paint-order="stroke">Reply</text>
<text transform="matrix(0.43,-1.12,1.15,0.36,1372.68,157)" font-size="15" fill="#fff" stroke="#fff" stroke-width="0.5">Reply</text>
<text transform="matrix(0.43,-1.12,1.15,0.36,1372.68,157)" font-size="15" fill="#fff" stroke="#000" stroke-width="2.2" paint-order="stroke">Request</text>
<text transform="matrix(0.43,-1.12,1.15,0.36,1372.68,157)" font-size="15" fill="#fff" stroke="#fff" stroke-width="0.5">Request</text>
<text transform="matrix(0.43,-1.12,1.15,0.36,1385.52,157)" font-size="15" fill="#fff" stroke="#000" stroke-width="2.2" paint-order="stroke">Reply</text>
<text transform="matrix(0.43,-1.12,1.15,0.36,1385.52,157)" font-size="15" fill="#fff" stroke="#fff" stroke-width="0.5">Reply</text>
<text transform="matrix(0.43,-1.12,1.15,0.36,1385.52,157)" font-size="15" fill="#fff" stroke="#000" stroke-width="2.2" paint-order="stroke">Request</text>
<text transform="matrix(0.43,-1.12,1.15,0.36,1385.52,157)" font-size="15" fill="#fff" stroke="#fff" stroke-width="0.5">Request</text>
<text transform="matrix(0.43,-1.12,1.15,0.36,1398.3600000000001,157)" font-size="15" fill="#fff" stroke="#000" stroke-width="2.2" paint-order="stroke">Reply</text>
<text transform="matrix(0.43,-1.12,1.15,0.36,1398.3600000000001,157)" font-size="15" fill="#fff" stroke="#fff" stroke-width="0.5">Reply</text>
<text transform="matrix(0.43,-1.12,1.15,0.36,1398.3600000000001,157)" font-size="15" fill="#fff" stroke="#000" stroke-width="2.2" paint-order="stroke">Request</text>
<text transform="matrix(0.43,-1.12,1.15,0.36,1398.3600000000001,157)" font-size="15" fill="#fff" stroke="#fff" stroke-width="0.5">Request</text>
<text transform="matrix(0.43,-1.12,1.15,0.36,1411.2,157)" font-size="15" fill="#fff" stroke="#000" stroke-width="2.2" paint-order="stroke">Reply</text>
<text transform="matrix(0.43,-1.12,1.15,0.36,1411.2,157)" font-size="15" fill="#fff" stroke="#fff" stroke-width="0.5">Reply</text>
<text transform="matrix(0.43,-1.12,1.15,0.36,1411.2,157)" font-size="15" fill="#fff" stroke="#000" stroke-width="2.2" paint-order="stroke">Request</text>
<text transform="matrix(0.43,-1.12,1.15,0.36,1411.2,157)" font-size="15" fill="#fff" stroke="#fff" stroke-width="0.5">Request</text>
<text transform="matrix(0.43,-1.12,1.15,0.36,1424.04,157)" font-size="15" fill="#fff" stroke="#000" stroke-width="2.2" paint-order="stroke">Reply</text>
<text transform="matrix(0.43,-1.12,1.15,0.36,1424.04,157)" font-size="15" fill="#fff" stroke="#fff" stroke-width="0.5">Reply</text>
<text transform="matrix(0.43,-1.12,1.15,0.36,1424.04,157)" font-size="15" fill="#fff" stroke="#000" stroke-width="2.2" paint-order="stroke">Request</text>
<text transform="matrix(0.43,-1.12,1.15,0.36,1424.04,157)" font-size="15" fill="#fff" stroke="#fff" stroke-width="0.5">Request</text>
<text transform="matrix(0.43,-1.12,1.15,0.36,1436.88,157)" font-size="15" fill="#fff" stroke="#000" stroke-width="2.2" paint-order="stroke">Reply</text>
<text transform="matrix(0.43,-1.12,1.15,0.36,1436.88,157)" font-size="15" fill="#fff" stroke="#fff" stroke-width="0.5">Reply</text>
<text transform="matrix(0.43,-1.12,1.15,0.36,1436.88,157)" font-size="15" fill="#fff" stroke="#000" stroke-width="2.2" paint-order="stroke">Request</text>
<text transform="matrix(0.43,-1.12,1.15,0.36,1436.88,157)" font-size="15" fill="#fff" stroke="#fff" stroke-width="0.5">Request</text>
<text transform="matrix(0.43,-1.12,1.15,0.36,1681.5,157)" font-size="15" fill="none" stroke="#000" stroke-width="1.3">Reply</text>
<text transform="matrix(0.43,-1.12,1.15,0.36,1681.5,157)" font-size="15" fill="none" stroke="#000" stroke-width="1.3">Request</text>
<text transform="matrix(0.43,-1.12,1.15,0.36,1682.3,157)" font-size="15" fill="none" stroke="#000" stroke-width="1.3">Reply</text>
<text transform="matrix(0.43,-1.12,1.15,0.36,1682.3,157)" font-size="15" fill="none" stroke="#000" stroke-width="1.3">Request</text>
<text transform="matrix(0.43,-1.12,1.15,0.36,1683.1,157)" font-size="15" fill="none" stroke="#000" stroke-width="1.3">Reply</text>
<text transform="matrix(0.43,-1.12,1.15,0.36,1683.1,157)" font-size="15" fill="none" stroke="#000" stroke-width="1.3">Request</text>
<text transform="matrix(0.43,-1.12,1.15,0.36,1681.5,157)" font-size="15" fill="#fff">Reply</text>
<text transform="matrix(0.43,-1.12,1.15,0.36,1681.5,157)" font-size="15" fill="#fff">Request</text>
<text transform="matrix(0.43,-1.12,1.15,0.36,1682.3,157)" font-size="15" fill="#fff">Reply</text>
<text transform="matrix(0.43,-1.12,1.15,0.36,1682.3,157)" font-size="15" fill="#fff">Request</text>
<text transform="matrix(0.43,-1.12,1.15,0.36,1683.1,157)" font-size="15" fill="#fff">Reply</text>
<text transform="matrix(0.43,-1.12,1.15,0.36,1683.1,157)" font-size="15" fill="#fff">Request</text>
<text transform="matrix(0.43,-1.12,1.15,0.36,1760.5,157)" font-size="15" fill="none" stroke="#000" stroke-width="1.3">Reply</text>
<text transform="matrix(0.43,-1.12,1.15,0.36,1760.5,157)" font-size="15" fill="none" stroke="#000" stroke-width="1.3">Request</text>
<text transform="matrix(0.43,-1.12,1.15,0.36,1761.3,157)" font-size="15" fill="none" stroke="#000" stroke-width="1.3">Reply</text>
<text transform="matrix(0.43,-1.12,1.15,0.36,1761.3,157)" font-size="15" fill="none" stroke="#000" stroke-width="1.3">Request</text>
<text transform="matrix(0.43,-1.12,1.15,0.36,1762.1,157)" font-size="15" fill="none" stroke="#000" stroke-width="1.3">Reply</text>
<text transform="matrix(0.43,-1.12,1.15,0.36,1762.1,157)" font-size="15" fill="none" stroke="#000" stroke-width="1.3">Request</text>
<text transform="matrix(0.43,-1.12,1.15,0.36,1760.5,157)" font-size="15" fill="#fff">Reply</text>
<text transform="matrix(0.43,-1.12,1.15,0.36,1760.5,157)" font-size="15" fill="#fff">Request</text>
<text transform="matrix(0.43,-1.12,1.15,0.36,1761.3,157)" font-size="15" fill="#fff">Reply</text>
<text transform="matrix(0.43,-1.12,1.15,0.36,1761.3,157)" font-size="15" fill="#fff">Request</text>
<text transform="matrix(0.43,-1.12,1.15,0.36,1762.1,157)" font-size="15" fill="#fff">Reply</text>
<text transform="matrix(0.43,-1.12,1.15,0.36,1762.1,157)" font-size="15" fill="#fff">Request</text>
<text transform="matrix(0.43,-1.12,1.15,0.36,1807.0,157)" font-size="15" fill="none" stroke="#000" stroke-width="1.3">Reply</text>
<text transform="matrix(0.43,-1.12,1.15,0.36,1807.0,157)" font-size="15" fill="none" stroke="#000" stroke-width="1.3">Request</text>
<text transform="matrix(0.43,-1.12,1.15,0.36,1807.8,157)" font-size="15" fill="none" stroke="#000" stroke-width="1.3">Reply</text>
<text transform="matrix(0.43,-1.12,1.15,0.36,1807.8,157)" font-size="15" fill="none" stroke="#000" stroke-width="1.3">Request</text>
<text transform="matrix(0.43,-1.12,1.15,0.36,1808.6,157)" font-size="15" fill="none" stroke="#000" stroke-width="1.3">Reply</text>
<text transform="matrix(0.43,-1.12,1.15,0.36,1808.6,157)" font-size="15" fill="none" stroke="#000" stroke-width="1.3">Request</text>
<text transform="matrix(0.43,-1.12,1.15,0.36,1809.4,157)" font-size="15" fill="none" stroke="#000" stroke-width="1.3">Reply</text>
<text transform="matrix(0.43,-1.12,1.15,0.36,1809.4,157)" font-size="15" fill="none" stroke="#000" stroke-width="1.3">Request</text>
<text transform="matrix(0.43,-1.12,1.15,0.36,1810.2,157)" font-size="15" fill="none" stroke="#000" stroke-width="1.3">Reply</text>
<text transform="matrix(0.43,-1.12,1.15,0.36,1810.2,157)" font-size="15" fill="none" stroke="#000" stroke-width="1.3">Request</text>
<text transform="matrix(0.43,-1.12,1.15,0.36,1811.0,157)" font-size="15" fill="none" stroke="#000" stroke-width="1.3">Reply</text>
<text transform="matrix(0.43,-1.12,1.15,0.36,1811.0,157)" font-size="15" fill="none" stroke="#000" stroke-width="1.3">Request</text>
<text transform="matrix(0.43,-1.12,1.15,0.36,1811.8,157)" font-size="15" fill="none" stroke="#000" stroke-width="1.3">Reply</text>
<text transform="matrix(0.43,-1.12,1.15,0.36,1811.8,157)" font-size="15" fill="none" stroke="#000" stroke-width="1.3">Request</text>
<text transform="matrix(0.43,-1.12,1.15,0.36,1812.6,157)" font-size="15" fill="none" stroke="#000" stroke-width="1.3">Reply</text>
<text transform="matrix(0.43,-1.12,1.15,0.36,1812.6,157)" font-size="15" fill="none" stroke="#000" stroke-width="1.3">Request</text>
<text transform="matrix(0.43,-1.12,1.15,0.36,1813.4,157)" font-size="15" fill="none" stroke="#000" stroke-width="1.3">Reply</text>
<text transform="matrix(0.43,-1.12,1.15,0.36,1813.4,157)" font-size="15" fill="none" stroke="#000" stroke-width="1.3">Request</text>
<text transform="matrix(0.43,-1.12,1.15,0.36,1814.2,157)" font-size="15" fill="none" stroke="#000" stroke-width="1.3">Reply</text>
<text transform="matrix(0.43,-1.12,1.15,0.36,1814.2,157)" font-size="15" fill="none" stroke="#000" stroke-width="1.3">Request</text>
<text transform="matrix(0.43,-1.12,1.15,0.36,1815.0,157)" font-size="15" fill="none" stroke="#000" stroke-width="1.3">Reply</text>
<text transform="matrix(0.43,-1.12,1.15,0.36,1815.0,157)" font-size="15" fill="none" stroke="#000" stroke-width="1.3">Request</text>
<text transform="matrix(0.43,-1.12,1.15,0.36,1815.8,157)" font-size="15" fill="none" stroke="#000" stroke-width="1.3">Reply</text>
<text transform="matrix(0.43,-1.12,1.15,0.36,1815.8,157)" font-size="15" fill="none" stroke="#000" stroke-width="1.3">Request</text>
<text transform="matrix(0.43,-1.12,1.15,0.36,1807.0,157)" font-size="15" fill="#fff">Reply</text>
<text transform="matrix(0.43,-1.12,1.15,0.36,1807.0,157)" font-size="15" fill="#fff">Request</text>
<text transform="matrix(0.43,-1.12,1.15,0.36,1807.8,157)" font-size="15" fill="#fff">Reply</text>
<text transform="matrix(0.43,-1.12,1.15,0.36,1807.8,157)" font-size="15" fill="#fff">Request</text>
<text transform="matrix(0.43,-1.12,1.15,0.36,1808.6,157)" font-size="15" fill="#fff">Reply</text>
<text transform="matrix(0.43,-1.12,1.15,0.36,1808.6,157)" font-size="15" fill="#fff">Request</text>
<text transform="matrix(0.43,-1.12,1.15,0.36,1809.4,157)" font-size="15" fill="#fff">Reply</text>
<text transform="matrix(0.43,-1.12,1.15,0.36,1809.4,157)" font-size="15" fill="#fff">Request</text>
<text transform="matrix(0.43,-1.12,1.15,0.36,1810.2,157)" font-size="15" fill="#fff">Reply</text>
<text transform="matrix(0.43,-1.12,1.15,0.36,1810.2,157)" font-size="15" fill="#fff">Request</text>
<text transform="matrix(0.43,-1.12,1.15,0.36,1811.0,157)" font-size="15" fill="#fff">Reply</text>
<text transform="matrix(0.43,-1.12,1.15,0.36,1811.0,157)" font-size="15" fill="#fff">Request</text>
<text transform="matrix(0.43,-1.12,1.15,0.36,1811.8,157)" font-size="15" fill="#fff">Reply</text>
<text transform="matrix(0.43,-1.12,1.15,0.36,1811.8,157)" font-size="15" fill="#fff">Request</text>
<text transform="matrix(0.43,-1.12,1.15,0.36,1812.6,157)" font-size="15" fill="#fff">Reply</text>
<text transform="matrix(0.43,-1.12,1.15,0.36,1812.6,157)" font-size="15" fill="#fff">Request</text>
<text transform="matrix(0.43,-1.12,1.15,0.36,1813.4,157)" font-size="15" fill="#fff">Reply</text>
<text transform="matrix(0.43,-1.12,1.15,0.36,1813.4,157)" font-size="15" fill="#fff">Request</text>
<text transform="matrix(0.43,-1.12,1.15,0.36,1814.2,157)" font-size="15" fill="#fff">Reply</text>
<text transform="matrix(0.43,-1.12,1.15,0.36,1814.2,157)" font-size="15" fill="#fff">Request</text>
<text transform="matrix(0.43,-1.12,1.15,0.36,1815.0,157)" font-size="15" fill="#fff">Reply</text>
<text transform="matrix(0.43,-1.12,1.15,0.36,1815.0,157)" font-size="15" fill="#fff">Request</text>
<text transform="matrix(0.43,-1.12,1.15,0.36,1815.8,157)" font-size="15" fill="#fff">Reply</text>
<text transform="matrix(0.43,-1.12,1.15,0.36,1815.8,157)" font-size="15" fill="#fff">Request</text>
<text transform="matrix(0.43,-1.12,1.15,0.36,1836,157)" font-size="15" fill="#fff" stroke="#000" stroke-width="2.2" paint-order="stroke">Reply</text>
<text transform="matrix(0.43,-1.12,1.15,0.36,1836,157)" font-size="15" fill="#fff" stroke="#fff" stroke-width="0.5">Reply</text>
<text transform="matrix(0.43,-1.12,1.15,0.36,1836,157)" font-size="15" fill="#fff" stroke="#000" stroke-width="2.2" paint-order="stroke">Request</text>
<text transform="matrix(0.43,-1.12,1.15,0.36,1836,157)" font-size="15" fill="#fff" stroke="#fff" stroke-width="0.5">Request</text>
<rect x="88.5" y="608.5" width="146.5" height="130" fill="#13211f" stroke="none" stroke-width="1.2" />
<rect x="1154.0" y="608.5" width="80.0" height="130" fill="#13211f" stroke="none" stroke-width="1.2" />
<rect x="235.5" y="593.5" width="918" height="152" fill="#404040" stroke="none" stroke-width="1.2" />
<rect x="235.5" y="608.5" width="367" height="129" fill="#436565" stroke="none" stroke-width="1.2" />
<rect x="603.5" y="608.5" width="22.5" height="129" fill="#4c5e5a" stroke="none" stroke-width="1.2" />
<rect x="626.5" y="608.5" width="22.5" height="129" fill="#4c5e5a" stroke="none" stroke-width="1.2" />
<rect x="650.0" y="608.5" width="10.0" height="129" fill="#3b3b4a" stroke="none" stroke-width="1.2" />
<rect x="661.0" y="608.5" width="33.5" height="129" fill="#3d3d5c" stroke="none" stroke-width="1.2" />
<rect x="695.5" y="608.5" width="229" height="129" fill="#40407a" stroke="none" stroke-width="1.2" />
<rect x="925.5" y="608.5" width="91" height="129" fill="#404040" stroke="none" stroke-width="1.2" />
<rect x="1017.5" y="608.5" width="91" height="129" fill="#404040" stroke="none" stroke-width="1.2" />
<rect x="1109.5" y="608.5" width="22" height="129" fill="#436565" stroke="none" stroke-width="1.2" />
<rect x="1132.5" y="608.5" width="21" height="129" fill="#436565" stroke="none" stroke-width="1.2" />
<rect x="1234.5" y="593.5" width="508" height="152" fill="#404040" stroke="none" stroke-width="1.2" />
<rect x="1234.5" y="608.5" width="331" height="129" fill="#436565" stroke="none" stroke-width="1.2" />
<rect x="1566.5" y="608.5" width="21.5" height="129" fill="#4c5e5a" stroke="none" stroke-width="1.2" />
<rect x="1589.0" y="608.5" width="21.0" height="129" fill="#4c5e5a" stroke="none" stroke-width="1.2" />
<rect x="1611.0" y="608.5" width="44.5" height="129" fill="#40406a" stroke="none" stroke-width="1.2" />
<rect x="1656.5" y="608.5" width="42" height="129" fill="#404040" stroke="none" stroke-width="1.2" />
<rect x="1699.5" y="608.5" width="21.5" height="129" fill="#436565" stroke="none" stroke-width="1.2" />
<rect x="1722.0" y="608.5" width="20.5" height="129" fill="#436565" stroke="none" stroke-width="1.2" />
<rect x="242.5" y="458.5" width="5" height="277" fill="#4a5a70" stroke="none" stroke-width="1.2" />
<rect x="1240.5" y="458.5" width="6" height="277" fill="#4a5a70" stroke="none" stroke-width="1.2" />
<rect x="247.5" y="443.5" width="906" height="299" fill="#404040" stroke="none" stroke-width="1.2" />
<rect x="247.5" y="458.5" width="355" height="277" fill="#436565" stroke="none" stroke-width="1.2" />
<rect x="603.5" y="458.5" width="22.5" height="277" fill="#4c5e5a" stroke="none" stroke-width="1.2" />
<rect x="626.5" y="458.5" width="22.5" height="277" fill="#4c5e5a" stroke="none" stroke-width="1.2" />
<rect x="650.0" y="458.5" width="10.0" height="277" fill="#3b3b4a" stroke="none" stroke-width="1.2" />
<rect x="661.0" y="458.5" width="33.5" height="277" fill="#3d3d5c" stroke="none" stroke-width="1.2" />
<rect x="695.5" y="458.5" width="229" height="277" fill="#40407a" stroke="none" stroke-width="1.2" />
<rect x="925.5" y="458.5" width="91" height="277" fill="#404040" stroke="none" stroke-width="1.2" />
<rect x="1017.5" y="458.5" width="91" height="277" fill="#404040" stroke="none" stroke-width="1.2" />
<rect x="1109.5" y="458.5" width="22" height="277" fill="#436565" stroke="none" stroke-width="1.2" />
<rect x="1132.5" y="458.5" width="21" height="277" fill="#436565" stroke="none" stroke-width="1.2" />
<rect x="1247.0" y="443.5" width="495.5" height="299" fill="#404040" stroke="none" stroke-width="1.2" />
<rect x="1247.0" y="458.5" width="318.5" height="277" fill="#436565" stroke="none" stroke-width="1.2" />
<rect x="1566.5" y="458.5" width="21.5" height="277" fill="#4c5e5a" stroke="none" stroke-width="1.2" />
<rect x="1589.0" y="458.5" width="21.0" height="277" fill="#4c5e5a" stroke="none" stroke-width="1.2" />
<rect x="1611.0" y="458.5" width="44.5" height="277" fill="#40406a" stroke="none" stroke-width="1.2" />
<rect x="1656.5" y="458.5" width="42" height="277" fill="#404040" stroke="none" stroke-width="1.2" />
<rect x="1699.5" y="458.5" width="21.5" height="277" fill="#436565" stroke="none" stroke-width="1.2" />
<rect x="1722.0" y="458.5" width="20.5" height="277" fill="#436565" stroke="none" stroke-width="1.2" />
<rect x="88.5" y="608.5" width="146.5" height="130" fill="none" stroke="#2c4a46" stroke-width="1.2" />
<text x="161" y="620.5" font-size="14" fill="#fff" text-anchor="middle" font-weight="normal" >Idle</text>
<rect x="1154.0" y="608.5" width="80.0" height="130" fill="none" stroke="#2c4a46" stroke-width="1.2" />
<text x="1194" y="620.5" font-size="14" fill="#fff" text-anchor="middle" font-weight="normal" >Idle</text>
<rect x="235.5" y="593.5" width="918" height="152" fill="none" stroke="#a8a8a8" stroke-width="1.2" />
<text x="694" y="606" font-size="14" fill="#fff" text-anchor="middle" font-weight="normal" >Request</text>
<rect x="235.5" y="608.5" width="367" height="129" fill="none" stroke="#3cc4c8" stroke-width="1.2" />
<text x="419" y="620.5" font-size="14" fill="#fff" text-anchor="middle" font-weight="normal" >Preamble</text>
<rect x="603.5" y="608.5" width="22.5" height="129" fill="none" stroke="#4c5e5a" stroke-width="1.2" />
<rect x="626.5" y="608.5" width="22.5" height="129" fill="none" stroke="#6a5a8a" stroke-width="1.2" />
<rect x="650.0" y="608.5" width="10.0" height="129" fill="none" stroke="#c8c8e8" stroke-width="1.2" />
<rect x="661.0" y="608.5" width="33.5" height="129" fill="none" stroke="#c8c8e8" stroke-width="1.2" />
<rect x="695.5" y="608.5" width="229" height="129" fill="none" stroke="#b0b0e8" stroke-width="1.2" />
<rect x="925.5" y="608.5" width="91" height="129" fill="none" stroke="#3cc4c8" stroke-width="1.2" />
<rect x="1017.5" y="608.5" width="91" height="129" fill="none" stroke="#3cc4c8" stroke-width="1.2" />
<rect x="1109.5" y="608.5" width="22" height="129" fill="none" stroke="#3cc4c8" stroke-width="1.2" />
<rect x="1132.5" y="608.5" width="21" height="129" fill="none" stroke="#3cc4c8" stroke-width="1.2" />
<text x="655" y="620.5" font-size="14" fill="#fff" text-anchor="middle" font-weight="normal" >N</text>
<text x="678" y="620.5" font-size="14" fill="#fff" text-anchor="middle" font-weight="normal" >Write</text>
<text x="810" y="620.5" font-size="14" fill="#fff" text-anchor="middle" font-weight="normal" >0x00600</text>
<text x="971" y="620.5" font-size="14" fill="#fff" text-anchor="middle" font-weight="normal" >0x00</text>
<text x="1063" y="620.5" font-size="14" fill="#fff" text-anchor="middle" font-weight="normal" >0x01</text>
<rect x="1234.5" y="593.5" width="508" height="152" fill="none" stroke="#a8a8a8" stroke-width="1.2" />
<text x="1489" y="606" font-size="14" fill="#fff" text-anchor="middle" font-weight="normal" >Reply</text>
<rect x="1234.5" y="608.5" width="331" height="129" fill="none" stroke="#3cc4c8" stroke-width="1.2" />
<text x="1400" y="620.5" font-size="14" fill="#fff" text-anchor="middle" font-weight="normal" >Preamble</text>
<rect x="1566.5" y="608.5" width="21.5" height="129" fill="none" stroke="#6a5a8a" stroke-width="1.2" />
<rect x="1589.0" y="608.5" width="21.0" height="129" fill="none" stroke="#4c5e5a" stroke-width="1.2" />
<rect x="1611.0" y="608.5" width="44.5" height="129" fill="none" stroke="#c8c8e8" stroke-width="1.2" />
<rect x="1656.5" y="608.5" width="42" height="129" fill="none" stroke="#3cc4c8" stroke-width="1.2" />
<rect x="1699.5" y="608.5" width="21.5" height="129" fill="none" stroke="#3cc4c8" stroke-width="1.2" />
<rect x="1722.0" y="608.5" width="20.5" height="129" fill="none" stroke="#3cc4c8" stroke-width="1.2" />
<text x="1645" y="620.5" font-size="14" fill="#fff" text-anchor="middle" font-weight="normal" >AUX_ACK0x0</text>
<rect x="242.5" y="458.5" width="5" height="277" fill="none" stroke="#3a8a8a" stroke-width="1.2" />
<rect x="1240.5" y="458.5" width="6" height="277" fill="none" stroke="#3a8a8a" stroke-width="1.2" />
<rect x="247.5" y="443.5" width="906" height="299" fill="none" stroke="#a8a8a8" stroke-width="1.2" />
<text x="700" y="456" font-size="14" fill="#fff" text-anchor="middle" font-weight="normal" >Request</text>
<rect x="247.5" y="458.5" width="355" height="277" fill="none" stroke="#3cc4c8" stroke-width="1.2" />
<text x="425" y="470.5" font-size="14" fill="#fff" text-anchor="middle" font-weight="normal" >Preamble</text>
<rect x="603.5" y="458.5" width="22.5" height="277" fill="none" stroke="#4c5e5a" stroke-width="1.2" />
<rect x="626.5" y="458.5" width="22.5" height="277" fill="none" stroke="#6a5a8a" stroke-width="1.2" />
<rect x="650.0" y="458.5" width="10.0" height="277" fill="none" stroke="#c8c8e8" stroke-width="1.2" />
<rect x="661.0" y="458.5" width="33.5" height="277" fill="none" stroke="#c8c8e8" stroke-width="1.2" />
<rect x="695.5" y="458.5" width="229" height="277" fill="none" stroke="#b0b0e8" stroke-width="1.2" />
<rect x="925.5" y="458.5" width="91" height="277" fill="none" stroke="#3cc4c8" stroke-width="1.2" />
<rect x="1017.5" y="458.5" width="91" height="277" fill="none" stroke="#3cc4c8" stroke-width="1.2" />
<rect x="1109.5" y="458.5" width="22" height="277" fill="none" stroke="#3cc4c8" stroke-width="1.2" />
<rect x="1132.5" y="458.5" width="21" height="277" fill="none" stroke="#3cc4c8" stroke-width="1.2" />
<text x="655" y="470.5" font-size="14" fill="#fff" text-anchor="middle" font-weight="normal" >N</text>
<text x="678" y="470.5" font-size="14" fill="#fff" text-anchor="middle" font-weight="normal" >Write</text>
<text x="810" y="470.5" font-size="14" fill="#fff" text-anchor="middle" font-weight="normal" >0x00600</text>
<text x="971" y="470.5" font-size="14" fill="#fff" text-anchor="middle" font-weight="normal" >0x00</text>
<text x="1063" y="470.5" font-size="14" fill="#fff" text-anchor="middle" font-weight="normal" >0x01</text>
<rect x="1247.0" y="443.5" width="495.5" height="299" fill="none" stroke="#a8a8a8" stroke-width="1.2" />
<text x="1495" y="456" font-size="14" fill="#fff" text-anchor="middle" font-weight="normal" >Reply</text>
<rect x="1247.0" y="458.5" width="318.5" height="277" fill="none" stroke="#3cc4c8" stroke-width="1.2" />
<text x="1406" y="470.5" font-size="14" fill="#fff" text-anchor="middle" font-weight="normal" >Preamble</text>
<rect x="1566.5" y="458.5" width="21.5" height="277" fill="none" stroke="#6a5a8a" stroke-width="1.2" />
<rect x="1589.0" y="458.5" width="21.0" height="277" fill="none" stroke="#4c5e5a" stroke-width="1.2" />
<rect x="1611.0" y="458.5" width="44.5" height="277" fill="none" stroke="#c8c8e8" stroke-width="1.2" />
<rect x="1656.5" y="458.5" width="42" height="277" fill="none" stroke="#3cc4c8" stroke-width="1.2" />
<rect x="1699.5" y="458.5" width="21.5" height="277" fill="none" stroke="#3cc4c8" stroke-width="1.2" />
<rect x="1722.0" y="458.5" width="20.5" height="277" fill="none" stroke="#3cc4c8" stroke-width="1.2" />
<text x="1645" y="470.5" font-size="14" fill="#fff" text-anchor="middle" font-weight="normal" >AUX_ACK0x0</text>
<g opacity="0.55">
<line x1="269.5" y1="427" x2="269.5" y2="769" stroke="#8a8a8a" stroke-width="1" stroke-dasharray="1 1" shape-rendering="crispEdges"/>
<line x1="451.5" y1="427" x2="451.5" y2="769" stroke="#8a8a8a" stroke-width="1" stroke-dasharray="1 1" shape-rendering="crispEdges"/>
<line x1="632.5" y1="427" x2="632.5" y2="769" stroke="#8a8a8a" stroke-width="1" stroke-dasharray="1 1" shape-rendering="crispEdges"/>
<line x1="814.5" y1="427" x2="814.5" y2="769" stroke="#8a8a8a" stroke-width="1" stroke-dasharray="1 1" shape-rendering="crispEdges"/>
<line x1="995.5" y1="427" x2="995.5" y2="769" stroke="#8a8a8a" stroke-width="1" stroke-dasharray="1 1" shape-rendering="crispEdges"/>
<line x1="1176.5" y1="427" x2="1176.5" y2="769" stroke="#8a8a8a" stroke-width="1" stroke-dasharray="1 1" shape-rendering="crispEdges"/>
<line x1="1358.5" y1="427" x2="1358.5" y2="769" stroke="#8a8a8a" stroke-width="1" stroke-dasharray="1 1" shape-rendering="crispEdges"/>
<line x1="1540.5" y1="427" x2="1540.5" y2="769" stroke="#8a8a8a" stroke-width="1" stroke-dasharray="1 1" shape-rendering="crispEdges"/>
<line x1="1721.5" y1="427" x2="1721.5" y2="769" stroke="#8a8a8a" stroke-width="1" stroke-dasharray="1 1" shape-rendering="crispEdges"/>
<line x1="90" y1="469.5" x2="1901" y2="469.5" stroke="#8a8a8a" stroke-width="1" stroke-dasharray="1 1" shape-rendering="crispEdges"/>
<line x1="90" y1="512.5" x2="1901" y2="512.5" stroke="#8a8a8a" stroke-width="1" stroke-dasharray="1 1" shape-rendering="crispEdges"/>
<line x1="90" y1="555.5" x2="1901" y2="555.5" stroke="#8a8a8a" stroke-width="1" stroke-dasharray="1 1" shape-rendering="crispEdges"/>
<line x1="90" y1="642.5" x2="1901" y2="642.5" stroke="#8a8a8a" stroke-width="1" stroke-dasharray="1 1" shape-rendering="crispEdges"/>
<line x1="90" y1="685.5" x2="1901" y2="685.5" stroke="#8a8a8a" stroke-width="1" stroke-dasharray="1 1" shape-rendering="crispEdges"/>
<line x1="90" y1="728.5" x2="1901" y2="728.5" stroke="#8a8a8a" stroke-width="1" stroke-dasharray="1 1" shape-rendering="crispEdges"/>
</g>
<line x1="89.5" y1="599.5" x2="1900.5" y2="599.5" stroke="#8a8a8a" stroke-width="1" opacity="0.8" shape-rendering="crispEdges"/>
<g opacity="0.55">
<line x1="995.5" y1="427" x2="995.5" y2="769" stroke="#8a8a8a" stroke-width="1" shape-rendering="crispEdges"/>
<line x1="125.5" y1="597" x2="125.5" y2="602" stroke="#9a9a9a" stroke-width="1" shape-rendering="crispEdges"/>
<line x1="161.5" y1="597" x2="161.5" y2="602" stroke="#9a9a9a" stroke-width="1" shape-rendering="crispEdges"/>
<line x1="197.5" y1="597" x2="197.5" y2="602" stroke="#9a9a9a" stroke-width="1" shape-rendering="crispEdges"/>
<line x1="234.5" y1="597" x2="234.5" y2="602" stroke="#9a9a9a" stroke-width="1" shape-rendering="crispEdges"/>
<line x1="306.5" y1="597" x2="306.5" y2="602" stroke="#9a9a9a" stroke-width="1" shape-rendering="crispEdges"/>
<line x1="342.5" y1="597" x2="342.5" y2="602" stroke="#9a9a9a" stroke-width="1" shape-rendering="crispEdges"/>
<line x1="379.5" y1="597" x2="379.5" y2="602" stroke="#9a9a9a" stroke-width="1" shape-rendering="crispEdges"/>
<line x1="415.5" y1="597" x2="415.5" y2="602" stroke="#9a9a9a" stroke-width="1" shape-rendering="crispEdges"/>
<line x1="487.5" y1="597" x2="487.5" y2="602" stroke="#9a9a9a" stroke-width="1" shape-rendering="crispEdges"/>
<line x1="524.5" y1="597" x2="524.5" y2="602" stroke="#9a9a9a" stroke-width="1" shape-rendering="crispEdges"/>
<line x1="560.5" y1="597" x2="560.5" y2="602" stroke="#9a9a9a" stroke-width="1" shape-rendering="crispEdges"/>
<line x1="596.5" y1="597" x2="596.5" y2="602" stroke="#9a9a9a" stroke-width="1" shape-rendering="crispEdges"/>
<line x1="669.5" y1="597" x2="669.5" y2="602" stroke="#9a9a9a" stroke-width="1" shape-rendering="crispEdges"/>
<line x1="705.5" y1="597" x2="705.5" y2="602" stroke="#9a9a9a" stroke-width="1" shape-rendering="crispEdges"/>
<line x1="741.5" y1="597" x2="741.5" y2="602" stroke="#9a9a9a" stroke-width="1" shape-rendering="crispEdges"/>
<line x1="778.5" y1="597" x2="778.5" y2="602" stroke="#9a9a9a" stroke-width="1" shape-rendering="crispEdges"/>
<line x1="850.5" y1="597" x2="850.5" y2="602" stroke="#9a9a9a" stroke-width="1" shape-rendering="crispEdges"/>
<line x1="886.5" y1="597" x2="886.5" y2="602" stroke="#9a9a9a" stroke-width="1" shape-rendering="crispEdges"/>
<line x1="923.5" y1="597" x2="923.5" y2="602" stroke="#9a9a9a" stroke-width="1" shape-rendering="crispEdges"/>
<line x1="959.5" y1="597" x2="959.5" y2="602" stroke="#9a9a9a" stroke-width="1" shape-rendering="crispEdges"/>
<line x1="1031.5" y1="597" x2="1031.5" y2="602" stroke="#9a9a9a" stroke-width="1" shape-rendering="crispEdges"/>
<line x1="1068.5" y1="597" x2="1068.5" y2="602" stroke="#9a9a9a" stroke-width="1" shape-rendering="crispEdges"/>
<line x1="1104.5" y1="597" x2="1104.5" y2="602" stroke="#9a9a9a" stroke-width="1" shape-rendering="crispEdges"/>
<line x1="1140.5" y1="597" x2="1140.5" y2="602" stroke="#9a9a9a" stroke-width="1" shape-rendering="crispEdges"/>
<line x1="1213.5" y1="597" x2="1213.5" y2="602" stroke="#9a9a9a" stroke-width="1" shape-rendering="crispEdges"/>
<line x1="1249.5" y1="597" x2="1249.5" y2="602" stroke="#9a9a9a" stroke-width="1" shape-rendering="crispEdges"/>
<line x1="1285.5" y1="597" x2="1285.5" y2="602" stroke="#9a9a9a" stroke-width="1" shape-rendering="crispEdges"/>
<line x1="1321.5" y1="597" x2="1321.5" y2="602" stroke="#9a9a9a" stroke-width="1" shape-rendering="crispEdges"/>
<line x1="1394.5" y1="597" x2="1394.5" y2="602" stroke="#9a9a9a" stroke-width="1" shape-rendering="crispEdges"/>
<line x1="1430.5" y1="597" x2="1430.5" y2="602" stroke="#9a9a9a" stroke-width="1" shape-rendering="crispEdges"/>
<line x1="1466.5" y1="597" x2="1466.5" y2="602" stroke="#9a9a9a" stroke-width="1" shape-rendering="crispEdges"/>
<line x1="1503.5" y1="597" x2="1503.5" y2="602" stroke="#9a9a9a" stroke-width="1" shape-rendering="crispEdges"/>
<line x1="1575.5" y1="597" x2="1575.5" y2="602" stroke="#9a9a9a" stroke-width="1" shape-rendering="crispEdges"/>
<line x1="1612.5" y1="597" x2="1612.5" y2="602" stroke="#9a9a9a" stroke-width="1" shape-rendering="crispEdges"/>
<line x1="1648.5" y1="597" x2="1648.5" y2="602" stroke="#9a9a9a" stroke-width="1" shape-rendering="crispEdges"/>
<line x1="1684.5" y1="597" x2="1684.5" y2="602" stroke="#9a9a9a" stroke-width="1" shape-rendering="crispEdges"/>
<line x1="1757.5" y1="597" x2="1757.5" y2="602" stroke="#9a9a9a" stroke-width="1" shape-rendering="crispEdges"/>
<line x1="1793.5" y1="597" x2="1793.5" y2="602" stroke="#9a9a9a" stroke-width="1" shape-rendering="crispEdges"/>
<line x1="1829.5" y1="597" x2="1829.5" y2="602" stroke="#9a9a9a" stroke-width="1" shape-rendering="crispEdges"/>
<line x1="1865.5" y1="597" x2="1865.5" y2="602" stroke="#9a9a9a" stroke-width="1" shape-rendering="crispEdges"/>
<line x1="992" y1="435.5" x2="999" y2="435.5" stroke="#9a9a9a" stroke-width="1" shape-rendering="crispEdges"/>
<line x1="992" y1="443.5" x2="999" y2="443.5" stroke="#9a9a9a" stroke-width="1" shape-rendering="crispEdges"/>
<line x1="992" y1="452.5" x2="999" y2="452.5" stroke="#9a9a9a" stroke-width="1" shape-rendering="crispEdges"/>
<line x1="992" y1="460.5" x2="999" y2="460.5" stroke="#9a9a9a" stroke-width="1" shape-rendering="crispEdges"/>
<line x1="992" y1="469.5" x2="999" y2="469.5" stroke="#9a9a9a" stroke-width="1" shape-rendering="crispEdges"/>
<line x1="992" y1="478.5" x2="999" y2="478.5" stroke="#9a9a9a" stroke-width="1" shape-rendering="crispEdges"/>
<line x1="992" y1="486.5" x2="999" y2="486.5" stroke="#9a9a9a" stroke-width="1" shape-rendering="crispEdges"/>
<line x1="992" y1="495.5" x2="999" y2="495.5" stroke="#9a9a9a" stroke-width="1" shape-rendering="crispEdges"/>
<line x1="992" y1="503.5" x2="999" y2="503.5" stroke="#9a9a9a" stroke-width="1" shape-rendering="crispEdges"/>
<line x1="992" y1="512.5" x2="999" y2="512.5" stroke="#9a9a9a" stroke-width="1" shape-rendering="crispEdges"/>
<line x1="992" y1="521.5" x2="999" y2="521.5" stroke="#9a9a9a" stroke-width="1" shape-rendering="crispEdges"/>
<line x1="992" y1="529.5" x2="999" y2="529.5" stroke="#9a9a9a" stroke-width="1" shape-rendering="crispEdges"/>
<line x1="992" y1="538.5" x2="999" y2="538.5" stroke="#9a9a9a" stroke-width="1" shape-rendering="crispEdges"/>
<line x1="992" y1="546.5" x2="999" y2="546.5" stroke="#9a9a9a" stroke-width="1" shape-rendering="crispEdges"/>
<line x1="992" y1="555.5" x2="999" y2="555.5" stroke="#9a9a9a" stroke-width="1" shape-rendering="crispEdges"/>
<line x1="992" y1="564.5" x2="999" y2="564.5" stroke="#9a9a9a" stroke-width="1" shape-rendering="crispEdges"/>
<line x1="992" y1="572.5" x2="999" y2="572.5" stroke="#9a9a9a" stroke-width="1" shape-rendering="crispEdges"/>
<line x1="992" y1="581.5" x2="999" y2="581.5" stroke="#9a9a9a" stroke-width="1" shape-rendering="crispEdges"/>
<line x1="992" y1="589.5" x2="999" y2="589.5" stroke="#9a9a9a" stroke-width="1" shape-rendering="crispEdges"/>
<line x1="992" y1="598.5" x2="999" y2="598.5" stroke="#9a9a9a" stroke-width="1" shape-rendering="crispEdges"/>
<line x1="992" y1="607.5" x2="999" y2="607.5" stroke="#9a9a9a" stroke-width="1" shape-rendering="crispEdges"/>
<line x1="992" y1="615.5" x2="999" y2="615.5" stroke="#9a9a9a" stroke-width="1" shape-rendering="crispEdges"/>
<line x1="992" y1="624.5" x2="999" y2="624.5" stroke="#9a9a9a" stroke-width="1" shape-rendering="crispEdges"/>
<line x1="992" y1="632.5" x2="999" y2="632.5" stroke="#9a9a9a" stroke-width="1" shape-rendering="crispEdges"/>
<line x1="992" y1="641.5" x2="999" y2="641.5" stroke="#9a9a9a" stroke-width="1" shape-rendering="crispEdges"/>
<line x1="992" y1="650.5" x2="999" y2="650.5" stroke="#9a9a9a" stroke-width="1" shape-rendering="crispEdges"/>
<line x1="992" y1="658.5" x2="999" y2="658.5" stroke="#9a9a9a" stroke-width="1" shape-rendering="crispEdges"/>
<line x1="992" y1="667.5" x2="999" y2="667.5" stroke="#9a9a9a" stroke-width="1" shape-rendering="crispEdges"/>
<line x1="992" y1="675.5" x2="999" y2="675.5" stroke="#9a9a9a" stroke-width="1" shape-rendering="crispEdges"/>
<line x1="992" y1="684.5" x2="999" y2="684.5" stroke="#9a9a9a" stroke-width="1" shape-rendering="crispEdges"/>
<line x1="992" y1="693.5" x2="999" y2="693.5" stroke="#9a9a9a" stroke-width="1" shape-rendering="crispEdges"/>
<line x1="992" y1="701.5" x2="999" y2="701.5" stroke="#9a9a9a" stroke-width="1" shape-rendering="crispEdges"/>
<line x1="992" y1="710.5" x2="999" y2="710.5" stroke="#9a9a9a" stroke-width="1" shape-rendering="crispEdges"/>
<line x1="992" y1="718.5" x2="999" y2="718.5" stroke="#9a9a9a" stroke-width="1" shape-rendering="crispEdges"/>
<line x1="992" y1="727.5" x2="999" y2="727.5" stroke="#9a9a9a" stroke-width="1" shape-rendering="crispEdges"/>
<line x1="992" y1="736.5" x2="999" y2="736.5" stroke="#9a9a9a" stroke-width="1" shape-rendering="crispEdges"/>
<line x1="992" y1="744.5" x2="999" y2="744.5" stroke="#9a9a9a" stroke-width="1" shape-rendering="crispEdges"/>
<line x1="992" y1="753.5" x2="999" y2="753.5" stroke="#9a9a9a" stroke-width="1" shape-rendering="crispEdges"/>
<line x1="992" y1="761.5" x2="999" y2="761.5" stroke="#9a9a9a" stroke-width="1" shape-rendering="crispEdges"/>
<rect x="125" y="490" width="1" height="1" fill="#a0a0a0" stroke="none" stroke-width="1" />
<rect x="161" y="490" width="1" height="1" fill="#a0a0a0" stroke="none" stroke-width="1" />
<rect x="197" y="490" width="1" height="1" fill="#a0a0a0" stroke="none" stroke-width="1" />
<rect x="234" y="490" width="1" height="1" fill="#a0a0a0" stroke="none" stroke-width="1" />
<rect x="306" y="490" width="1" height="1" fill="#a0a0a0" stroke="none" stroke-width="1" />
<rect x="342" y="490" width="1" height="1" fill="#a0a0a0" stroke="none" stroke-width="1" />
<rect x="379" y="490" width="1" height="1" fill="#a0a0a0" stroke="none" stroke-width="1" />
<rect x="415" y="490" width="1" height="1" fill="#a0a0a0" stroke="none" stroke-width="1" />
<rect x="487" y="490" width="1" height="1" fill="#a0a0a0" stroke="none" stroke-width="1" />
<rect x="524" y="490" width="1" height="1" fill="#a0a0a0" stroke="none" stroke-width="1" />
<rect x="560" y="490" width="1" height="1" fill="#a0a0a0" stroke="none" stroke-width="1" />
<rect x="596" y="490" width="1" height="1" fill="#a0a0a0" stroke="none" stroke-width="1" />
<rect x="669" y="490" width="1" height="1" fill="#a0a0a0" stroke="none" stroke-width="1" />
<rect x="705" y="490" width="1" height="1" fill="#a0a0a0" stroke="none" stroke-width="1" />
<rect x="741" y="490" width="1" height="1" fill="#a0a0a0" stroke="none" stroke-width="1" />
<rect x="778" y="490" width="1" height="1" fill="#a0a0a0" stroke="none" stroke-width="1" />
<rect x="850" y="490" width="1" height="1" fill="#a0a0a0" stroke="none" stroke-width="1" />
<rect x="886" y="490" width="1" height="1" fill="#a0a0a0" stroke="none" stroke-width="1" />
<rect x="923" y="490" width="1" height="1" fill="#a0a0a0" stroke="none" stroke-width="1" />
<rect x="959" y="490" width="1" height="1" fill="#a0a0a0" stroke="none" stroke-width="1" />
<rect x="1031" y="490" width="1" height="1" fill="#a0a0a0" stroke="none" stroke-width="1" />
<rect x="1068" y="490" width="1" height="1" fill="#a0a0a0" stroke="none" stroke-width="1" />
<rect x="1104" y="490" width="1" height="1" fill="#a0a0a0" stroke="none" stroke-width="1" />
<rect x="1140" y="490" width="1" height="1" fill="#a0a0a0" stroke="none" stroke-width="1" />
<rect x="1213" y="490" width="1" height="1" fill="#a0a0a0" stroke="none" stroke-width="1" />
<rect x="1249" y="490" width="1" height="1" fill="#a0a0a0" stroke="none" stroke-width="1" />
<rect x="1285" y="490" width="1" height="1" fill="#a0a0a0" stroke="none" stroke-width="1" />
<rect x="1321" y="490" width="1" height="1" fill="#a0a0a0" stroke="none" stroke-width="1" />
<rect x="1394" y="490" width="1" height="1" fill="#a0a0a0" stroke="none" stroke-width="1" />
<rect x="1430" y="490" width="1" height="1" fill="#a0a0a0" stroke="none" stroke-width="1" />
<rect x="1466" y="490" width="1" height="1" fill="#a0a0a0" stroke="none" stroke-width="1" />
<rect x="1503" y="490" width="1" height="1" fill="#a0a0a0" stroke="none" stroke-width="1" />
<rect x="1575" y="490" width="1" height="1" fill="#a0a0a0" stroke="none" stroke-width="1" />
<rect x="1612" y="490" width="1" height="1" fill="#a0a0a0" stroke="none" stroke-width="1" />
<rect x="1648" y="490" width="1" height="1" fill="#a0a0a0" stroke="none" stroke-width="1" />
<rect x="1684" y="490" width="1" height="1" fill="#a0a0a0" stroke="none" stroke-width="1" />
<rect x="1757" y="490" width="1" height="1" fill="#a0a0a0" stroke="none" stroke-width="1" />
<rect x="1793" y="490" width="1" height="1" fill="#a0a0a0" stroke="none" stroke-width="1" />
<rect x="1829" y="490" width="1" height="1" fill="#a0a0a0" stroke="none" stroke-width="1" />
<rect x="1865" y="490" width="1" height="1" fill="#a0a0a0" stroke="none" stroke-width="1" />
<rect x="125" y="705" width="1" height="1" fill="#a0a0a0" stroke="none" stroke-width="1" />
<rect x="161" y="705" width="1" height="1" fill="#a0a0a0" stroke="none" stroke-width="1" />
<rect x="197" y="705" width="1" height="1" fill="#a0a0a0" stroke="none" stroke-width="1" />
<rect x="234" y="705" width="1" height="1" fill="#a0a0a0" stroke="none" stroke-width="1" />
<rect x="306" y="705" width="1" height="1" fill="#a0a0a0" stroke="none" stroke-width="1" />
<rect x="342" y="705" width="1" height="1" fill="#a0a0a0" stroke="none" stroke-width="1" />
<rect x="379" y="705" width="1" height="1" fill="#a0a0a0" stroke="none" stroke-width="1" />
<rect x="415" y="705" width="1" height="1" fill="#a0a0a0" stroke="none" stroke-width="1" />
<rect x="487" y="705" width="1" height="1" fill="#a0a0a0" stroke="none" stroke-width="1" />
<rect x="524" y="705" width="1" height="1" fill="#a0a0a0" stroke="none" stroke-width="1" />
<rect x="560" y="705" width="1" height="1" fill="#a0a0a0" stroke="none" stroke-width="1" />
<rect x="596" y="705" width="1" height="1" fill="#a0a0a0" stroke="none" stroke-width="1" />
<rect x="669" y="705" width="1" height="1" fill="#a0a0a0" stroke="none" stroke-width="1" />
<rect x="705" y="705" width="1" height="1" fill="#a0a0a0" stroke="none" stroke-width="1" />
<rect x="741" y="705" width="1" height="1" fill="#a0a0a0" stroke="none" stroke-width="1" />
<rect x="778" y="705" width="1" height="1" fill="#a0a0a0" stroke="none" stroke-width="1" />
<rect x="850" y="705" width="1" height="1" fill="#a0a0a0" stroke="none" stroke-width="1" />
<rect x="886" y="705" width="1" height="1" fill="#a0a0a0" stroke="none" stroke-width="1" />
<rect x="923" y="705" width="1" height="1" fill="#a0a0a0" stroke="none" stroke-width="1" />
<rect x="959" y="705" width="1" height="1" fill="#a0a0a0" stroke="none" stroke-width="1" />
<rect x="1031" y="705" width="1" height="1" fill="#a0a0a0" stroke="none" stroke-width="1" />
<rect x="1068" y="705" width="1" height="1" fill="#a0a0a0" stroke="none" stroke-width="1" />
<rect x="1104" y="705" width="1" height="1" fill="#a0a0a0" stroke="none" stroke-width="1" />
<rect x="1140" y="705" width="1" height="1" fill="#a0a0a0" stroke="none" stroke-width="1" />
<rect x="1213" y="705" width="1" height="1" fill="#a0a0a0" stroke="none" stroke-width="1" />
<rect x="1249" y="705" width="1" height="1" fill="#a0a0a0" stroke="none" stroke-width="1" />
<rect x="1285" y="705" width="1" height="1" fill="#a0a0a0" stroke="none" stroke-width="1" />
<rect x="1321" y="705" width="1" height="1" fill="#a0a0a0" stroke="none" stroke-width="1" />
<rect x="1394" y="705" width="1" height="1" fill="#a0a0a0" stroke="none" stroke-width="1" />
<rect x="1430" y="705" width="1" height="1" fill="#a0a0a0" stroke="none" stroke-width="1" />
<rect x="1466" y="705" width="1" height="1" fill="#a0a0a0" stroke="none" stroke-width="1" />
<rect x="1503" y="705" width="1" height="1" fill="#a0a0a0" stroke="none" stroke-width="1" />
<rect x="1575" y="705" width="1" height="1" fill="#a0a0a0" stroke="none" stroke-width="1" />
<rect x="1612" y="705" width="1" height="1" fill="#a0a0a0" stroke="none" stroke-width="1" />
<rect x="1648" y="705" width="1" height="1" fill="#a0a0a0" stroke="none" stroke-width="1" />
<rect x="1684" y="705" width="1" height="1" fill="#a0a0a0" stroke="none" stroke-width="1" />
<rect x="1757" y="705" width="1" height="1" fill="#a0a0a0" stroke="none" stroke-width="1" />
<rect x="1793" y="705" width="1" height="1" fill="#a0a0a0" stroke="none" stroke-width="1" />
<rect x="1829" y="705" width="1" height="1" fill="#a0a0a0" stroke="none" stroke-width="1" />
<rect x="1865" y="705" width="1" height="1" fill="#a0a0a0" stroke="none" stroke-width="1" />
</g>
<line x1="89.5" y1="684.5" x2="1900.5" y2="684.5" stroke="#f0f0f0" stroke-width="1.2" stroke-dasharray="5 4"/>
<line x1="89.5" y1="691.5" x2="1900.5" y2="691.5" stroke="#b8b0f0" stroke-width="1.2" stroke-dasharray="5 4"/>
<path d="M89.0,690.0 L90.5,689.8 L92.0,689.6 L93.5,690.2 L95.0,689.5 L96.5,690.0 L98.0,689.8 L99.5,689.5 L101.0,690.0 L102.5,689.4 L104.1,689.9 L105.6,689.5 L107.1,689.5 L108.6,689.9 L110.1,690.4 L111.6,689.5 L113.1,689.7 L114.6,690.2 L116.1,690.5 L117.6,690.1 L119.1,689.9 L120.6,690.6 L122.1,689.5 L123.6,690.4 L125.1,689.7 L126.6,689.6 L128.1,689.5 L129.6,689.8 L131.1,690.4 L132.6,689.6 L134.2,690.1 L135.7,690.2 L137.2,689.8 L138.7,690.1 L140.2,689.5 L141.7,689.5 L143.2,689.6 L144.7,690.2 L146.2,689.9 L147.7,689.8 L149.2,690.1 L150.7,689.9 L152.2,689.8 L153.7,690.4 L155.2,690.2 L156.7,689.7 L158.2,690.1 L159.7,690.0 L161.2,690.5 L162.8,690.3 L164.3,689.7 L165.8,690.6 L167.3,689.5 L168.8,689.9 L170.3,690.3 L171.8,689.6 L173.3,690.0 L174.8,689.4 L176.3,690.2 L177.8,690.3 L179.3,690.1 L180.8,690.5 L182.3,689.8 L183.8,690.2 L185.3,690.1 L186.8,690.1 L188.3,689.9 L189.8,690.4 L191.4,690.5 L192.9,690.0 L194.4,690.2 L195.9,689.5 L197.4,690.2 L198.9,690.2 L200.4,690.6 L201.9,690.4 L203.4,689.7 L204.9,689.9 L206.4,690.2 L207.9,689.4 L209.4,690.0 L210.9,689.6 L212.4,689.5 L213.9,689.5 L215.4,690.3 L216.9,689.6 L218.4,689.7 L219.9,689.9 L221.5,690.4 L223.0,689.5 L224.5,689.9 L226.0,690.1 L227.5,690.5 L229.0,690.4 L230.5,690.4 L232.0,689.7 L233.5,689.9 L235.0,689.8 L235.0,726.0 L236.8,725.9 L238.5,725.5 L240.2,724.2 L242.0,723.7 L242.0,651.5 L243.3,651.2 L244.6,651.2 L245.9,651.5 L247.2,651.6 L248.5,651.3 L248.5,724.0 L249.8,723.5 L251.1,723.9 L252.3,723.9 L253.6,724.1 L253.6,651.5 L254.9,652.0 L256.2,651.7 L257.5,651.5 L258.8,651.6 L260.1,651.7 L260.1,723.6 L261.4,723.1 L262.7,724.0 L263.9,723.8 L265.2,723.9 L265.2,651.5 L266.5,651.8 L267.8,651.4 L269.1,651.4 L270.4,651.1 L271.7,651.6 L271.7,723.1 L273.0,722.7 L274.3,722.7 L275.6,722.8 L276.8,722.8 L276.8,651.5 L278.1,651.3 L279.4,651.1 L280.7,651.0 L282.0,651.2 L283.3,651.1 L283.3,722.7 L284.6,722.5 L285.9,722.2 L287.2,723.0 L288.5,722.8 L288.5,651.5 L289.8,651.1 L291.1,651.3 L292.4,651.3 L293.7,651.4 L295.0,651.1 L295.0,722.2 L296.2,722.6 L297.5,722.7 L298.8,722.2 L300.1,722.2 L300.1,651.5 L301.4,651.1 L302.7,651.1 L304.0,651.3 L305.3,651.3 L306.6,651.8 L306.6,721.8 L307.8,721.4 L309.1,721.3 L310.4,722.2 L311.7,721.8 L311.7,651.5 L313.0,651.1 L314.3,651.5 L315.6,651.0 L316.9,651.5 L318.2,652.0 L318.2,721.3 L319.5,721.7 L320.7,721.5 L322.0,721.1 L323.3,721.2 L323.3,651.5 L324.6,651.2 L325.9,651.8 L327.2,651.5 L328.5,651.8 L329.8,651.3 L329.8,720.9 L331.1,720.6 L332.3,721.2 L333.6,721.4 L334.9,721.2 L334.9,651.5 L336.2,651.8 L337.5,651.8 L338.8,651.7 L340.1,651.2 L341.4,651.5 L341.4,720.5 L342.7,720.3 L344.0,720.0 L345.2,720.0 L346.5,720.2 L346.5,651.5 L347.8,651.3 L349.1,651.7 L350.4,652.0 L351.7,651.4 L353.0,651.9 L353.0,720.0 L354.3,720.5 L355.6,720.5 L356.9,719.9 L358.1,719.7 L358.1,651.5 L359.4,651.2 L360.7,651.2 L362.0,651.2 L363.3,651.6 L364.6,651.9 L364.6,719.6 L365.9,719.9 L367.2,719.5 L368.5,719.7 L369.7,719.9 L369.7,651.5 L371.0,651.1 L372.3,651.7 L373.6,651.9 L374.9,651.8 L376.2,651.8 L376.2,719.1 L377.5,719.1 L378.8,718.8 L380.1,719.4 L381.4,719.0 L381.4,651.5 L382.7,651.8 L384.0,652.0 L385.3,651.4 L386.6,651.4 L387.9,651.9 L387.9,718.7 L389.1,718.9 L390.4,718.3 L391.7,718.3 L393.0,718.3 L393.0,651.5 L394.3,651.9 L395.6,651.8 L396.9,651.1 L398.2,651.8 L399.5,652.0 L399.5,718.5 L400.7,718.7 L402.0,718.4 L403.3,718.5 L404.6,718.1 L404.6,651.5 L405.9,651.0 L407.2,652.0 L408.5,651.6 L409.8,651.5 L411.1,651.9 L411.1,718.5 L412.4,718.4 L413.6,718.9 L414.9,718.8 L416.2,718.2 L416.2,651.5 L417.5,651.3 L418.8,651.3 L420.1,651.2 L421.4,651.6 L422.7,651.3 L422.7,718.5 L424.0,718.4 L425.3,718.1 L426.5,718.9 L427.8,718.4 L427.8,651.5 L429.1,651.5 L430.4,651.6 L431.7,651.9 L433.0,651.4 L434.3,651.9 L434.3,718.5 L435.6,718.5 L436.9,718.5 L438.1,718.5 L439.4,718.0 L439.4,651.5 L440.7,651.4 L442.0,651.2 L443.3,651.0 L444.6,651.8 L445.9,651.2 L445.9,718.5 L447.2,718.5 L448.5,718.7 L449.8,718.6 L451.0,718.3 L451.0,651.5 L452.3,651.5 L453.6,651.6 L454.9,651.8 L456.2,651.1 L457.5,651.6 L457.5,718.5 L458.8,718.2 L460.1,718.3 L461.4,718.8 L462.6,718.5 L462.6,651.5 L463.9,651.6 L465.2,651.8 L466.5,651.9 L467.8,651.4 L469.1,651.6 L469.1,718.5 L470.4,718.5 L471.7,718.5 L473.0,718.7 L474.3,718.5 L474.3,651.5 L475.6,651.5 L476.9,651.5 L478.2,651.9 L479.5,651.7 L480.8,651.9 L480.8,718.5 L482.0,718.9 L483.3,718.3 L484.6,718.6 L485.9,718.9 L485.9,651.5 L487.2,651.8 L488.5,651.1 L489.8,651.1 L491.1,651.4 L492.4,651.1 L492.4,718.5 L493.7,718.2 L494.9,718.1 L496.2,718.7 L497.5,718.8 L497.5,651.5 L498.8,651.9 L500.1,651.2 L501.4,651.7 L502.7,651.7 L504.0,651.1 L504.0,718.5 L505.3,718.9 L506.5,719.0 L507.8,718.2 L509.1,719.0 L509.1,651.5 L510.4,651.4 L511.7,651.5 L513.0,652.0 L514.3,651.8 L515.6,651.2 L515.6,718.5 L516.9,718.4 L518.2,718.5 L519.4,718.3 L520.7,718.2 L520.7,651.5 L522.0,651.3 L523.3,651.7 L524.6,651.0 L525.9,651.6 L527.2,651.4 L527.2,718.5 L528.5,718.0 L529.8,718.3 L531.0,718.6 L532.3,718.5 L532.3,651.5 L533.6,651.1 L534.9,652.0 L536.2,651.8 L537.5,652.0 L538.8,651.1 L538.8,718.5 L540.1,718.3 L541.4,718.0 L542.7,718.8 L543.9,718.3 L543.9,651.5 L545.2,651.1 L546.5,651.4 L547.8,651.9 L549.1,651.8 L550.4,651.3 L550.4,718.5 L551.7,718.1 L553.0,718.9 L554.3,718.6 L555.5,718.7 L555.5,651.5 L556.8,651.1 L558.1,651.1 L559.5,651.7 L560.8,651.4 L562.1,651.1 L562.1,718.5 L563.3,718.9 L564.6,718.6 L565.9,718.8 L567.2,718.1 L567.2,651.5 L568.5,651.9 L569.8,651.1 L571.1,651.9 L572.4,651.5 L573.7,651.3 L573.7,718.5 L574.9,718.6 L576.2,718.9 L577.5,718.3 L578.8,718.1 L578.8,651.5 L580.1,651.5 L581.4,651.2 L582.7,651.1 L584.0,651.2 L585.3,651.1 L585.3,718.5 L586.6,718.2 L587.8,718.3 L589.1,718.3 L590.4,718.8 L590.4,651.5 L591.7,651.3 L593.0,651.5 L594.3,651.2 L595.6,651.3 L596.9,651.0 L596.9,718.5 L598.2,718.3 L599.4,718.0 L600.7,718.7 L602.0,718.6 L602.0,651.0 L603.5,650.9 L605.1,651.3 L606.6,652.0 L608.1,651.4 L609.7,652.3 L611.2,652.1 L612.7,652.3 L614.2,652.8 L615.8,652.6 L617.3,652.9 L618.8,653.3 L620.4,653.7 L621.9,653.3 L623.4,654.0 L625.0,654.0 L626.5,654.1 L626.5,718.0 L628.0,717.8 L629.6,717.6 L631.1,717.2 L632.6,717.1 L634.2,716.9 L635.7,717.4 L637.2,716.8 L638.8,716.6 L640.3,716.4 L641.8,717.0 L643.4,716.9 L644.9,716.6 L646.4,716.0 L648.0,715.9 L649.5,715.8 L649.5,651.5 L650.9,651.5 L652.4,651.2 L653.8,651.4 L655.2,651.3 L655.2,718.5 L656.7,719.0 L658.1,719.0 L659.5,718.5 L661.0,718.2 L661.0,651.5 L662.4,652.0 L663.8,651.3 L665.3,651.4 L666.7,651.0 L666.7,718.5 L668.1,718.4 L669.6,718.5 L671.0,718.5 L672.5,718.2 L672.5,651.5 L673.9,651.5 L675.3,651.0 L676.8,651.3 L678.2,651.1 L678.2,718.5 L679.6,718.4 L681.1,718.0 L682.5,718.0 L683.9,718.3 L683.9,651.5 L685.4,651.2 L686.8,651.6 L688.2,651.5 L689.7,651.8 L689.7,718.5 L691.1,718.7 L692.5,718.7 L694.0,718.9 L695.4,718.4 L695.4,651.5 L696.8,651.3 L698.3,652.0 L699.7,651.1 L701.1,651.7 L701.1,718.5 L702.6,718.6 L704.0,718.0 L705.4,718.8 L706.9,718.9 L706.9,651.5 L708.3,651.6 L709.7,651.7 L711.2,651.8 L712.6,651.1 L712.6,718.5 L714.0,718.5 L715.5,718.5 L716.9,718.8 L718.4,718.8 L718.4,651.5 L719.8,651.8 L721.2,651.6 L722.7,651.9 L724.1,651.7 L724.1,718.5 L725.5,718.7 L727.0,718.2 L728.4,718.0 L729.8,718.1 L729.8,651.5 L731.3,651.4 L732.7,651.1 L734.1,651.8 L735.6,651.6 L735.6,718.5 L737.0,718.6 L738.4,718.6 L739.9,718.7 L741.3,718.5 L741.3,651.5 L742.7,651.0 L744.2,651.8 L745.6,651.7 L747.0,651.5 L747.0,718.5 L748.5,718.5 L749.9,718.7 L751.3,718.1 L752.8,718.7 L752.8,651.5 L754.2,651.3 L755.6,651.1 L757.1,651.3 L758.5,651.7 L758.5,718.5 L759.9,718.2 L761.4,718.7 L762.8,719.0 L764.2,718.5 L764.2,651.5 L765.7,651.4 L767.1,651.5 L768.6,651.7 L770.0,651.8 L770.0,718.5 L771.4,718.6 L772.9,718.6 L774.3,718.1 L775.7,718.1 L775.7,651.5 L777.2,651.3 L778.6,651.7 L780.0,651.3 L781.5,651.6 L781.5,718.5 L782.9,718.0 L784.3,718.1 L785.8,718.3 L787.2,718.7 L787.2,651.5 L788.6,651.7 L790.1,651.7 L791.5,651.3 L792.9,651.5 L792.9,718.5 L794.4,718.5 L795.8,718.5 L797.2,718.1 L798.7,718.9 L798.7,651.5 L800.1,651.2 L801.5,652.0 L803.0,651.9 L804.4,651.0 L804.4,718.5 L805.8,718.5 L807.3,718.8 L808.7,719.0 L810.1,718.4 L810.1,651.5 L811.6,651.3 L813.0,651.2 L814.5,651.9 L815.9,651.2 L815.9,718.5 L817.3,718.6 L818.8,718.1 L820.2,718.5 L821.6,719.0 L821.6,651.5 L823.1,651.1 L824.5,651.8 L825.9,651.5 L827.4,651.9 L827.4,718.5 L828.8,718.7 L830.2,718.2 L831.7,718.9 L833.1,718.5 L833.1,651.5 L834.5,651.0 L836.0,651.0 L837.4,651.5 L838.8,651.5 L838.8,718.5 L840.1,718.3 L841.4,718.1 L842.7,718.3 L843.9,718.3 L845.2,718.8 L846.5,718.0 L847.8,718.8 L849.0,718.8 L850.3,718.1 L850.3,651.5 L851.6,651.9 L852.9,651.7 L854.1,651.9 L855.4,651.3 L856.7,651.4 L858.0,651.4 L859.2,652.0 L860.5,651.6 L861.8,651.4 L861.8,718.5 L863.2,718.4 L864.7,718.3 L866.1,718.0 L867.5,718.1 L867.5,651.5 L869.0,651.8 L870.4,651.3 L871.8,651.9 L873.3,651.2 L873.3,718.5 L874.7,718.3 L876.1,718.5 L877.6,718.2 L879.0,718.4 L879.0,651.5 L880.4,652.0 L881.9,651.9 L883.3,651.8 L884.7,651.6 L884.7,718.5 L886.2,718.9 L887.6,718.9 L889.0,718.5 L890.5,718.7 L890.5,651.5 L891.9,651.0 L893.3,651.7 L894.8,651.5 L896.2,651.8 L896.2,718.5 L897.6,718.6 L899.1,718.3 L900.5,718.0 L902.0,718.9 L902.0,651.5 L903.4,651.1 L904.8,651.5 L906.3,651.3 L907.7,651.3 L907.7,718.5 L909.1,718.7 L910.6,719.0 L912.0,718.3 L913.4,718.7 L913.4,651.5 L914.9,651.3 L916.3,651.6 L917.7,651.4 L919.2,651.2 L919.2,718.5 L920.4,718.2 L921.7,718.2 L923.0,718.9 L924.3,718.5 L925.5,718.2 L926.8,718.9 L928.1,719.0 L929.4,718.4 L930.6,718.1 L930.6,651.5 L932.1,651.2 L933.5,651.1 L934.9,651.3 L936.4,651.1 L936.4,718.5 L937.8,718.2 L939.2,718.3 L940.7,718.6 L942.1,718.9 L942.1,651.5 L943.5,651.7 L945.0,651.4 L946.4,651.4 L947.8,651.5 L947.8,718.5 L949.3,718.4 L950.7,718.3 L952.2,718.1 L953.6,718.3 L953.6,651.5 L955.0,652.0 L956.5,651.1 L957.9,651.5 L959.3,651.6 L959.3,718.5 L960.8,718.9 L962.2,718.2 L963.6,718.3 L965.1,718.2 L965.1,651.5 L966.5,651.4 L967.9,651.4 L969.4,652.0 L970.8,651.8 L970.8,718.5 L972.2,718.9 L973.7,718.0 L975.1,718.0 L976.5,718.7 L976.5,651.5 L978.0,651.9 L979.4,651.5 L980.8,651.6 L982.3,651.0 L982.3,718.5 L983.7,718.4 L985.1,718.9 L986.6,718.8 L988.0,718.9 L988.0,651.5 L989.4,652.0 L990.9,651.2 L992.3,651.1 L993.8,651.2 L993.8,718.5 L995.2,718.5 L996.6,718.7 L998.1,718.9 L999.5,718.7 L999.5,651.5 L1000.9,651.6 L1002.4,651.8 L1003.8,651.5 L1005.2,651.6 L1005.2,718.5 L1006.7,718.0 L1008.1,718.8 L1009.5,718.2 L1011.0,718.9 L1011.0,651.5 L1012.4,651.6 L1013.8,651.3 L1015.3,651.1 L1016.7,651.3 L1016.7,718.5 L1018.1,718.6 L1019.6,718.7 L1021.0,718.1 L1022.4,718.1 L1022.4,651.5 L1023.9,651.5 L1025.3,651.6 L1026.7,651.4 L1028.2,651.2 L1028.2,718.5 L1029.6,718.6 L1031.0,718.0 L1032.5,718.3 L1033.9,718.5 L1033.9,651.5 L1035.3,652.0 L1036.8,651.6 L1038.2,651.9 L1039.7,651.5 L1039.7,718.5 L1041.1,718.2 L1042.5,718.2 L1044.0,719.0 L1045.4,718.7 L1045.4,651.5 L1046.8,651.3 L1048.3,651.0 L1049.7,651.5 L1051.1,651.7 L1051.1,718.5 L1052.6,718.4 L1054.0,718.3 L1055.4,718.7 L1056.9,718.9 L1056.9,651.5 L1058.3,651.2 L1059.7,651.0 L1061.2,651.3 L1062.6,651.4 L1062.6,718.5 L1064.0,718.7 L1065.5,718.2 L1066.9,718.8 L1068.3,718.7 L1068.3,651.5 L1069.8,651.5 L1071.2,651.2 L1072.6,652.0 L1074.1,651.3 L1074.1,718.5 L1075.5,718.8 L1076.9,718.2 L1078.4,718.2 L1079.8,718.8 L1079.8,651.5 L1081.2,651.3 L1082.7,652.0 L1084.1,651.5 L1085.5,651.2 L1085.5,718.5 L1087.0,718.2 L1088.4,718.4 L1089.9,718.7 L1091.3,718.9 L1091.3,651.5 L1092.7,651.1 L1094.2,651.4 L1095.6,651.2 L1097.0,652.0 L1097.0,718.5 L1098.3,718.1 L1099.6,718.1 L1100.9,718.1 L1102.1,718.4 L1103.4,718.9 L1104.7,718.9 L1106.0,718.7 L1107.2,719.0 L1108.5,718.9 L1108.5,651.0 L1110.0,651.0 L1111.6,651.1 L1113.1,652.0 L1114.6,652.0 L1116.2,651.5 L1117.7,652.4 L1119.2,652.3 L1120.8,652.5 L1122.3,652.6 L1123.8,652.7 L1125.4,652.7 L1126.9,653.2 L1128.4,653.5 L1130.0,654.3 L1131.5,653.6 L1131.5,718.0 L1133.1,718.3 L1134.6,717.4 L1136.2,717.4 L1137.8,717.8 L1139.4,717.6 L1140.9,717.1 L1142.5,716.5 L1144.1,716.8 L1145.6,716.6 L1147.2,717.0 L1148.8,716.1 L1150.4,716.1 L1151.9,716.5 L1153.5,715.5 L1153.5,683.0 L1155.5,683.1 L1157.5,683.7 L1159.6,683.8 L1161.6,683.2 L1163.6,683.4 L1165.7,683.6 L1167.7,684.6 L1169.7,684.2 L1171.7,684.8 L1173.8,685.1 L1175.8,684.8 L1177.8,684.9 L1179.8,685.7 L1181.8,685.6 L1183.9,685.4 L1185.9,686.0 L1187.9,685.8 L1190.0,685.9 L1192.0,685.8 L1194.0,686.8 L1196.0,687.1 L1198.0,687.0 L1200.1,687.5 L1202.1,686.7 L1204.1,687.1 L1206.2,687.5 L1208.2,688.2 L1210.2,688.4 L1212.2,688.0 L1214.2,688.0 L1216.3,688.4 L1218.3,688.6 L1220.3,689.2 L1222.3,688.6 L1224.4,689.4 L1226.4,689.5 L1228.4,689.8 L1230.5,689.9 L1232.5,689.9 L1234.5,689.8 L1234.5,738.0 L1236.3,736.8 L1238.2,735.9 L1240.0,735.3 L1240.0,646.0 L1241.3,645.6 L1242.6,645.7 L1243.9,646.3 L1245.2,645.7 L1246.5,645.6 L1246.5,733.0 L1247.7,732.5 L1249.0,733.1 L1250.3,732.8 L1251.5,733.5 L1251.5,646.0 L1252.8,646.4 L1254.1,646.5 L1255.4,645.8 L1256.7,645.6 L1258.0,645.6 L1258.0,732.3 L1259.3,732.3 L1260.5,732.5 L1261.8,732.2 L1263.1,732.0 L1263.1,646.0 L1264.4,645.9 L1265.7,646.1 L1266.9,646.2 L1268.2,646.2 L1269.5,646.3 L1269.5,731.6 L1270.8,731.7 L1272.1,731.2 L1273.3,731.9 L1274.6,731.4 L1274.6,646.0 L1275.9,646.1 L1277.2,645.9 L1278.5,646.2 L1279.8,645.7 L1281.1,645.7 L1281.1,730.9 L1282.3,730.6 L1283.6,730.5 L1284.9,731.2 L1286.1,730.9 L1286.1,646.0 L1287.4,645.8 L1288.7,645.9 L1290.0,646.5 L1291.3,646.0 L1292.6,645.7 L1292.6,730.1 L1293.9,730.5 L1295.1,730.3 L1296.4,730.6 L1297.7,729.7 L1297.7,646.0 L1299.0,646.0 L1300.3,646.3 L1301.6,646.3 L1302.8,646.4 L1304.1,645.5 L1304.1,729.4 L1305.4,729.2 L1306.7,729.0 L1307.9,729.1 L1309.2,729.9 L1309.2,646.0 L1310.5,646.1 L1311.8,646.4 L1313.1,645.9 L1314.4,646.4 L1315.7,645.9 L1315.7,728.7 L1316.9,728.5 L1318.2,729.0 L1319.5,729.2 L1320.7,728.3 L1320.7,646.0 L1322.0,646.1 L1323.3,646.1 L1324.6,645.7 L1325.9,645.9 L1327.2,645.6 L1327.2,728.0 L1328.5,727.7 L1329.7,727.8 L1331.0,728.1 L1332.3,728.2 L1332.3,646.0 L1333.6,645.7 L1334.9,645.5 L1336.2,645.8 L1337.5,646.2 L1338.7,645.7 L1338.7,727.3 L1340.0,727.1 L1341.3,727.0 L1342.6,727.6 L1343.8,727.3 L1343.8,646.0 L1345.1,645.6 L1346.4,645.6 L1347.7,645.9 L1349.0,646.1 L1350.3,646.1 L1350.3,726.6 L1351.6,726.2 L1352.8,726.2 L1354.1,726.8 L1355.4,726.5 L1355.4,646.0 L1356.6,645.8 L1357.9,645.8 L1359.2,646.5 L1360.5,645.8 L1361.8,646.1 L1361.8,725.9 L1363.1,725.7 L1364.4,725.8 L1365.6,726.2 L1366.9,726.4 L1366.9,646.0 L1368.2,645.9 L1369.5,645.7 L1370.8,646.2 L1372.1,645.7 L1373.4,645.5 L1373.4,725.1 L1374.6,725.5 L1375.9,725.1 L1377.2,725.5 L1378.4,725.0 L1378.4,646.0 L1379.7,646.4 L1381.0,646.0 L1382.3,645.7 L1383.6,645.5 L1384.9,646.1 L1384.9,725.0 L1386.2,725.1 L1387.4,725.4 L1388.7,724.6 L1390.0,725.1 L1390.0,646.0 L1391.3,645.9 L1392.5,646.0 L1393.8,645.6 L1395.1,645.8 L1396.4,646.0 L1396.4,725.0 L1397.7,725.4 L1399.0,724.6 L1400.2,725.0 L1401.5,725.3 L1401.5,646.0 L1402.8,646.5 L1404.1,645.7 L1405.4,645.6 L1406.7,646.4 L1408.0,646.5 L1408.0,725.0 L1409.2,725.0 L1410.5,724.6 L1411.8,725.4 L1413.0,724.9 L1413.0,646.0 L1414.3,646.4 L1415.6,646.1 L1416.9,646.3 L1418.2,645.7 L1419.5,646.3 L1419.5,725.0 L1420.8,724.7 L1422.0,724.9 L1423.3,725.3 L1424.6,725.3 L1424.6,646.0 L1425.9,645.7 L1427.2,645.7 L1428.4,645.9 L1429.7,646.0 L1431.0,645.9 L1431.0,725.0 L1432.3,724.6 L1433.6,724.7 L1434.8,725.2 L1436.1,725.4 L1436.1,646.0 L1437.4,645.5 L1438.7,646.1 L1440.0,646.3 L1441.3,645.5 L1442.6,646.3 L1442.6,725.0 L1443.8,724.6 L1445.1,725.1 L1446.4,725.1 L1447.6,725.1 L1447.6,646.0 L1448.9,645.8 L1450.2,645.9 L1451.5,646.1 L1452.8,645.9 L1454.1,646.2 L1454.1,725.0 L1455.4,724.9 L1456.6,724.9 L1457.9,724.5 L1459.2,725.1 L1459.2,646.0 L1460.5,646.0 L1461.8,645.7 L1463.1,646.3 L1464.3,646.3 L1465.6,646.0 L1465.6,725.0 L1466.9,724.7 L1468.2,725.0 L1469.4,724.6 L1470.7,724.6 L1470.7,646.0 L1472.0,645.9 L1473.3,645.6 L1474.6,645.9 L1475.9,646.0 L1477.2,645.5 L1477.2,725.0 L1478.4,725.1 L1479.7,724.6 L1481.0,725.2 L1482.2,725.3 L1482.2,646.0 L1483.5,646.0 L1484.8,645.6 L1486.1,646.0 L1487.4,645.9 L1488.7,646.5 L1488.7,725.0 L1490.0,724.6 L1491.2,725.4 L1492.5,725.5 L1493.8,725.2 L1493.8,646.0 L1495.1,646.3 L1496.4,645.7 L1497.7,646.5 L1499.0,646.0 L1500.2,646.5 L1500.2,725.0 L1501.5,725.4 L1502.8,724.7 L1504.1,725.3 L1505.3,725.4 L1505.3,646.0 L1506.6,645.6 L1507.9,645.9 L1509.2,646.3 L1510.5,645.7 L1511.8,646.4 L1511.8,725.0 L1513.1,724.8 L1514.3,725.3 L1515.6,724.6 L1516.9,725.0 L1516.9,646.0 L1518.1,646.4 L1519.4,645.7 L1520.7,645.8 L1522.0,646.0 L1523.3,645.8 L1523.3,725.0 L1524.6,724.5 L1525.9,724.7 L1527.1,724.7 L1528.4,725.4 L1528.4,646.0 L1529.7,646.2 L1531.0,646.4 L1532.3,645.7 L1533.6,646.3 L1534.9,645.6 L1534.9,725.0 L1536.1,725.0 L1537.4,725.1 L1538.7,724.9 L1539.9,725.4 L1539.9,646.0 L1541.2,646.1 L1542.5,646.1 L1543.8,646.4 L1545.1,645.6 L1546.4,646.5 L1546.4,725.0 L1547.7,725.1 L1548.9,724.9 L1550.2,725.3 L1551.5,724.8 L1551.5,646.0 L1552.8,646.5 L1554.0,646.1 L1555.3,645.9 L1556.6,646.3 L1557.9,645.9 L1557.9,725.0 L1559.2,724.7 L1560.5,725.2 L1561.7,724.5 L1563.0,725.3 L1563.0,645.0 L1564.5,644.8 L1566.0,645.3 L1567.5,645.7 L1569.0,645.3 L1570.5,645.5 L1572.0,645.2 L1573.5,644.9 L1575.0,645.0 L1576.5,645.2 L1578.0,645.7 L1579.5,645.6 L1581.0,645.7 L1582.5,646.2 L1584.0,645.5 L1585.5,645.6 L1587.0,646.1 L1588.5,645.5 L1588.5,722.0 L1590.0,721.7 L1591.5,722.2 L1593.0,722.1 L1594.5,722.5 L1596.0,722.6 L1597.5,723.1 L1599.0,723.3 L1600.5,723.0 L1602.0,723.6 L1603.5,723.6 L1605.0,723.5 L1606.5,724.4 L1608.0,723.9 L1609.5,724.0 L1611.0,724.1 L1612.5,724.8 L1614.0,725.2 L1615.5,725.3 L1615.5,646.0 L1616.8,645.9 L1618.1,645.8 L1619.5,645.5 L1620.8,646.1 L1620.8,725.0 L1622.1,725.1 L1623.3,724.9 L1624.6,725.1 L1625.9,724.9 L1627.2,725.4 L1627.2,646.0 L1628.5,646.2 L1629.8,645.7 L1631.2,646.4 L1632.5,645.5 L1632.5,725.0 L1633.8,725.0 L1635.1,724.9 L1636.4,724.7 L1637.6,724.6 L1638.9,725.3 L1638.9,646.0 L1640.2,645.5 L1641.6,646.1 L1642.9,646.4 L1644.2,645.6 L1644.2,725.0 L1645.5,724.7 L1646.8,725.1 L1648.1,725.0 L1649.4,725.1 L1650.6,725.3 L1650.6,646.0 L1652.0,645.7 L1653.3,645.8 L1654.6,645.8 L1655.9,645.5 L1655.9,725.0 L1657.2,725.4 L1658.5,725.3 L1659.8,725.2 L1661.1,724.5 L1662.4,725.3 L1662.4,646.0 L1663.7,646.2 L1665.0,646.0 L1666.3,646.2 L1667.6,646.0 L1667.6,725.0 L1668.9,724.7 L1670.2,724.6 L1671.5,724.7 L1672.8,724.5 L1674.1,724.8 L1674.1,646.0 L1675.4,646.2 L1676.7,646.2 L1678.0,646.3 L1679.3,646.2 L1679.3,725.0 L1680.6,724.8 L1681.9,725.1 L1683.2,724.9 L1684.5,725.3 L1685.8,725.0 L1685.8,646.0 L1687.1,645.8 L1688.4,646.1 L1689.7,646.5 L1691.1,645.7 L1691.1,725.0 L1692.3,725.4 L1693.6,724.5 L1694.9,724.8 L1696.2,724.7 L1697.5,725.2 L1697.5,645.0 L1699.1,645.5 L1700.6,645.4 L1702.2,645.0 L1703.8,645.6 L1705.3,645.2 L1706.9,645.1 L1708.5,645.9 L1710.0,645.7 L1711.6,645.8 L1713.2,645.8 L1714.7,646.2 L1716.3,645.8 L1717.9,646.2 L1719.4,646.1 L1721.0,646.4 L1721.0,725.0 L1722.5,724.9 L1724.1,725.1 L1725.6,724.9 L1727.1,724.5 L1728.7,724.4 L1730.2,724.7 L1731.8,724.1 L1733.3,724.8 L1734.8,724.0 L1736.4,723.8 L1737.9,723.8 L1739.4,724.6 L1741.0,723.9 L1742.5,723.6 L1742.5,680 L1744.5,679.8 L1746.5,680.1 L1748.5,681.2 L1750.5,681.4 L1752.5,681.8 L1754.5,682.1 L1756.5,681.5 L1758.5,682.4 L1760.5,682.3 L1762.5,683.1 L1764.5,683.3 L1766.5,683.6 L1768.5,682.8 L1770.5,683.9 L1772.5,684.2 L1774.5,684.4 L1776.5,683.5 L1778.5,683.8 L1780.5,683.8 L1782.5,683.9 L1784.5,685.0 L1786.5,685.1 L1788.5,685.0 L1790.5,685.4 L1792.5,685.2 L1794.5,684.9 L1796.5,684.8 L1798.5,684.9 L1800.5,685.8 L1802.5,685.3 L1804.5,685.5 L1806.5,685.7 L1808.5,685.3 L1810.5,685.7 L1812.5,685.8 L1814.5,686.4 L1816.5,686.0 L1818.5,686.1 L1820.5,686.9 L1822.5,686.4 L1824.5,686.9 L1826.5,686.7 L1828.5,686.0 L1830.5,686.5 L1832.5,686.6 L1834.5,687.1 L1836.5,686.6 L1838.5,687.1 L1840.5,686.9 L1842.5,686.6 L1844.5,687.4 L1846.5,686.5 L1848.5,687.4 L1850.5,686.7 L1852.5,686.5 L1854.5,686.8 L1856.5,687.5 L1858.5,687.8 L1860.5,686.7 L1862.5,687.3 L1864.5,687.3 L1866.5,687.7 L1868.5,687.0 L1870.5,687.4 L1872.5,687.2 L1874.5,687.8 L1876.5,687.2 L1878.5,688.0 L1880.5,687.2 L1882.5,687.2 L1884.5,687.8 L1886.5,687.6 L1888.5,687.1 L1890.5,687.8 L1892.5,687.1 L1894.5,688.0 L1896.5,687.9 L1898.5,688.0 L1900.5,687.8" fill="none" stroke="#3cf43c" stroke-width="1.3"/>
<text x="83" y="53.5" font-size="14.5" fill="#00f000" text-anchor="end" font-weight="normal" >1.765 V</text>
<text x="83" y="87.5" font-size="14.5" fill="#00f000" text-anchor="end" font-weight="normal" >765 mV</text>
<text x="83" y="130.5" font-size="14.5" fill="#00f000" text-anchor="end" font-weight="normal" >-235 mV</text>
<text x="83" y="173.5" font-size="14.5" fill="#00f000" text-anchor="end" font-weight="normal" >-1.235 V</text>
<text x="83" y="216.5" font-size="14.5" fill="#00f000" text-anchor="end" font-weight="normal" >-2.235 V</text>
<text x="83" y="259.5" font-size="14.5" fill="#00f000" text-anchor="end" font-weight="normal" >-3.235 V</text>
<text x="83" y="302.5" font-size="14.5" fill="#00f000" text-anchor="end" font-weight="normal" >-4.235 V</text>
<text x="83" y="345.5" font-size="14.5" fill="#00f000" text-anchor="end" font-weight="normal" >-5.235 V</text>
<text x="83" y="379.5" font-size="14.5" fill="#00f000" text-anchor="end" font-weight="normal" >-6.235 V</text>
<text x="83" y="440.5" font-size="14.5" fill="#00f000" text-anchor="end" font-weight="normal" >823 mV</text>
<text x="83" y="474.5" font-size="14.5" fill="#00f000" text-anchor="end" font-weight="normal" >313 mV</text>
<text x="83" y="517.5" font-size="14.5" fill="#00f000" text-anchor="end" font-weight="normal" >-197 mV</text>
<text x="83" y="560.5" font-size="14.5" fill="#00f000" text-anchor="end" font-weight="normal" >-707 mV</text>
<text x="83" y="603.5" font-size="14.5" fill="#00f000" text-anchor="end" font-weight="normal" >-1.217 V</text>
<text x="83" y="646.5" font-size="14.5" fill="#00f000" text-anchor="end" font-weight="normal" >-1.727 V</text>
<text x="83" y="689.5" font-size="14.5" fill="#00f000" text-anchor="end" font-weight="normal" >-2.237 V</text>
<text x="83" y="732.5" font-size="14.5" fill="#00f000" text-anchor="end" font-weight="normal" >-2.747 V</text>
<text x="83" y="766" font-size="14.5" fill="#00f000" text-anchor="end" font-weight="normal" >-3.256 V</text>
<text x="88" y="399.5" font-size="14.5" fill="#00f000" text-anchor="start" font-weight="normal" >-68 ms</text>
<text x="269.8" y="399.5" font-size="14.5" fill="#00f000" text-anchor="middle" font-weight="normal" >132 ms</text>
<text x="451.1" y="399.5" font-size="14.5" fill="#00f000" text-anchor="middle" font-weight="normal" >332 ms</text>
<text x="632.4000000000001" y="399.5" font-size="14.5" fill="#00f000" text-anchor="middle" font-weight="normal" >532 ms</text>
<text x="813.7" y="399.5" font-size="14.5" fill="#00f000" text-anchor="middle" font-weight="normal" >732 ms</text>
<text x="995.0" y="399.5" font-size="14.5" fill="#00f000" text-anchor="middle" font-weight="normal" >932 ms</text>
<text x="1176.3000000000002" y="399.5" font-size="14.5" fill="#00f000" text-anchor="middle" font-weight="normal" >1.132 s</text>
<text x="1357.6000000000001" y="399.5" font-size="14.5" fill="#00f000" text-anchor="middle" font-weight="normal" >1.332 s</text>
<text x="1538.9" y="399.5" font-size="14.5" fill="#00f000" text-anchor="middle" font-weight="normal" >1.532 s</text>
<text x="1720.2" y="399.5" font-size="14.5" fill="#00f000" text-anchor="middle" font-weight="normal" >1.732 s</text>
<text x="1902" y="399.5" font-size="14.5" fill="#00f000" text-anchor="end" font-weight="normal" >1.932 s</text>
<text x="88" y="786.5" font-size="14.5" fill="#00f000" text-anchor="start" font-weight="normal" >929.609 ms</text>
<text x="451.1" y="786.5" font-size="14.5" fill="#00f000" text-anchor="middle" font-weight="normal" >929.6406 ms</text>
<text x="813.7" y="786.5" font-size="14.5" fill="#00f000" text-anchor="middle" font-weight="normal" >929.6722 ms</text>
<text x="1176.3000000000002" y="786.5" font-size="14.5" fill="#00f000" text-anchor="middle" font-weight="normal" >929.7038 ms</text>
<text x="1538.9" y="786.5" font-size="14.5" fill="#00f000" text-anchor="middle" font-weight="normal" >929.7354 ms</text>
<text x="1902" y="786.5" font-size="14.5" fill="#00f000" text-anchor="end" font-weight="normal" >929.767 ms</text>
<path d="M146,392 L150,384 L154,392 Z" fill="#00e600"/>
<path d="M82,777 L86,773 M82,777 L86,781 M82,777 L88,777" stroke="#00e600" stroke-width="1"/>
<rect x="68" y="100" width="20" height="12" fill="#00e600" stroke="none" stroke-width="1" rx="2"/>
<text x="72.5" y="110.5" font-size="11" fill="#000" text-anchor="start" font-weight="normal" >C4</text>
<line x1="80" y1="116.5" x2="88" y2="116.5" stroke="#00e600" stroke-width="1.5" />
<rect x="70" y="481" width="18" height="13" fill="#00e600" stroke="none" stroke-width="1" rx="2"/>
<text x="72" y="491.5" font-size="11" fill="#000" text-anchor="start" font-weight="normal" >Z4</text>
<line x1="80" y1="496.5" x2="88" y2="496.5" stroke="#00e600" stroke-width="1.5" />
</svg>
<div class="t" style="left:5px;top:810px;font-weight:bold">Measure</div>
<div class="t" style="left:0;top:810px;width:295px;text-align:right;color:#6e6e6e">P1:bitrate(Z1)</div>
<div class="t" style="left:0;top:810px;width:441px;text-align:right;color:#f0f0f0">P2:bitrate(Z4)</div>
<div class="t" style="left:0;top:810px;width:588px;text-align:right;color:#6e6e6e">P3:- - -</div>
<div class="t" style="left:0;top:810px;width:734px;text-align:right;color:#6e6e6e">P4:- - -</div>
<div class="t" style="left:0;top:810px;width:880px;text-align:right;color:#6e6e6e">P5:- - -</div>
<div class="t" style="left:0;top:810px;width:1026px;text-align:right;color:#6e6e6e">P6:- - -</div>
<div class="t" style="left:0;top:810px;width:1172px;text-align:right;color:#6e6e6e">P7:- - -</div>
<div class="t" style="left:0;top:810px;width:1318px;text-align:right;color:#6e6e6e">P8:- - -</div>
<div class="t" style="left:0;top:810px;width:1464px;text-align:right;color:#6e6e6e">P9:- - -</div>
<div class="t" style="left:0;top:810px;width:1609px;text-align:right;color:#6e6e6e">P10:- - -</div>
<div class="t" style="left:0;top:810px;width:1755px;text-align:right;color:#6e6e6e">P11:- - -</div>
<div class="t" style="left:0;top:810px;width:1901px;text-align:right;color:#6e6e6e">P12:- - -</div>
<div class="abs" style="left:3px;top:829px;width:1898px;height:1px;background:#7a7a7a"></div>
<div class="abs" style="left:3px;top:830px;width:1898px;height:19px;background:#1e1e1e"></div>
<div class="t" style="left:5px;top:830px">value</div>
<div class="t" style="left:0;top:830px;width:441px;text-align:right">2.01955337 Mbit/s</div>
<div class="t" style="left:5px;top:850px">status</div>
<svg class="abs" style="left:427px;top:852px" width="14" height="12"><path d="M2,6 L5.5,9.5 L12,2" fill="none" stroke="#00d000" stroke-width="2.4"/></svg>

<!-- table -->
<div class="abs" style="left:3px;top:869px;width:1876px;height:120px;border:1px solid #6a6a6a;border-right:1px solid #6a6a6a"></div>
<div class="abs" style="left:4px;top:909px;width:1876px;height:20px;background:#00a000"></div>
<div class="abs" style="left:203px;top:929px;width:1675px;height:40px;background:#2a2a2a"></div>
<div class="abs" style="left:203px;top:889px;width:100px;height:20px;background:#00f800"></div>
<div class="abs" style="left:203px;top:909px;width:100px;height:20px;background:#00f800"></div>
<div class="abs" style="left:203px;top:969px;width:100px;height:19px;background:#00f800"></div>
<svg class="abs" style="left:0;top:860px" width="1920" height="140">
 <g stroke="#9a9a9a" stroke-width="1" stroke-dasharray="1 1">
  <line x1="4" y1="29.5" x2="1878" y2="29.5"/>
  <line x1="4" y1="49.5" x2="1878" y2="49.5"/>
  <line x1="4" y1="69.5" x2="1878" y2="69.5"/>
  <line x1="4" y1="89.5" x2="1878" y2="89.5"/>
  <line x1="4" y1="109.5" x2="1878" y2="109.5"/>
  <line x1="103.5" y1="10" x2="103.5" y2="128"/>
  <line x1="203.5" y1="10" x2="203.5" y2="128"/>
  <line x1="303.5" y1="10" x2="303.5" y2="128"/>
  <line x1="503.5" y1="10" x2="503.5" y2="49"/>
  <line x1="503.5" y1="109" x2="503.5" y2="128"/>
  <line x1="403.5" y1="69" x2="403.5" y2="109"/>
  <line x1="503.5" y1="69" x2="503.5" y2="109"/>
  <line x1="753.5" y1="69" x2="753.5" y2="109"/>
 </g>
 <path d="M194,18 L204,18 L199,23 Z" fill="#8a8a8a"/>
 <path d="M294,18 L304,18 L299,23 Z" fill="#8a8a8a"/>
 <path d="M11.5,33.5 L11.5,42.5 L16,38 Z" fill="none" stroke="#e0e0e0" stroke-width="1"/>
 <path d="M11.5,113.5 L11.5,122.5 L16,118 Z" fill="none" stroke="#e0e0e0" stroke-width="1"/>
 <path d="M9,63 L17,55 L17,63 Z" fill="#f0f0f0"/>
 <path d="M391,83 L399,75 L399,83 Z" fill="#e0e0e0"/>
</svg>
<div class="t" style="left:5px;top:870px;font-weight:bold">Index</div>
<div class="t" style="left:105px;top:870px;font-weight:bold">Time</div>
<div class="t" style="left:205px;top:870px;font-weight:bold">Protocol</div>
<div class="t" style="left:305px;top:870px;font-weight:bold">Message</div>
<div class="t" style="left:505px;top:870px;font-weight:bold">Data</div>

<div class="t" style="left:21px;top:890px">1</div>
<div class="t" style="left:105px;top:890px">929.658 ms</div>
<div class="t" style="left:205px;top:890px;color:#000">DPAux</div>
<div class="t" style="left:305px;top:890px">Request</div>
<div class="t" style="left:505px;top:890px">0x01</div>

<div class="t" style="left:21px;top:910px">2</div>
<div class="t" style="left:105px;top:910px">929.658 ms</div>
<div class="t" style="left:205px;top:910px;color:#000">DPAux</div>
<div class="t" style="left:305px;top:910px">Request</div>
<div class="t" style="left:505px;top:910px">0x01</div>

<div class="t" style="left:205px;top:930px;font-weight:bold">PacketType</div>
<div class="t" style="left:305px;top:930px;font-weight:bold">Comma…</div>
<div class="t" style="left:405px;top:930px;font-weight:bold">Command</div>
<div class="t" style="left:505px;top:930px;font-weight:bold">DPConfigReg / I2C Address</div>
<div class="t" style="left:755px;top:930px;font-weight:bold">Details</div>
<div class="t" style="left:205px;top:950px">Request</div>
<div class="t" style="left:305px;top:950px">Native</div>
<div class="t" style="left:405px;top:950px">Write</div>
<div class="t" style="left:505px;top:950px">0x00600</div>
<div class="t" style="left:755px;top:950px">Request to Write 1 Byte(s) at Addr 0x00600</div>

<div class="t" style="left:21px;top:970px">3</div>
<div class="t" style="left:105px;top:970px">929.742 ms</div>
<div class="t" style="left:205px;top:970px;color:#000">DPAux</div>
<div class="t" style="left:305px;top:970px">Reply</div>

<!-- scrollbar -->
<div class="abs" style="left:1880px;top:869px;width:32px;height:124px;background:#2a2a2a;border:1px solid #6a6a6a"></div>
<div class="abs" style="left:1881px;top:870px;width:30px;height:29px;background:#555;border:2px solid #6e6e6e"></div>
<div class="abs" style="left:1881px;top:901px;width:30px;height:14px;background:#555;border:2px solid #6e6e6e"></div>
<div class="abs" style="left:1881px;top:962px;width:30px;height:30px;background:#555;border:2px solid #6e6e6e"></div>
<svg class="abs" style="left:1880px;top:869px" width="32" height="122">
 <path d="M3,20 L16,9 L29,20 Z" fill="#fff"/>
 <path d="M3,102 L16,113 L29,102 Z" fill="#fff"/>
</svg>

<!-- status bar -->
<div class="abs" style="left:4px;top:994px;width:122px;height:62px;background:#4a4a4a"></div>
<div class="abs" style="left:4px;top:994px;width:122px;height:20px;background:#00f800"></div>
<div class="t" style="left:8px;top:994px;color:#000">C4</div>
<div class="abs" style="left:77px;top:995px;width:46px;height:18px;background:#000;border-radius:2px"></div>
<div class="t" style="left:81px;top:994px;color:#00d000;font-size:14px">DC1M</div>
<div class="t" style="left:0;top:1014px;width:124px;text-align:right">1.00 V/div</div>
<div class="t" style="left:0;top:1032px;width:124px;text-align:right">2.2350 V ofst</div>

<div class="abs" style="left:128px;top:993px;width:124px;height:63px;background:#2a4862;border:2px solid #1e8ef0"></div>
<div class="abs" style="left:130px;top:995px;width:120px;height:19px;background:#00f800"></div>
<div class="t" style="left:132px;top:994px;color:#000">Z4</div>
<div class="t" style="left:0;top:994px;width:249px;text-align:right;color:#000">zoom(C4)</div>
<div class="t" style="left:0;top:1015px;width:249px;text-align:right">510 mV/div</div>
<div class="t" style="left:0;top:1033px;width:249px;text-align:right">15.8 µs/div</div>

<div class="abs" style="left:254px;top:994px;width:122px;height:62px;border:1px dashed #e0e0e0"></div>
<svg class="abs" style="left:305px;top:1016px" width="18" height="18"><path d="M9,2 V16 M2,9 H16" stroke="#fff" stroke-width="2"/></svg>

<div class="abs" style="left:0;top:1058px;width:1920px;height:1px;background:#5a5a5a"></div>
<div class="t" style="left:6px;top:1059px;font-size:18px;line-height:20px;font-weight:bold;transform:scaleX(0.875);transform-origin:0 0">TELEDYNE</div><div class="t" style="left:96px;top:1059px;font-size:18px;line-height:20px;transform:scaleX(0.79);transform-origin:0 0">LECROY</div>
<div class="t" style="left:0;top:1060px;width:1903px;text-align:right">3/24/2021 12:47:00 PM</div>

<div class="abs" style="left:1569px;top:994px;width:72px;height:62px;background:#444"></div>
<div class="abs" style="left:1569px;top:994px;width:72px;height:19px;background:#00f800"></div>
<div class="t" style="left:1569px;top:994px;width:72px;text-align:center;color:#000">HD</div>
<div class="t" style="left:1569px;top:1024px;width:72px;text-align:center">12 Bits</div>

<div class="abs" style="left:1644px;top:994px;width:141px;height:62px;background:#444"></div>
<div class="abs" style="left:1645px;top:994px;width:139px;height:19px;background:#fff"></div>
<div class="t" style="left:1647px;top:994px;color:#000">Tbase</div>
<div class="t" style="left:0;top:994px;width:1783px;text-align:right;color:#000">-932 ms</div>
<div class="t" style="left:0;top:1014px;width:1783px;text-align:right">200 ms/div</div>
<div class="t" style="left:1647px;top:1034px">200 MS</div>
<div class="t" style="left:0;top:1034px;width:1783px;text-align:right">100 MS/s</div>

<div class="abs" style="left:1788px;top:994px;width:122px;height:62px;background:#444"></div>
<div class="abs" style="left:1789px;top:994px;width:120px;height:19px;background:#fff"></div>
<div class="t" style="left:1791px;top:994px;color:#000">Trigger</div>
<div class="abs" style="left:1854px;top:995px;width:24px;height:17px;background:#000;border-radius:2px"></div>
<div class="t" style="left:1856px;top:994px;font-size:14px">C2</div>
<div class="abs" style="left:1881px;top:995px;width:26px;height:17px;background:#000;border-radius:2px"></div>
<div class="t" style="left:1883px;top:994px;font-size:14px">DC</div>
<div class="t" style="left:1791px;top:1014px">Stop</div>
<div class="t" style="left:0;top:1014px;width:1908px;text-align:right">2.86 V</div>
<div class="t" style="left:1791px;top:1034px">Edge</div>
<div class="t" style="left:0;top:1034px;width:1909px;text-align:right">Positive</div>

</body></html>
